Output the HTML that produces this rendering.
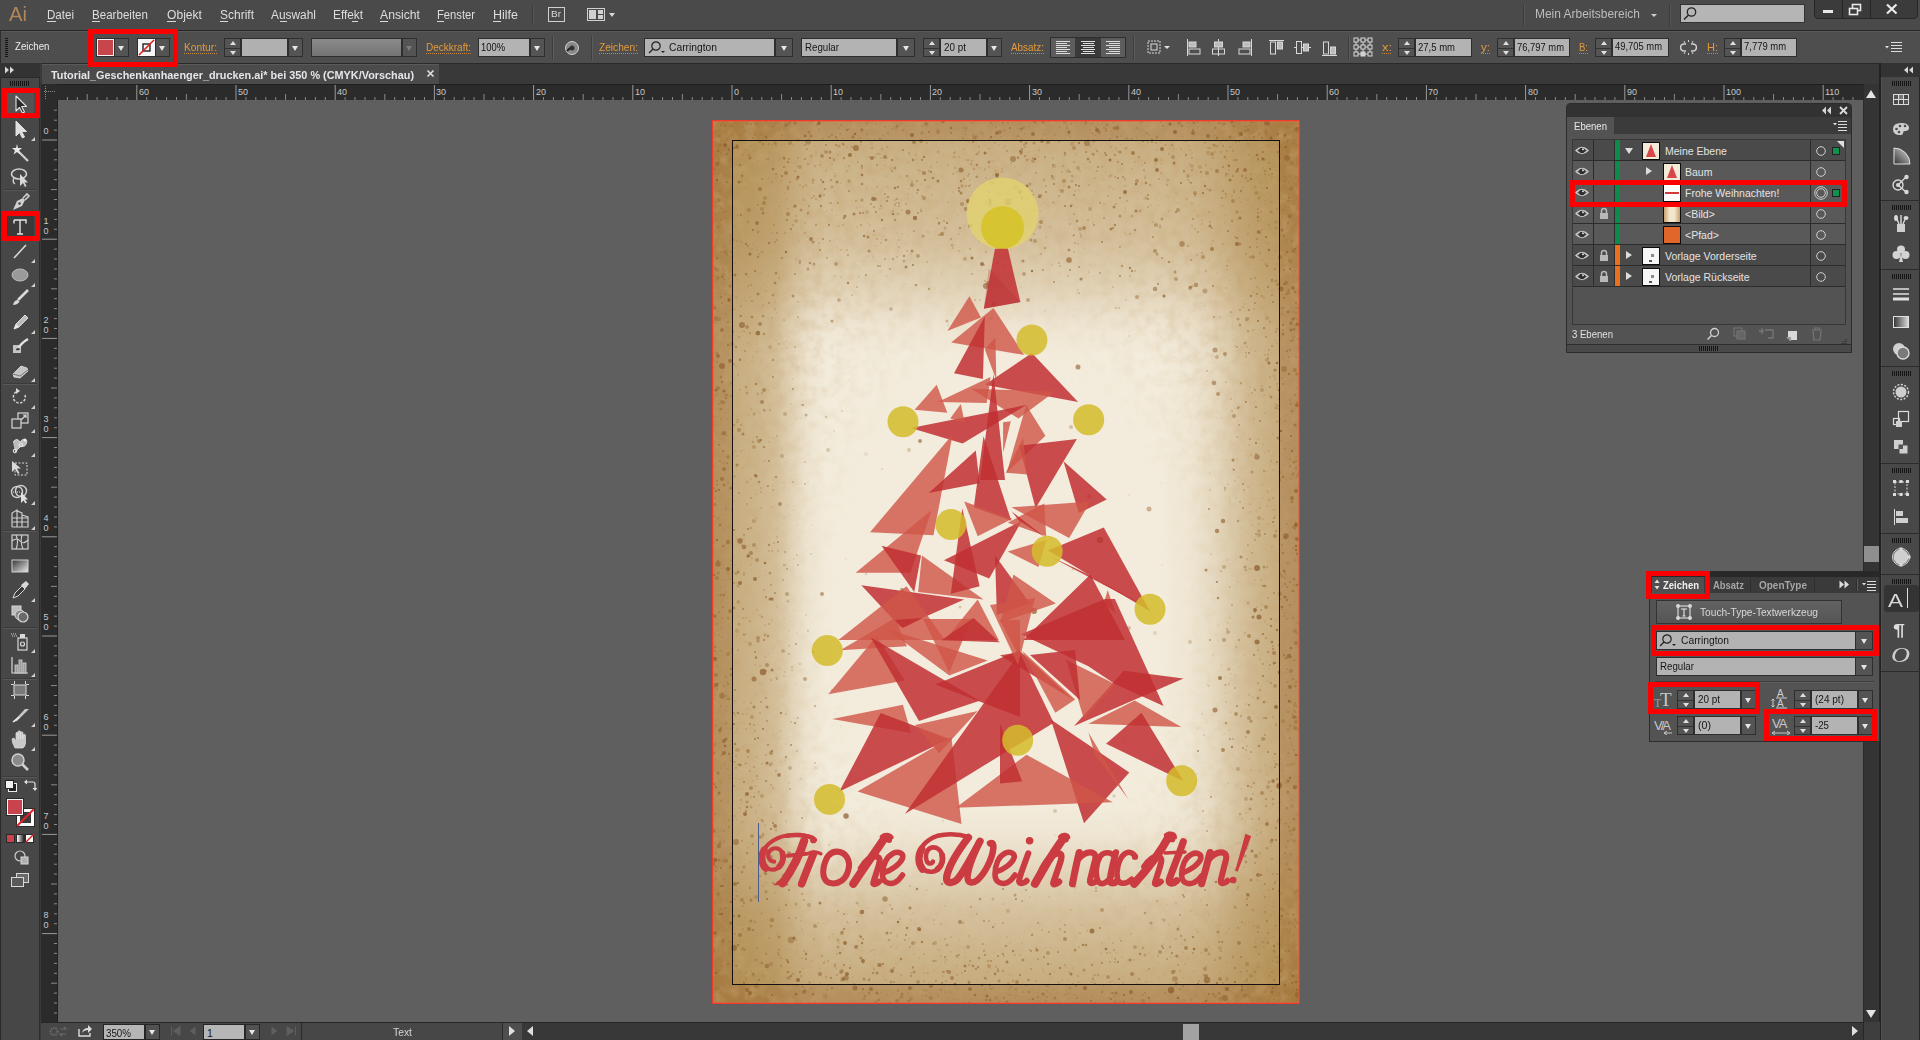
<!DOCTYPE html><html><head><meta charset="utf-8"><style>
*{margin:0;padding:0;box-sizing:border-box}
html,body{width:1920px;height:1040px;overflow:hidden;background:#5f5f5f;font-family:"Liberation Sans",sans-serif;position:relative}
.a{position:absolute}
.t{position:absolute;white-space:nowrap;line-height:1}
</style></head><body>
<div class="a" style="left:0px;top:0px;width:1920px;height:1040px;background:#5f5f5f;"></div>
<div class="a" style="left:0px;top:0px;width:1920px;height:30px;background:#4a4a4a;"></div>
<div class="a" style="left:0px;top:30px;width:1920px;height:1px;background:#262626;"></div>
<div class="t" style="left:9px;top:4.07px;font-size:20px;color:#b3865c;font-weight:normal;font-style:normal;font-family:&quot;Liberation Sans&quot;, sans-serif;transform:scaleX(1.0114);transform-origin:0 0;">Ai</div>
<div class="t" style="left:47px;top:8.92px;font-size:12.5px;color:#dedede;font-weight:normal;font-style:normal;font-family:&quot;Liberation Sans&quot;, sans-serif;transform:scaleX(0.9251);transform-origin:0 0;">Datei</div>
<div class="a" style="left:47px;top:21px;width:9px;height:1px;background:#d8d8d8;"></div>
<div class="t" style="left:92px;top:8.92px;font-size:12.5px;color:#dedede;font-weight:normal;font-style:normal;font-family:&quot;Liberation Sans&quot;, sans-serif;transform:scaleX(0.9261);transform-origin:0 0;">Bearbeiten</div>
<div class="a" style="left:92px;top:21px;width:8px;height:1px;background:#d8d8d8;"></div>
<div class="t" style="left:167px;top:8.92px;font-size:12.5px;color:#dedede;font-weight:normal;font-style:normal;font-family:&quot;Liberation Sans&quot;, sans-serif;transform:scaleX(0.9684);transform-origin:0 0;">Objekt</div>
<div class="a" style="left:167px;top:21px;width:9px;height:1px;background:#d8d8d8;"></div>
<div class="t" style="left:220px;top:8.92px;font-size:12.5px;color:#dedede;font-weight:normal;font-style:normal;font-family:&quot;Liberation Sans&quot;, sans-serif;transform:scaleX(0.9594);transform-origin:0 0;">Schrift</div>
<div class="a" style="left:220px;top:21px;width:8px;height:1px;background:#d8d8d8;"></div>
<div class="t" style="left:271px;top:8.92px;font-size:12.5px;color:#dedede;font-weight:normal;font-style:normal;font-family:&quot;Liberation Sans&quot;, sans-serif;transform:scaleX(0.9524);transform-origin:0 0;">Auswahl</div>
<div class="a" style="left:280px;top:21px;width:7px;height:1px;background:#d8d8d8;"></div>
<div class="t" style="left:333px;top:8.92px;font-size:12.5px;color:#dedede;font-weight:normal;font-style:normal;font-family:&quot;Liberation Sans&quot;, sans-serif;transform:scaleX(0.9453);transform-origin:0 0;">Effekt</div>
<div class="a" style="left:352px;top:21px;width:6px;height:1px;background:#d8d8d8;"></div>
<div class="t" style="left:380px;top:8.92px;font-size:12.5px;color:#dedede;font-weight:normal;font-style:normal;font-family:&quot;Liberation Sans&quot;, sans-serif;transform:scaleX(0.9756);transform-origin:0 0;">Ansicht</div>
<div class="a" style="left:380px;top:21px;width:8px;height:1px;background:#d8d8d8;"></div>
<div class="t" style="left:437px;top:8.92px;font-size:12.5px;color:#dedede;font-weight:normal;font-style:normal;font-family:&quot;Liberation Sans&quot;, sans-serif;transform:scaleX(0.8964);transform-origin:0 0;">Fenster</div>
<div class="a" style="left:437px;top:21px;width:7px;height:1px;background:#d8d8d8;"></div>
<div class="t" style="left:493px;top:8.92px;font-size:12.5px;color:#dedede;font-weight:normal;font-style:normal;font-family:&quot;Liberation Sans&quot;, sans-serif;transform:scaleX(0.9994);transform-origin:0 0;">Hilfe</div>
<div class="a" style="left:493px;top:21px;width:8px;height:1px;background:#d8d8d8;"></div>
<div class="a" style="left:532px;top:6px;width:1px;height:19px;background:#3a3a3a;"></div>
<div class="a" style="left:533px;top:6px;width:1px;height:19px;background:#575757;"></div>
<div class="a" style="left:548px;top:7px;width:17px;height:15px;border:1px solid #d0d0d0"></div>
<div class="t" style="left:551px;top:10.38px;font-size:9px;color:#d8d8d8;font-weight:normal;font-style:normal;font-family:&quot;Liberation Sans&quot;, sans-serif;transform:scaleX(1.1111);transform-origin:0 0;">Br</div>
<div class="a" style="left:587px;top:8px;width:18px;height:13px;border:1px solid #d0d0d0"></div>
<div class="a" style="left:589px;top:10px;width:7px;height:9px;background:#d0d0d0;"></div>
<div class="a" style="left:598px;top:10px;width:5px;height:4px;background:#d0d0d0;"></div>
<div class="a" style="left:598px;top:15px;width:5px;height:4px;background:#d0d0d0;"></div>
<div class="a" style="left:609px;top:13px;width:0;height:0;border-left:3.5px solid transparent;border-right:3.5px solid transparent;border-top:4px solid #d8d8d8"></div>
<div class="a" style="left:1523px;top:5px;width:1px;height:21px;background:#3a3a3a;"></div>
<div class="a" style="left:1524px;top:5px;width:1px;height:21px;background:#575757;"></div>
<div class="t" style="left:1535px;top:7.92px;font-size:12.5px;color:#bdbdbd;font-weight:normal;font-style:normal;font-family:&quot;Liberation Sans&quot;, sans-serif;transform:scaleX(0.9564);transform-origin:0 0;">Mein Arbeitsbereich</div>
<div class="a" style="left:1651px;top:14px;width:0;height:0;border-left:3.0px solid transparent;border-right:3.0px solid transparent;border-top:3px solid #cfcfcf"></div>
<div class="a" style="left:1669px;top:5px;width:1px;height:21px;background:#3a3a3a;"></div>
<div class="a" style="left:1670px;top:5px;width:1px;height:21px;background:#575757;"></div>
<div class="a" style="left:1680px;top:4px;width:125px;height:19px;background:#b5b5b5;border:1px solid #333;"></div>
<svg class="a" style="left:1682px;top:6px;" width="16" height="15" viewBox="0 0 16 15"><circle cx="9.5" cy="6" r="4.2" fill="none" stroke="#222" stroke-width="1.3"/><line x1="6.5" y1="9" x2="2" y2="13.5" stroke="#222" stroke-width="1.5"/></svg>
<div class="a" style="left:1814px;top:-3px;width:104px;height:22px;background:#3b3b3b;border:1px solid #262626;border-radius:0 0 4px 4px;"></div>
<div class="a" style="left:1842px;top:0px;width:1px;height:18px;background:#262626;"></div>
<div class="a" style="left:1870px;top:0px;width:1px;height:18px;background:#262626;"></div>
<div class="a" style="left:1823px;top:10px;width:10px;height:3px;background:#e8e8e8;"></div>
<svg class="a" style="left:1848px;top:3px;" width="16" height="14" viewBox="0 0 16 14"><rect x="4.5" y="1.5" width="8" height="6" fill="none" stroke="#e8e8e8" stroke-width="1.6"/><rect x="1.5" y="5.5" width="8" height="6" fill="#3b3b3b" stroke="#e8e8e8" stroke-width="1.6"/></svg>
<svg class="a" style="left:1885px;top:3px;" width="14" height="12" viewBox="0 0 14 12"><path d="M2 1.5 L11.5 10.5 M11.5 1.5 L2 10.5" stroke="#ececec" stroke-width="2.2"/></svg>
<div class="a" style="left:0px;top:31px;width:1920px;height:32px;background:#4e4e4e;"></div>
<div class="a" style="left:0px;top:31px;width:1920px;height:1px;background:#5a5a5a;"></div>
<div class="a" style="left:0px;top:63px;width:1920px;height:1px;background:#2a2a2a;"></div>
<div class="a" style="left:0px;top:31px;width:1px;height:32px;background:#2e2e2e;"></div>
<div class="a" style="left:5px;top:38px;width:3px;height:1px;background:#151515;"></div>
<div class="a" style="left:5px;top:40px;width:3px;height:1px;background:#151515;"></div>
<div class="a" style="left:5px;top:42px;width:3px;height:1px;background:#151515;"></div>
<div class="a" style="left:5px;top:44px;width:3px;height:1px;background:#151515;"></div>
<div class="a" style="left:5px;top:46px;width:3px;height:1px;background:#151515;"></div>
<div class="a" style="left:5px;top:48px;width:3px;height:1px;background:#151515;"></div>
<div class="a" style="left:5px;top:50px;width:3px;height:1px;background:#151515;"></div>
<div class="a" style="left:5px;top:52px;width:3px;height:1px;background:#151515;"></div>
<div class="a" style="left:5px;top:54px;width:3px;height:1px;background:#151515;"></div>
<div class="a" style="left:5px;top:56px;width:3px;height:1px;background:#151515;"></div>
<div class="t" style="left:15px;top:41.53px;font-size:10px;color:#ececec;font-weight:normal;font-style:normal;font-family:&quot;Liberation Sans&quot;, sans-serif;transform:scaleX(0.9669);transform-origin:0 0;">Zeichen</div>
<div class="a" style="left:96px;top:38px;width:19px;height:19px;background:#5a5a5a;border:1px solid #2e2e2e;"></div>
<div class="a" style="left:97px;top:39px;width:17px;height:17px;background:#f4f4f4;"></div>
<div class="a" style="left:98px;top:40px;width:15px;height:15px;background:#c6464c;"></div>
<div class="a" style="left:114px;top:38px;width:15px;height:19px;background:#545454;border:1px solid #2e2e2e;"></div>
<div class="a" style="left:118.0px;top:45.5px;width:0;height:0;border-left:3.5px solid transparent;border-right:3.5px solid transparent;border-top:5px solid #e6e6e6"></div>
<div class="a" style="left:137px;top:38px;width:19px;height:19px;background:#f6f6f6;border:1px solid #2e2e2e;"></div>
<svg class="a" style="left:137px;top:38px;" width="19" height="19" viewBox="0 0 19 19"><rect x="6" y="6" width="7" height="7" fill="none" stroke="#111" stroke-width="1.3"/><line x1="2" y1="17" x2="17" y2="2" stroke="#e02020" stroke-width="1.6"/></svg>
<div class="a" style="left:155px;top:38px;width:15px;height:19px;background:#545454;border:1px solid #2e2e2e;"></div>
<div class="a" style="left:159.0px;top:45.5px;width:0;height:0;border-left:3.5px solid transparent;border-right:3.5px solid transparent;border-top:5px solid #e6e6e6"></div>
<div class="t" style="left:184px;top:41.61px;font-size:10.5px;color:#e49a3c;font-weight:normal;font-style:normal;font-family:&quot;Liberation Sans&quot;, sans-serif;transform:scaleX(0.9746);transform-origin:0 0;">Kontur:</div>
<div class="a" style="left:184px;top:52.5px;width:33px;height:1px;background-image:linear-gradient(90deg,#c88838 50%,transparent 50%);background-size:2px 1px"></div>
<div class="a" style="left:224px;top:38px;width:17px;height:19px;background:#545454;border:1px solid #2e2e2e;"></div>
<div class="a" style="left:225px;top:47.5px;width:15px;height:1px;background:#333;"></div>
<div class="a" style="left:229.5px;top:41px;width:0;height:0;border-left:3.0px solid transparent;border-right:3.0px solid transparent;border-bottom:4px solid #e0e0e0"></div>
<div class="a" style="left:229.5px;top:50.5px;width:0;height:0;border-left:3.0px solid transparent;border-right:3.0px solid transparent;border-top:4px solid #e0e0e0"></div>
<div class="a" style="left:241px;top:38px;width:47px;height:19px;background:#b0b0b0;border:1px solid #2e2e2e;"></div>
<div class="a" style="left:288px;top:38px;width:15px;height:19px;background:#545454;border:1px solid #2e2e2e;"></div>
<div class="a" style="left:292.0px;top:45.5px;width:0;height:0;border-left:3.5px solid transparent;border-right:3.5px solid transparent;border-top:5px solid #e6e6e6"></div>
<div class="a" style="left:311px;top:38px;width:91px;height:19px;border:1px solid #2e2e2e;background:linear-gradient(180deg,#8a8a8a,#747474)"></div>
<div class="a" style="left:402px;top:38px;width:15px;height:19px;background:#545454;border:1px solid #2e2e2e;"></div>
<div class="a" style="left:406.0px;top:45.5px;width:0;height:0;border-left:3.5px solid transparent;border-right:3.5px solid transparent;border-top:5px solid #7c7c7c"></div>
<div class="t" style="left:426px;top:41.61px;font-size:10.5px;color:#e49a3c;font-weight:normal;font-style:normal;font-family:&quot;Liberation Sans&quot;, sans-serif;transform:scaleX(0.9521);transform-origin:0 0;">Deckkraft:</div>
<div class="a" style="left:426px;top:52.5px;width:45px;height:1px;background-image:linear-gradient(90deg,#c88838 50%,transparent 50%);background-size:2px 1px"></div>
<div class="a" style="left:478px;top:38px;width:52px;height:19px;background:#b3b3b3;border:1px solid #2e2e2e;"></div>
<div class="t" style="left:481px;top:41.61px;font-size:10.5px;color:#111;font-weight:normal;font-style:normal;font-family:&quot;Liberation Sans&quot;, sans-serif;transform:scaleX(0.8935);transform-origin:0 0;">100%</div>
<div class="a" style="left:530px;top:38px;width:15px;height:19px;background:#545454;border:1px solid #2e2e2e;"></div>
<div class="a" style="left:534.0px;top:45.5px;width:0;height:0;border-left:3.5px solid transparent;border-right:3.5px solid transparent;border-top:5px solid #e6e6e6"></div>
<div class="a" style="left:552px;top:36px;width:1px;height:24px;background:#3e3e3e;"></div>
<div class="a" style="left:553px;top:36px;width:1px;height:24px;background:#5c5c5c;"></div>
<svg class="a" style="left:564px;top:40px;" width="16" height="16" viewBox="0 0 16 16"><circle cx="8" cy="8" r="6.5" fill="#8a8a8a" stroke="#cfcfcf" stroke-width="1"/><circle cx="8" cy="8" r="2.5" fill="#333"/><path d="M3 11 L6 8" stroke="#222" stroke-width="2"/></svg>
<div class="a" style="left:591px;top:36px;width:1px;height:24px;background:#3e3e3e;"></div>
<div class="a" style="left:592px;top:36px;width:1px;height:24px;background:#5c5c5c;"></div>
<div class="t" style="left:599px;top:41.61px;font-size:10.5px;color:#e49a3c;font-weight:normal;font-style:normal;font-family:&quot;Liberation Sans&quot;, sans-serif;transform:scaleX(0.9682);transform-origin:0 0;">Zeichen:</div>
<div class="a" style="left:599px;top:52.5px;width:39px;height:1px;background-image:linear-gradient(90deg,#c88838 50%,transparent 50%);background-size:2px 1px"></div>
<div class="a" style="left:644px;top:38px;width:131px;height:19px;background:#b3b3b3;border:1px solid #2e2e2e;"></div>
<svg class="a" style="left:647px;top:40px;" width="22" height="15" viewBox="0 0 22 15"><circle cx="9" cy="6" r="4.2" fill="none" stroke="#222" stroke-width="1.2"/><line x1="6" y1="9" x2="2" y2="13" stroke="#222" stroke-width="1.3"/><path d="M14 11 L18 11 L16 13 Z" fill="#222"/></svg>
<div class="t" style="left:669px;top:42.11px;font-size:10.5px;color:#161616;font-weight:normal;font-style:normal;font-family:&quot;Liberation Sans&quot;, sans-serif;transform:scaleX(0.9790);transform-origin:0 0;">Carrington</div>
<div class="a" style="left:775px;top:38px;width:18px;height:19px;background:#545454;border:1px solid #2e2e2e;"></div>
<div class="a" style="left:780.5px;top:45.5px;width:0;height:0;border-left:3.5px solid transparent;border-right:3.5px solid transparent;border-top:5px solid #e6e6e6"></div>
<div class="a" style="left:801px;top:38px;width:96px;height:19px;background:#b3b3b3;border:1px solid #2e2e2e;"></div>
<div class="t" style="left:805px;top:42.11px;font-size:10.5px;color:#161616;font-weight:normal;font-style:normal;font-family:&quot;Liberation Sans&quot;, sans-serif;transform:scaleX(0.9244);transform-origin:0 0;">Regular</div>
<div class="a" style="left:897px;top:38px;width:18px;height:19px;background:#545454;border:1px solid #2e2e2e;"></div>
<div class="a" style="left:902.5px;top:45.5px;width:0;height:0;border-left:3.5px solid transparent;border-right:3.5px solid transparent;border-top:5px solid #e6e6e6"></div>
<div class="a" style="left:923px;top:38px;width:17px;height:19px;background:#545454;border:1px solid #2e2e2e;"></div>
<div class="a" style="left:924px;top:47.5px;width:15px;height:1px;background:#333;"></div>
<div class="a" style="left:928.5px;top:41px;width:0;height:0;border-left:3.0px solid transparent;border-right:3.0px solid transparent;border-bottom:4px solid #e0e0e0"></div>
<div class="a" style="left:928.5px;top:50.5px;width:0;height:0;border-left:3.0px solid transparent;border-right:3.0px solid transparent;border-top:4px solid #e0e0e0"></div>
<div class="a" style="left:940px;top:38px;width:47px;height:19px;background:#b3b3b3;border:1px solid #2e2e2e;"></div>
<div class="t" style="left:944px;top:42.11px;font-size:10.5px;color:#161616;font-weight:normal;font-style:normal;font-family:&quot;Liberation Sans&quot;, sans-serif;transform:scaleX(0.9418);transform-origin:0 0;">20 pt</div>
<div class="a" style="left:987px;top:38px;width:15px;height:19px;background:#545454;border:1px solid #2e2e2e;"></div>
<div class="a" style="left:991.0px;top:45.5px;width:0;height:0;border-left:3.5px solid transparent;border-right:3.5px solid transparent;border-top:5px solid #e6e6e6"></div>
<div class="t" style="left:1011px;top:41.61px;font-size:10.5px;color:#e49a3c;font-weight:normal;font-style:normal;font-family:&quot;Liberation Sans&quot;, sans-serif;transform:scaleX(0.9420);transform-origin:0 0;">Absatz:</div>
<div class="a" style="left:1011px;top:52.5px;width:33px;height:1px;background-image:linear-gradient(90deg,#c88838 50%,transparent 50%);background-size:2px 1px"></div>
<div class="a" style="left:1050px;top:37px;width:76px;height:21px;background:#3a3a3a;border:1px solid #2e2e2e;"></div>
<div class="a" style="left:1051px;top:38px;width:24px;height:19px;background:#5d5d5d;"></div>
<div class="a" style="left:1076px;top:38px;width:24px;height:19px;background:#393939;"></div>
<div class="a" style="left:1101px;top:38px;width:24px;height:19px;background:#5d5d5d;"></div>
<div class="a" style="left:1056px;top:41px;width:14px;height:1px;background:#dcdcdc;"></div>
<div class="a" style="left:1056px;top:43px;width:11px;height:1px;background:#dcdcdc;"></div>
<div class="a" style="left:1056px;top:45px;width:14px;height:1px;background:#dcdcdc;"></div>
<div class="a" style="left:1056px;top:47px;width:11px;height:1px;background:#dcdcdc;"></div>
<div class="a" style="left:1056px;top:49px;width:14px;height:1px;background:#dcdcdc;"></div>
<div class="a" style="left:1056px;top:51px;width:11px;height:1px;background:#dcdcdc;"></div>
<div class="a" style="left:1056px;top:53px;width:14px;height:1px;background:#dcdcdc;"></div>
<div class="a" style="left:1081.0px;top:41px;width:14px;height:1px;background:#dcdcdc;"></div>
<div class="a" style="left:1082.5px;top:43px;width:11px;height:1px;background:#dcdcdc;"></div>
<div class="a" style="left:1081.0px;top:45px;width:14px;height:1px;background:#dcdcdc;"></div>
<div class="a" style="left:1082.5px;top:47px;width:11px;height:1px;background:#dcdcdc;"></div>
<div class="a" style="left:1081.0px;top:49px;width:14px;height:1px;background:#dcdcdc;"></div>
<div class="a" style="left:1082.5px;top:51px;width:11px;height:1px;background:#dcdcdc;"></div>
<div class="a" style="left:1081.0px;top:53px;width:14px;height:1px;background:#dcdcdc;"></div>
<div class="a" style="left:1106px;top:41px;width:14px;height:1px;background:#dcdcdc;"></div>
<div class="a" style="left:1109px;top:43px;width:11px;height:1px;background:#dcdcdc;"></div>
<div class="a" style="left:1106px;top:45px;width:14px;height:1px;background:#dcdcdc;"></div>
<div class="a" style="left:1109px;top:47px;width:11px;height:1px;background:#dcdcdc;"></div>
<div class="a" style="left:1106px;top:49px;width:14px;height:1px;background:#dcdcdc;"></div>
<div class="a" style="left:1109px;top:51px;width:11px;height:1px;background:#dcdcdc;"></div>
<div class="a" style="left:1106px;top:53px;width:14px;height:1px;background:#dcdcdc;"></div>
<div class="a" style="left:1133px;top:36px;width:1px;height:24px;background:#3e3e3e;"></div>
<div class="a" style="left:1134px;top:36px;width:1px;height:24px;background:#5c5c5c;"></div>
<svg class="a" style="left:1145px;top:38px;" width="28" height="20" viewBox="0 0 28 20"><rect x="3" y="3" width="12" height="12" fill="none" stroke="#d8d8d8" stroke-width="1" stroke-dasharray="2 1"/><rect x="6" y="6" width="6" height="6" fill="none" stroke="#d8d8d8"/><path d="M19 8 L25 8 L22 11 Z" fill="#e0e0e0"/></svg>
<svg class="a" style="left:1185px;top:38px;" width="16" height="20" viewBox="0 0 16 20"><line x1="2.5" y1="1" x2="2.5" y2="18" stroke="#d8d8d8" stroke-width="1"/><rect x="4" y="4" width="7" height="5" fill="#bcbcbc" stroke="#d8d8d8"/><rect x="4" y="11" width="11" height="5" fill="none" stroke="#d8d8d8"/></svg>
<svg class="a" style="left:1211px;top:38px;" width="16" height="20" viewBox="0 0 16 20"><line x1="7.5" y1="1" x2="7.5" y2="18" stroke="#d8d8d8"/><rect x="3.5" y="4" width="8" height="5" fill="#bcbcbc" stroke="#d8d8d8"/><rect x="1.5" y="11" width="12" height="5" fill="none" stroke="#d8d8d8"/></svg>
<svg class="a" style="left:1238px;top:38px;" width="16" height="20" viewBox="0 0 16 20"><line x1="13.5" y1="1" x2="13.5" y2="18" stroke="#d8d8d8"/><rect x="5" y="4" width="7" height="5" fill="#bcbcbc" stroke="#d8d8d8"/><rect x="1" y="11" width="11" height="5" fill="none" stroke="#d8d8d8"/></svg>
<svg class="a" style="left:1268px;top:38px;" width="18" height="20" viewBox="0 0 18 20"><line x1="1" y1="2.5" x2="16" y2="2.5" stroke="#d8d8d8"/><rect x="2.5" y="4" width="5" height="12" fill="none" stroke="#d8d8d8"/><rect x="9.5" y="4" width="5" height="7" fill="#bcbcbc" stroke="#d8d8d8"/></svg>
<svg class="a" style="left:1294px;top:38px;" width="18" height="20" viewBox="0 0 18 20"><line x1="0" y1="9.5" x2="17" y2="9.5" stroke="#d8d8d8"/><rect x="2.5" y="3.5" width="5" height="12" fill="#4e4e4e" stroke="#d8d8d8"/><rect x="9.5" y="6" width="5" height="7" fill="#bcbcbc" stroke="#d8d8d8"/></svg>
<svg class="a" style="left:1321px;top:38px;" width="18" height="20" viewBox="0 0 18 20"><line x1="1" y1="17.5" x2="16" y2="17.5" stroke="#d8d8d8"/><rect x="2.5" y="4" width="5" height="12" fill="none" stroke="#d8d8d8"/><rect x="9.5" y="9" width="5" height="7" fill="#bcbcbc" stroke="#d8d8d8"/></svg>
<div class="a" style="left:1348px;top:36px;width:1px;height:24px;background:#3e3e3e;"></div>
<div class="a" style="left:1349px;top:36px;width:1px;height:24px;background:#5c5c5c;"></div>
<svg class="a" style="left:1353px;top:37px;" width="21" height="21" viewBox="0 0 21 21"><rect x="1" y="1" width="4" height="4" fill="none" stroke="#d8d8d8" stroke-width="1"/><rect x="8" y="1" width="4" height="4" fill="none" stroke="#d8d8d8" stroke-width="1"/><rect x="15" y="1" width="4" height="4" fill="none" stroke="#d8d8d8" stroke-width="1"/><rect x="1" y="8" width="4" height="4" fill="none" stroke="#d8d8d8" stroke-width="1"/><rect x="8" y="8" width="4" height="4" fill="none" stroke="#d8d8d8" stroke-width="1"/><rect x="15" y="8" width="4" height="4" fill="none" stroke="#d8d8d8" stroke-width="1"/><rect x="1" y="15" width="4" height="4" fill="none" stroke="#d8d8d8" stroke-width="1"/><rect x="8" y="15" width="4" height="4" fill="#cfcfcf" stroke="#d8d8d8" stroke-width="1"/><rect x="15" y="15" width="4" height="4" fill="none" stroke="#d8d8d8" stroke-width="1"/><path d="M5 3h3M12 3h3M5 10h3M12 10h3M5 17h3M12 17h3M3 5v3M3 12v3M10 5v3M10 12v3M17 5v3M17 12v3" stroke="#d8d8d8"/></svg>
<div class="t" style="left:1382px;top:41.61px;font-size:10.5px;color:#e49a3c;font-weight:normal;font-style:normal;font-family:&quot;Liberation Sans&quot;, sans-serif;transform:scaleX(1.2237);transform-origin:0 0;">x:</div>
<div class="a" style="left:1382px;top:52.5px;width:10px;height:1px;background-image:linear-gradient(90deg,#c88838 50%,transparent 50%);background-size:2px 1px"></div>
<div class="a" style="left:1398px;top:38px;width:17px;height:19px;background:#545454;border:1px solid #2e2e2e;"></div>
<div class="a" style="left:1399px;top:47.5px;width:15px;height:1px;background:#333;"></div>
<div class="a" style="left:1403.5px;top:41px;width:0;height:0;border-left:3.0px solid transparent;border-right:3.0px solid transparent;border-bottom:4px solid #e0e0e0"></div>
<div class="a" style="left:1403.5px;top:50.5px;width:0;height:0;border-left:3.0px solid transparent;border-right:3.0px solid transparent;border-top:4px solid #e0e0e0"></div>
<div class="a" style="left:1415px;top:38px;width:57px;height:19px;background:#b3b3b3;border:1px solid #2e2e2e;"></div>
<div class="t" style="left:1418px;top:42.11px;font-size:10.5px;color:#161616;font-weight:normal;font-style:normal;font-family:&quot;Liberation Sans&quot;, sans-serif;transform:scaleX(0.9055);transform-origin:0 0;">27,5 mm</div>
<div class="t" style="left:1481px;top:41.61px;font-size:10.5px;color:#e49a3c;font-weight:normal;font-style:normal;font-family:&quot;Liberation Sans&quot;, sans-serif;transform:scaleX(1.1013);transform-origin:0 0;">y:</div>
<div class="a" style="left:1481px;top:52.5px;width:9px;height:1px;background-image:linear-gradient(90deg,#c88838 50%,transparent 50%);background-size:2px 1px"></div>
<div class="a" style="left:1497px;top:38px;width:17px;height:19px;background:#545454;border:1px solid #2e2e2e;"></div>
<div class="a" style="left:1498px;top:47.5px;width:15px;height:1px;background:#333;"></div>
<div class="a" style="left:1502.5px;top:41px;width:0;height:0;border-left:3.0px solid transparent;border-right:3.0px solid transparent;border-bottom:4px solid #e0e0e0"></div>
<div class="a" style="left:1502.5px;top:50.5px;width:0;height:0;border-left:3.0px solid transparent;border-right:3.0px solid transparent;border-top:4px solid #e0e0e0"></div>
<div class="a" style="left:1514px;top:38px;width:56px;height:19px;background:#b3b3b3;border:1px solid #2e2e2e;"></div>
<div class="t" style="left:1517px;top:42.11px;font-size:10.5px;color:#161616;font-weight:normal;font-style:normal;font-family:&quot;Liberation Sans&quot;, sans-serif;transform:scaleX(0.8947);transform-origin:0 0;">76,797 mm</div>
<div class="t" style="left:1579px;top:41.61px;font-size:10.5px;color:#e49a3c;font-weight:normal;font-style:normal;font-family:&quot;Liberation Sans&quot;, sans-serif;transform:scaleX(0.9071);transform-origin:0 0;">B:</div>
<div class="a" style="left:1579px;top:52.5px;width:9px;height:1px;background-image:linear-gradient(90deg,#c88838 50%,transparent 50%);background-size:2px 1px"></div>
<div class="a" style="left:1595px;top:38px;width:17px;height:19px;background:#545454;border:1px solid #2e2e2e;"></div>
<div class="a" style="left:1596px;top:47.5px;width:15px;height:1px;background:#333;"></div>
<div class="a" style="left:1600.5px;top:41px;width:0;height:0;border-left:3.0px solid transparent;border-right:3.0px solid transparent;border-bottom:4px solid #e0e0e0"></div>
<div class="a" style="left:1600.5px;top:50.5px;width:0;height:0;border-left:3.0px solid transparent;border-right:3.0px solid transparent;border-top:4px solid #e0e0e0"></div>
<div class="a" style="left:1612px;top:38px;width:57px;height:19px;background:#b3b3b3;border:1px solid #2e2e2e;"></div>
<div class="t" style="left:1615px;top:41.11px;font-size:10.5px;color:#161616;font-weight:normal;font-style:normal;font-family:&quot;Liberation Sans&quot;, sans-serif;transform:scaleX(0.8947);transform-origin:0 0;">49,705 mm</div>
<svg class="a" style="left:1680px;top:39px;" width="17" height="17" viewBox="0 0 17 17"><path d="M6 5 H4 a3.5 3.5 0 0 0 0 7 H6 M11 5 H13 a3.5 3.5 0 0 1 0 7 H11" fill="none" stroke="#d0d0d0" stroke-width="1.6"/><path d="M8.5 1v2M8.5 14v2M4 2l1 2M13 2l-1 2M4 15l1-2M13 15l-1-2" stroke="#d0d0d0"/></svg>
<div class="t" style="left:1707px;top:41.61px;font-size:10.5px;color:#e49a3c;font-weight:normal;font-style:normal;font-family:&quot;Liberation Sans&quot;, sans-serif;transform:scaleX(1.0476);transform-origin:0 0;">H:</div>
<div class="a" style="left:1707px;top:52.5px;width:11px;height:1px;background-image:linear-gradient(90deg,#c88838 50%,transparent 50%);background-size:2px 1px"></div>
<div class="a" style="left:1724px;top:38px;width:17px;height:19px;background:#545454;border:1px solid #2e2e2e;"></div>
<div class="a" style="left:1725px;top:47.5px;width:15px;height:1px;background:#333;"></div>
<div class="a" style="left:1729.5px;top:41px;width:0;height:0;border-left:3.0px solid transparent;border-right:3.0px solid transparent;border-bottom:4px solid #e0e0e0"></div>
<div class="a" style="left:1729.5px;top:50.5px;width:0;height:0;border-left:3.0px solid transparent;border-right:3.0px solid transparent;border-top:4px solid #e0e0e0"></div>
<div class="a" style="left:1741px;top:38px;width:56px;height:19px;background:#b3b3b3;border:1px solid #2e2e2e;"></div>
<div class="t" style="left:1744px;top:41.11px;font-size:10.5px;color:#161616;font-weight:normal;font-style:normal;font-family:&quot;Liberation Sans&quot;, sans-serif;transform:scaleX(0.8996);transform-origin:0 0;">7,779 mm</div>
<svg class="a" style="left:1884px;top:40px;" width="20" height="14" viewBox="0 0 20 14"><path d="M1 6 L5 6 L3 8.5 Z" fill="#dcdcdc"/><path d="M7 2.5h11M7 5.5h11M7 8.5h11M7 11.5h11" stroke="#dcdcdc" stroke-width="1.2"/></svg>
<div class="a" style="left:41px;top:64px;width:1840px;height:20px;background:#393939;"></div>
<div class="a" style="left:42px;top:64px;width:397px;height:20px;background:#4b4b4b;"></div>
<div class="a" style="left:42px;top:64px;width:397px;height:1px;background:#5a5a5a;"></div>
<div class="t" style="left:51px;top:69.69px;font-size:11px;color:#e6e6ea;font-weight:bold;font-style:normal;font-family:&quot;Liberation Sans&quot;, sans-serif;transform:scaleX(0.9875);transform-origin:0 0;">Tutorial_Geschenkanhaenger_drucken.ai* bei 350 % (CMYK/Vorschau)</div>
<svg class="a" style="left:426px;top:69px;" width="9" height="9" viewBox="0 0 9 9"><path d="M1.5 1.5 L7.5 7.5 M7.5 1.5 L1.5 7.5" stroke="#e0e0e0" stroke-width="1.6"/></svg>
<div class="a" style="left:41px;top:84px;width:1822px;height:16px;background:#2b2b2b;"></div>
<div class="a" style="left:41px;top:84px;width:1822px;height:1px;background:#1e1e1e;"></div>
<div class="a" style="left:41px;top:84px;width:16px;height:938px;background:#2b2b2b;"></div>
<svg class="a" style="left:41px;top:84px;" width="1822" height="16" viewBox="0 0 1822 16"><line x1="26.4" y1="13" x2="26.4" y2="16" stroke="#8a8a8a" stroke-width="1"/><line x1="36.3" y1="13" x2="36.3" y2="16" stroke="#8a8a8a" stroke-width="1"/><line x1="46.2" y1="10" x2="46.2" y2="16" stroke="#8a8a8a" stroke-width="1"/><line x1="56.1" y1="13" x2="56.1" y2="16" stroke="#8a8a8a" stroke-width="1"/><line x1="66.0" y1="13" x2="66.0" y2="16" stroke="#8a8a8a" stroke-width="1"/><line x1="76.0" y1="13" x2="76.0" y2="16" stroke="#8a8a8a" stroke-width="1"/><line x1="85.9" y1="13" x2="85.9" y2="16" stroke="#8a8a8a" stroke-width="1"/><line x1="95.8" y1="1" x2="95.8" y2="16" stroke="#9a9a9a" stroke-width="1"/><line x1="105.7" y1="13" x2="105.7" y2="16" stroke="#8a8a8a" stroke-width="1"/><line x1="115.6" y1="13" x2="115.6" y2="16" stroke="#8a8a8a" stroke-width="1"/><line x1="125.6" y1="13" x2="125.6" y2="16" stroke="#8a8a8a" stroke-width="1"/><line x1="135.5" y1="13" x2="135.5" y2="16" stroke="#8a8a8a" stroke-width="1"/><line x1="145.4" y1="10" x2="145.4" y2="16" stroke="#8a8a8a" stroke-width="1"/><line x1="155.3" y1="13" x2="155.3" y2="16" stroke="#8a8a8a" stroke-width="1"/><line x1="165.2" y1="13" x2="165.2" y2="16" stroke="#8a8a8a" stroke-width="1"/><line x1="175.2" y1="13" x2="175.2" y2="16" stroke="#8a8a8a" stroke-width="1"/><line x1="185.1" y1="13" x2="185.1" y2="16" stroke="#8a8a8a" stroke-width="1"/><line x1="195.0" y1="1" x2="195.0" y2="16" stroke="#9a9a9a" stroke-width="1"/><line x1="204.9" y1="13" x2="204.9" y2="16" stroke="#8a8a8a" stroke-width="1"/><line x1="214.8" y1="13" x2="214.8" y2="16" stroke="#8a8a8a" stroke-width="1"/><line x1="224.8" y1="13" x2="224.8" y2="16" stroke="#8a8a8a" stroke-width="1"/><line x1="234.7" y1="13" x2="234.7" y2="16" stroke="#8a8a8a" stroke-width="1"/><line x1="244.6" y1="10" x2="244.6" y2="16" stroke="#8a8a8a" stroke-width="1"/><line x1="254.5" y1="13" x2="254.5" y2="16" stroke="#8a8a8a" stroke-width="1"/><line x1="264.4" y1="13" x2="264.4" y2="16" stroke="#8a8a8a" stroke-width="1"/><line x1="274.4" y1="13" x2="274.4" y2="16" stroke="#8a8a8a" stroke-width="1"/><line x1="284.3" y1="13" x2="284.3" y2="16" stroke="#8a8a8a" stroke-width="1"/><line x1="294.2" y1="1" x2="294.2" y2="16" stroke="#9a9a9a" stroke-width="1"/><line x1="304.1" y1="13" x2="304.1" y2="16" stroke="#8a8a8a" stroke-width="1"/><line x1="314.0" y1="13" x2="314.0" y2="16" stroke="#8a8a8a" stroke-width="1"/><line x1="324.0" y1="13" x2="324.0" y2="16" stroke="#8a8a8a" stroke-width="1"/><line x1="333.9" y1="13" x2="333.9" y2="16" stroke="#8a8a8a" stroke-width="1"/><line x1="343.8" y1="10" x2="343.8" y2="16" stroke="#8a8a8a" stroke-width="1"/><line x1="353.7" y1="13" x2="353.7" y2="16" stroke="#8a8a8a" stroke-width="1"/><line x1="363.6" y1="13" x2="363.6" y2="16" stroke="#8a8a8a" stroke-width="1"/><line x1="373.6" y1="13" x2="373.6" y2="16" stroke="#8a8a8a" stroke-width="1"/><line x1="383.5" y1="13" x2="383.5" y2="16" stroke="#8a8a8a" stroke-width="1"/><line x1="393.4" y1="1" x2="393.4" y2="16" stroke="#9a9a9a" stroke-width="1"/><line x1="403.3" y1="13" x2="403.3" y2="16" stroke="#8a8a8a" stroke-width="1"/><line x1="413.2" y1="13" x2="413.2" y2="16" stroke="#8a8a8a" stroke-width="1"/><line x1="423.2" y1="13" x2="423.2" y2="16" stroke="#8a8a8a" stroke-width="1"/><line x1="433.1" y1="13" x2="433.1" y2="16" stroke="#8a8a8a" stroke-width="1"/><line x1="443.0" y1="10" x2="443.0" y2="16" stroke="#8a8a8a" stroke-width="1"/><line x1="452.9" y1="13" x2="452.9" y2="16" stroke="#8a8a8a" stroke-width="1"/><line x1="462.8" y1="13" x2="462.8" y2="16" stroke="#8a8a8a" stroke-width="1"/><line x1="472.8" y1="13" x2="472.8" y2="16" stroke="#8a8a8a" stroke-width="1"/><line x1="482.7" y1="13" x2="482.7" y2="16" stroke="#8a8a8a" stroke-width="1"/><line x1="492.6" y1="1" x2="492.6" y2="16" stroke="#9a9a9a" stroke-width="1"/><line x1="502.5" y1="13" x2="502.5" y2="16" stroke="#8a8a8a" stroke-width="1"/><line x1="512.4" y1="13" x2="512.4" y2="16" stroke="#8a8a8a" stroke-width="1"/><line x1="522.4" y1="13" x2="522.4" y2="16" stroke="#8a8a8a" stroke-width="1"/><line x1="532.3" y1="13" x2="532.3" y2="16" stroke="#8a8a8a" stroke-width="1"/><line x1="542.2" y1="10" x2="542.2" y2="16" stroke="#8a8a8a" stroke-width="1"/><line x1="552.1" y1="13" x2="552.1" y2="16" stroke="#8a8a8a" stroke-width="1"/><line x1="562.0" y1="13" x2="562.0" y2="16" stroke="#8a8a8a" stroke-width="1"/><line x1="572.0" y1="13" x2="572.0" y2="16" stroke="#8a8a8a" stroke-width="1"/><line x1="581.9" y1="13" x2="581.9" y2="16" stroke="#8a8a8a" stroke-width="1"/><line x1="591.8" y1="1" x2="591.8" y2="16" stroke="#9a9a9a" stroke-width="1"/><line x1="601.7" y1="13" x2="601.7" y2="16" stroke="#8a8a8a" stroke-width="1"/><line x1="611.6" y1="13" x2="611.6" y2="16" stroke="#8a8a8a" stroke-width="1"/><line x1="621.6" y1="13" x2="621.6" y2="16" stroke="#8a8a8a" stroke-width="1"/><line x1="631.5" y1="13" x2="631.5" y2="16" stroke="#8a8a8a" stroke-width="1"/><line x1="641.4" y1="10" x2="641.4" y2="16" stroke="#8a8a8a" stroke-width="1"/><line x1="651.3" y1="13" x2="651.3" y2="16" stroke="#8a8a8a" stroke-width="1"/><line x1="661.2" y1="13" x2="661.2" y2="16" stroke="#8a8a8a" stroke-width="1"/><line x1="671.2" y1="13" x2="671.2" y2="16" stroke="#8a8a8a" stroke-width="1"/><line x1="681.1" y1="13" x2="681.1" y2="16" stroke="#8a8a8a" stroke-width="1"/><line x1="691.0" y1="1" x2="691.0" y2="16" stroke="#9a9a9a" stroke-width="1"/><line x1="700.9" y1="13" x2="700.9" y2="16" stroke="#8a8a8a" stroke-width="1"/><line x1="710.8" y1="13" x2="710.8" y2="16" stroke="#8a8a8a" stroke-width="1"/><line x1="720.8" y1="13" x2="720.8" y2="16" stroke="#8a8a8a" stroke-width="1"/><line x1="730.7" y1="13" x2="730.7" y2="16" stroke="#8a8a8a" stroke-width="1"/><line x1="740.6" y1="10" x2="740.6" y2="16" stroke="#8a8a8a" stroke-width="1"/><line x1="750.5" y1="13" x2="750.5" y2="16" stroke="#8a8a8a" stroke-width="1"/><line x1="760.4" y1="13" x2="760.4" y2="16" stroke="#8a8a8a" stroke-width="1"/><line x1="770.4" y1="13" x2="770.4" y2="16" stroke="#8a8a8a" stroke-width="1"/><line x1="780.3" y1="13" x2="780.3" y2="16" stroke="#8a8a8a" stroke-width="1"/><line x1="790.2" y1="1" x2="790.2" y2="16" stroke="#9a9a9a" stroke-width="1"/><line x1="800.1" y1="13" x2="800.1" y2="16" stroke="#8a8a8a" stroke-width="1"/><line x1="810.0" y1="13" x2="810.0" y2="16" stroke="#8a8a8a" stroke-width="1"/><line x1="820.0" y1="13" x2="820.0" y2="16" stroke="#8a8a8a" stroke-width="1"/><line x1="829.9" y1="13" x2="829.9" y2="16" stroke="#8a8a8a" stroke-width="1"/><line x1="839.8" y1="10" x2="839.8" y2="16" stroke="#8a8a8a" stroke-width="1"/><line x1="849.7" y1="13" x2="849.7" y2="16" stroke="#8a8a8a" stroke-width="1"/><line x1="859.6" y1="13" x2="859.6" y2="16" stroke="#8a8a8a" stroke-width="1"/><line x1="869.6" y1="13" x2="869.6" y2="16" stroke="#8a8a8a" stroke-width="1"/><line x1="879.5" y1="13" x2="879.5" y2="16" stroke="#8a8a8a" stroke-width="1"/><line x1="889.4" y1="1" x2="889.4" y2="16" stroke="#9a9a9a" stroke-width="1"/><line x1="899.3" y1="13" x2="899.3" y2="16" stroke="#8a8a8a" stroke-width="1"/><line x1="909.2" y1="13" x2="909.2" y2="16" stroke="#8a8a8a" stroke-width="1"/><line x1="919.2" y1="13" x2="919.2" y2="16" stroke="#8a8a8a" stroke-width="1"/><line x1="929.1" y1="13" x2="929.1" y2="16" stroke="#8a8a8a" stroke-width="1"/><line x1="939.0" y1="10" x2="939.0" y2="16" stroke="#8a8a8a" stroke-width="1"/><line x1="948.9" y1="13" x2="948.9" y2="16" stroke="#8a8a8a" stroke-width="1"/><line x1="958.8" y1="13" x2="958.8" y2="16" stroke="#8a8a8a" stroke-width="1"/><line x1="968.8" y1="13" x2="968.8" y2="16" stroke="#8a8a8a" stroke-width="1"/><line x1="978.7" y1="13" x2="978.7" y2="16" stroke="#8a8a8a" stroke-width="1"/><line x1="988.6" y1="1" x2="988.6" y2="16" stroke="#9a9a9a" stroke-width="1"/><line x1="998.5" y1="13" x2="998.5" y2="16" stroke="#8a8a8a" stroke-width="1"/><line x1="1008.4" y1="13" x2="1008.4" y2="16" stroke="#8a8a8a" stroke-width="1"/><line x1="1018.4" y1="13" x2="1018.4" y2="16" stroke="#8a8a8a" stroke-width="1"/><line x1="1028.3" y1="13" x2="1028.3" y2="16" stroke="#8a8a8a" stroke-width="1"/><line x1="1038.2" y1="10" x2="1038.2" y2="16" stroke="#8a8a8a" stroke-width="1"/><line x1="1048.1" y1="13" x2="1048.1" y2="16" stroke="#8a8a8a" stroke-width="1"/><line x1="1058.0" y1="13" x2="1058.0" y2="16" stroke="#8a8a8a" stroke-width="1"/><line x1="1068.0" y1="13" x2="1068.0" y2="16" stroke="#8a8a8a" stroke-width="1"/><line x1="1077.9" y1="13" x2="1077.9" y2="16" stroke="#8a8a8a" stroke-width="1"/><line x1="1087.8" y1="1" x2="1087.8" y2="16" stroke="#9a9a9a" stroke-width="1"/><line x1="1097.7" y1="13" x2="1097.7" y2="16" stroke="#8a8a8a" stroke-width="1"/><line x1="1107.6" y1="13" x2="1107.6" y2="16" stroke="#8a8a8a" stroke-width="1"/><line x1="1117.6" y1="13" x2="1117.6" y2="16" stroke="#8a8a8a" stroke-width="1"/><line x1="1127.5" y1="13" x2="1127.5" y2="16" stroke="#8a8a8a" stroke-width="1"/><line x1="1137.4" y1="10" x2="1137.4" y2="16" stroke="#8a8a8a" stroke-width="1"/><line x1="1147.3" y1="13" x2="1147.3" y2="16" stroke="#8a8a8a" stroke-width="1"/><line x1="1157.2" y1="13" x2="1157.2" y2="16" stroke="#8a8a8a" stroke-width="1"/><line x1="1167.2" y1="13" x2="1167.2" y2="16" stroke="#8a8a8a" stroke-width="1"/><line x1="1177.1" y1="13" x2="1177.1" y2="16" stroke="#8a8a8a" stroke-width="1"/><line x1="1187.0" y1="1" x2="1187.0" y2="16" stroke="#9a9a9a" stroke-width="1"/><line x1="1196.9" y1="13" x2="1196.9" y2="16" stroke="#8a8a8a" stroke-width="1"/><line x1="1206.8" y1="13" x2="1206.8" y2="16" stroke="#8a8a8a" stroke-width="1"/><line x1="1216.8" y1="13" x2="1216.8" y2="16" stroke="#8a8a8a" stroke-width="1"/><line x1="1226.7" y1="13" x2="1226.7" y2="16" stroke="#8a8a8a" stroke-width="1"/><line x1="1236.6" y1="10" x2="1236.6" y2="16" stroke="#8a8a8a" stroke-width="1"/><line x1="1246.5" y1="13" x2="1246.5" y2="16" stroke="#8a8a8a" stroke-width="1"/><line x1="1256.4" y1="13" x2="1256.4" y2="16" stroke="#8a8a8a" stroke-width="1"/><line x1="1266.4" y1="13" x2="1266.4" y2="16" stroke="#8a8a8a" stroke-width="1"/><line x1="1276.3" y1="13" x2="1276.3" y2="16" stroke="#8a8a8a" stroke-width="1"/><line x1="1286.2" y1="1" x2="1286.2" y2="16" stroke="#9a9a9a" stroke-width="1"/><line x1="1296.1" y1="13" x2="1296.1" y2="16" stroke="#8a8a8a" stroke-width="1"/><line x1="1306.0" y1="13" x2="1306.0" y2="16" stroke="#8a8a8a" stroke-width="1"/><line x1="1316.0" y1="13" x2="1316.0" y2="16" stroke="#8a8a8a" stroke-width="1"/><line x1="1325.9" y1="13" x2="1325.9" y2="16" stroke="#8a8a8a" stroke-width="1"/><line x1="1335.8" y1="10" x2="1335.8" y2="16" stroke="#8a8a8a" stroke-width="1"/><line x1="1345.7" y1="13" x2="1345.7" y2="16" stroke="#8a8a8a" stroke-width="1"/><line x1="1355.6" y1="13" x2="1355.6" y2="16" stroke="#8a8a8a" stroke-width="1"/><line x1="1365.6" y1="13" x2="1365.6" y2="16" stroke="#8a8a8a" stroke-width="1"/><line x1="1375.5" y1="13" x2="1375.5" y2="16" stroke="#8a8a8a" stroke-width="1"/><line x1="1385.4" y1="1" x2="1385.4" y2="16" stroke="#9a9a9a" stroke-width="1"/><line x1="1395.3" y1="13" x2="1395.3" y2="16" stroke="#8a8a8a" stroke-width="1"/><line x1="1405.2" y1="13" x2="1405.2" y2="16" stroke="#8a8a8a" stroke-width="1"/><line x1="1415.2" y1="13" x2="1415.2" y2="16" stroke="#8a8a8a" stroke-width="1"/><line x1="1425.1" y1="13" x2="1425.1" y2="16" stroke="#8a8a8a" stroke-width="1"/><line x1="1435.0" y1="10" x2="1435.0" y2="16" stroke="#8a8a8a" stroke-width="1"/><line x1="1444.9" y1="13" x2="1444.9" y2="16" stroke="#8a8a8a" stroke-width="1"/><line x1="1454.8" y1="13" x2="1454.8" y2="16" stroke="#8a8a8a" stroke-width="1"/><line x1="1464.8" y1="13" x2="1464.8" y2="16" stroke="#8a8a8a" stroke-width="1"/><line x1="1474.7" y1="13" x2="1474.7" y2="16" stroke="#8a8a8a" stroke-width="1"/><line x1="1484.6" y1="1" x2="1484.6" y2="16" stroke="#9a9a9a" stroke-width="1"/><line x1="1494.5" y1="13" x2="1494.5" y2="16" stroke="#8a8a8a" stroke-width="1"/><line x1="1504.4" y1="13" x2="1504.4" y2="16" stroke="#8a8a8a" stroke-width="1"/><line x1="1514.4" y1="13" x2="1514.4" y2="16" stroke="#8a8a8a" stroke-width="1"/><line x1="1524.3" y1="13" x2="1524.3" y2="16" stroke="#8a8a8a" stroke-width="1"/><line x1="1534.2" y1="10" x2="1534.2" y2="16" stroke="#8a8a8a" stroke-width="1"/><line x1="1544.1" y1="13" x2="1544.1" y2="16" stroke="#8a8a8a" stroke-width="1"/><line x1="1554.0" y1="13" x2="1554.0" y2="16" stroke="#8a8a8a" stroke-width="1"/><line x1="1564.0" y1="13" x2="1564.0" y2="16" stroke="#8a8a8a" stroke-width="1"/><line x1="1573.9" y1="13" x2="1573.9" y2="16" stroke="#8a8a8a" stroke-width="1"/><line x1="1583.8" y1="1" x2="1583.8" y2="16" stroke="#9a9a9a" stroke-width="1"/><line x1="1593.7" y1="13" x2="1593.7" y2="16" stroke="#8a8a8a" stroke-width="1"/><line x1="1603.6" y1="13" x2="1603.6" y2="16" stroke="#8a8a8a" stroke-width="1"/><line x1="1613.6" y1="13" x2="1613.6" y2="16" stroke="#8a8a8a" stroke-width="1"/><line x1="1623.5" y1="13" x2="1623.5" y2="16" stroke="#8a8a8a" stroke-width="1"/><line x1="1633.4" y1="10" x2="1633.4" y2="16" stroke="#8a8a8a" stroke-width="1"/><line x1="1643.3" y1="13" x2="1643.3" y2="16" stroke="#8a8a8a" stroke-width="1"/><line x1="1653.2" y1="13" x2="1653.2" y2="16" stroke="#8a8a8a" stroke-width="1"/><line x1="1663.2" y1="13" x2="1663.2" y2="16" stroke="#8a8a8a" stroke-width="1"/><line x1="1673.1" y1="13" x2="1673.1" y2="16" stroke="#8a8a8a" stroke-width="1"/><line x1="1683.0" y1="1" x2="1683.0" y2="16" stroke="#9a9a9a" stroke-width="1"/><line x1="1692.9" y1="13" x2="1692.9" y2="16" stroke="#8a8a8a" stroke-width="1"/><line x1="1702.8" y1="13" x2="1702.8" y2="16" stroke="#8a8a8a" stroke-width="1"/><line x1="1712.8" y1="13" x2="1712.8" y2="16" stroke="#8a8a8a" stroke-width="1"/><line x1="1722.7" y1="13" x2="1722.7" y2="16" stroke="#8a8a8a" stroke-width="1"/><line x1="1732.6" y1="10" x2="1732.6" y2="16" stroke="#8a8a8a" stroke-width="1"/><line x1="1742.5" y1="13" x2="1742.5" y2="16" stroke="#8a8a8a" stroke-width="1"/><line x1="1752.4" y1="13" x2="1752.4" y2="16" stroke="#8a8a8a" stroke-width="1"/><line x1="1762.4" y1="13" x2="1762.4" y2="16" stroke="#8a8a8a" stroke-width="1"/><line x1="1772.3" y1="13" x2="1772.3" y2="16" stroke="#8a8a8a" stroke-width="1"/><line x1="1782.2" y1="1" x2="1782.2" y2="16" stroke="#9a9a9a" stroke-width="1"/><line x1="1792.1" y1="13" x2="1792.1" y2="16" stroke="#8a8a8a" stroke-width="1"/><line x1="1802.0" y1="13" x2="1802.0" y2="16" stroke="#8a8a8a" stroke-width="1"/><line x1="1812.0" y1="13" x2="1812.0" y2="16" stroke="#8a8a8a" stroke-width="1"/></svg>
<div class="t" style="left:139px;top:87.88px;font-size:9px;color:#c8c8c8;font-weight:normal;font-style:normal;font-family:&quot;Liberation Sans&quot;, sans-serif;">60</div>
<div class="t" style="left:238px;top:87.88px;font-size:9px;color:#c8c8c8;font-weight:normal;font-style:normal;font-family:&quot;Liberation Sans&quot;, sans-serif;">50</div>
<div class="t" style="left:337px;top:87.88px;font-size:9px;color:#c8c8c8;font-weight:normal;font-style:normal;font-family:&quot;Liberation Sans&quot;, sans-serif;">40</div>
<div class="t" style="left:436px;top:87.88px;font-size:9px;color:#c8c8c8;font-weight:normal;font-style:normal;font-family:&quot;Liberation Sans&quot;, sans-serif;">30</div>
<div class="t" style="left:536px;top:87.88px;font-size:9px;color:#c8c8c8;font-weight:normal;font-style:normal;font-family:&quot;Liberation Sans&quot;, sans-serif;">20</div>
<div class="t" style="left:635px;top:87.88px;font-size:9px;color:#c8c8c8;font-weight:normal;font-style:normal;font-family:&quot;Liberation Sans&quot;, sans-serif;">10</div>
<div class="t" style="left:734px;top:87.88px;font-size:9px;color:#c8c8c8;font-weight:normal;font-style:normal;font-family:&quot;Liberation Sans&quot;, sans-serif;">0</div>
<div class="t" style="left:833px;top:87.88px;font-size:9px;color:#c8c8c8;font-weight:normal;font-style:normal;font-family:&quot;Liberation Sans&quot;, sans-serif;">10</div>
<div class="t" style="left:932px;top:87.88px;font-size:9px;color:#c8c8c8;font-weight:normal;font-style:normal;font-family:&quot;Liberation Sans&quot;, sans-serif;">20</div>
<div class="t" style="left:1032px;top:87.88px;font-size:9px;color:#c8c8c8;font-weight:normal;font-style:normal;font-family:&quot;Liberation Sans&quot;, sans-serif;">30</div>
<div class="t" style="left:1131px;top:87.88px;font-size:9px;color:#c8c8c8;font-weight:normal;font-style:normal;font-family:&quot;Liberation Sans&quot;, sans-serif;">40</div>
<div class="t" style="left:1230px;top:87.88px;font-size:9px;color:#c8c8c8;font-weight:normal;font-style:normal;font-family:&quot;Liberation Sans&quot;, sans-serif;">50</div>
<div class="t" style="left:1329px;top:87.88px;font-size:9px;color:#c8c8c8;font-weight:normal;font-style:normal;font-family:&quot;Liberation Sans&quot;, sans-serif;">60</div>
<div class="t" style="left:1428px;top:87.88px;font-size:9px;color:#c8c8c8;font-weight:normal;font-style:normal;font-family:&quot;Liberation Sans&quot;, sans-serif;">70</div>
<div class="t" style="left:1528px;top:87.88px;font-size:9px;color:#c8c8c8;font-weight:normal;font-style:normal;font-family:&quot;Liberation Sans&quot;, sans-serif;">80</div>
<div class="t" style="left:1627px;top:87.88px;font-size:9px;color:#c8c8c8;font-weight:normal;font-style:normal;font-family:&quot;Liberation Sans&quot;, sans-serif;">90</div>
<div class="t" style="left:1726px;top:87.88px;font-size:9px;color:#c8c8c8;font-weight:normal;font-style:normal;font-family:&quot;Liberation Sans&quot;, sans-serif;">100</div>
<div class="t" style="left:1825px;top:87.88px;font-size:9px;color:#c8c8c8;font-weight:normal;font-style:normal;font-family:&quot;Liberation Sans&quot;, sans-serif;">110</div>
<svg class="a" style="left:41px;top:85px;" width="16" height="15" viewBox="0 0 16 15"><path d="M3 6.5 H15 M4.5 1 V15" stroke="#8a8a8a" stroke-dasharray="1 1"/></svg>
<svg class="a" style="left:41px;top:100px;" width="16" height="922" viewBox="0 0 16 922"><line x1="13" y1="10.2" x2="16" y2="10.2" stroke="#8a8a8a"/><line x1="13" y1="20.2" x2="16" y2="20.2" stroke="#8a8a8a"/><line x1="13" y1="30.1" x2="16" y2="30.1" stroke="#8a8a8a"/><line x1="1" y1="40.0" x2="16" y2="40.0" stroke="#9a9a9a"/><line x1="13" y1="49.9" x2="16" y2="49.9" stroke="#8a8a8a"/><line x1="13" y1="59.8" x2="16" y2="59.8" stroke="#8a8a8a"/><line x1="13" y1="69.8" x2="16" y2="69.8" stroke="#8a8a8a"/><line x1="13" y1="79.7" x2="16" y2="79.7" stroke="#8a8a8a"/><line x1="10" y1="89.6" x2="16" y2="89.6" stroke="#8a8a8a"/><line x1="13" y1="99.5" x2="16" y2="99.5" stroke="#8a8a8a"/><line x1="13" y1="109.4" x2="16" y2="109.4" stroke="#8a8a8a"/><line x1="13" y1="119.4" x2="16" y2="119.4" stroke="#8a8a8a"/><line x1="13" y1="129.3" x2="16" y2="129.3" stroke="#8a8a8a"/><line x1="1" y1="139.2" x2="16" y2="139.2" stroke="#9a9a9a"/><line x1="13" y1="149.1" x2="16" y2="149.1" stroke="#8a8a8a"/><line x1="13" y1="159.0" x2="16" y2="159.0" stroke="#8a8a8a"/><line x1="13" y1="169.0" x2="16" y2="169.0" stroke="#8a8a8a"/><line x1="13" y1="178.9" x2="16" y2="178.9" stroke="#8a8a8a"/><line x1="10" y1="188.8" x2="16" y2="188.8" stroke="#8a8a8a"/><line x1="13" y1="198.7" x2="16" y2="198.7" stroke="#8a8a8a"/><line x1="13" y1="208.6" x2="16" y2="208.6" stroke="#8a8a8a"/><line x1="13" y1="218.6" x2="16" y2="218.6" stroke="#8a8a8a"/><line x1="13" y1="228.5" x2="16" y2="228.5" stroke="#8a8a8a"/><line x1="1" y1="238.4" x2="16" y2="238.4" stroke="#9a9a9a"/><line x1="13" y1="248.3" x2="16" y2="248.3" stroke="#8a8a8a"/><line x1="13" y1="258.2" x2="16" y2="258.2" stroke="#8a8a8a"/><line x1="13" y1="268.2" x2="16" y2="268.2" stroke="#8a8a8a"/><line x1="13" y1="278.1" x2="16" y2="278.1" stroke="#8a8a8a"/><line x1="10" y1="288.0" x2="16" y2="288.0" stroke="#8a8a8a"/><line x1="13" y1="297.9" x2="16" y2="297.9" stroke="#8a8a8a"/><line x1="13" y1="307.8" x2="16" y2="307.8" stroke="#8a8a8a"/><line x1="13" y1="317.8" x2="16" y2="317.8" stroke="#8a8a8a"/><line x1="13" y1="327.7" x2="16" y2="327.7" stroke="#8a8a8a"/><line x1="1" y1="337.6" x2="16" y2="337.6" stroke="#9a9a9a"/><line x1="13" y1="347.5" x2="16" y2="347.5" stroke="#8a8a8a"/><line x1="13" y1="357.4" x2="16" y2="357.4" stroke="#8a8a8a"/><line x1="13" y1="367.4" x2="16" y2="367.4" stroke="#8a8a8a"/><line x1="13" y1="377.3" x2="16" y2="377.3" stroke="#8a8a8a"/><line x1="10" y1="387.2" x2="16" y2="387.2" stroke="#8a8a8a"/><line x1="13" y1="397.1" x2="16" y2="397.1" stroke="#8a8a8a"/><line x1="13" y1="407.0" x2="16" y2="407.0" stroke="#8a8a8a"/><line x1="13" y1="417.0" x2="16" y2="417.0" stroke="#8a8a8a"/><line x1="13" y1="426.9" x2="16" y2="426.9" stroke="#8a8a8a"/><line x1="1" y1="436.8" x2="16" y2="436.8" stroke="#9a9a9a"/><line x1="13" y1="446.7" x2="16" y2="446.7" stroke="#8a8a8a"/><line x1="13" y1="456.6" x2="16" y2="456.6" stroke="#8a8a8a"/><line x1="13" y1="466.6" x2="16" y2="466.6" stroke="#8a8a8a"/><line x1="13" y1="476.5" x2="16" y2="476.5" stroke="#8a8a8a"/><line x1="10" y1="486.4" x2="16" y2="486.4" stroke="#8a8a8a"/><line x1="13" y1="496.3" x2="16" y2="496.3" stroke="#8a8a8a"/><line x1="13" y1="506.2" x2="16" y2="506.2" stroke="#8a8a8a"/><line x1="13" y1="516.2" x2="16" y2="516.2" stroke="#8a8a8a"/><line x1="13" y1="526.1" x2="16" y2="526.1" stroke="#8a8a8a"/><line x1="1" y1="536.0" x2="16" y2="536.0" stroke="#9a9a9a"/><line x1="13" y1="545.9" x2="16" y2="545.9" stroke="#8a8a8a"/><line x1="13" y1="555.8" x2="16" y2="555.8" stroke="#8a8a8a"/><line x1="13" y1="565.8" x2="16" y2="565.8" stroke="#8a8a8a"/><line x1="13" y1="575.7" x2="16" y2="575.7" stroke="#8a8a8a"/><line x1="10" y1="585.6" x2="16" y2="585.6" stroke="#8a8a8a"/><line x1="13" y1="595.5" x2="16" y2="595.5" stroke="#8a8a8a"/><line x1="13" y1="605.4" x2="16" y2="605.4" stroke="#8a8a8a"/><line x1="13" y1="615.4" x2="16" y2="615.4" stroke="#8a8a8a"/><line x1="13" y1="625.3" x2="16" y2="625.3" stroke="#8a8a8a"/><line x1="1" y1="635.2" x2="16" y2="635.2" stroke="#9a9a9a"/><line x1="13" y1="645.1" x2="16" y2="645.1" stroke="#8a8a8a"/><line x1="13" y1="655.0" x2="16" y2="655.0" stroke="#8a8a8a"/><line x1="13" y1="665.0" x2="16" y2="665.0" stroke="#8a8a8a"/><line x1="13" y1="674.9" x2="16" y2="674.9" stroke="#8a8a8a"/><line x1="10" y1="684.8" x2="16" y2="684.8" stroke="#8a8a8a"/><line x1="13" y1="694.7" x2="16" y2="694.7" stroke="#8a8a8a"/><line x1="13" y1="704.6" x2="16" y2="704.6" stroke="#8a8a8a"/><line x1="13" y1="714.6" x2="16" y2="714.6" stroke="#8a8a8a"/><line x1="13" y1="724.5" x2="16" y2="724.5" stroke="#8a8a8a"/><line x1="1" y1="734.4" x2="16" y2="734.4" stroke="#9a9a9a"/><line x1="13" y1="744.3" x2="16" y2="744.3" stroke="#8a8a8a"/><line x1="13" y1="754.2" x2="16" y2="754.2" stroke="#8a8a8a"/><line x1="13" y1="764.2" x2="16" y2="764.2" stroke="#8a8a8a"/><line x1="13" y1="774.1" x2="16" y2="774.1" stroke="#8a8a8a"/><line x1="10" y1="784.0" x2="16" y2="784.0" stroke="#8a8a8a"/><line x1="13" y1="793.9" x2="16" y2="793.9" stroke="#8a8a8a"/><line x1="13" y1="803.8" x2="16" y2="803.8" stroke="#8a8a8a"/><line x1="13" y1="813.8" x2="16" y2="813.8" stroke="#8a8a8a"/><line x1="13" y1="823.7" x2="16" y2="823.7" stroke="#8a8a8a"/><line x1="1" y1="833.6" x2="16" y2="833.6" stroke="#9a9a9a"/><line x1="13" y1="843.5" x2="16" y2="843.5" stroke="#8a8a8a"/><line x1="13" y1="853.4" x2="16" y2="853.4" stroke="#8a8a8a"/><line x1="13" y1="863.4" x2="16" y2="863.4" stroke="#8a8a8a"/><line x1="13" y1="873.3" x2="16" y2="873.3" stroke="#8a8a8a"/><line x1="10" y1="883.2" x2="16" y2="883.2" stroke="#8a8a8a"/><line x1="13" y1="893.1" x2="16" y2="893.1" stroke="#8a8a8a"/><line x1="13" y1="903.0" x2="16" y2="903.0" stroke="#8a8a8a"/><line x1="13" y1="913.0" x2="16" y2="913.0" stroke="#8a8a8a"/></svg>
<div class="t" style="left:43.5px;top:127.38px;font-size:9px;color:#c8c8c8;font-weight:normal;font-style:normal;font-family:&quot;Liberation Sans&quot;, sans-serif;">0</div>
<div class="t" style="left:43.5px;top:216.58px;font-size:9px;color:#c8c8c8;font-weight:normal;font-style:normal;font-family:&quot;Liberation Sans&quot;, sans-serif;">1</div>
<div class="t" style="left:43.5px;top:226.58px;font-size:9px;color:#c8c8c8;font-weight:normal;font-style:normal;font-family:&quot;Liberation Sans&quot;, sans-serif;">0</div>
<div class="t" style="left:43.5px;top:315.78px;font-size:9px;color:#c8c8c8;font-weight:normal;font-style:normal;font-family:&quot;Liberation Sans&quot;, sans-serif;">2</div>
<div class="t" style="left:43.5px;top:325.78px;font-size:9px;color:#c8c8c8;font-weight:normal;font-style:normal;font-family:&quot;Liberation Sans&quot;, sans-serif;">0</div>
<div class="t" style="left:43.5px;top:414.98px;font-size:9px;color:#c8c8c8;font-weight:normal;font-style:normal;font-family:&quot;Liberation Sans&quot;, sans-serif;">3</div>
<div class="t" style="left:43.5px;top:424.98px;font-size:9px;color:#c8c8c8;font-weight:normal;font-style:normal;font-family:&quot;Liberation Sans&quot;, sans-serif;">0</div>
<div class="t" style="left:43.5px;top:514.18px;font-size:9px;color:#c8c8c8;font-weight:normal;font-style:normal;font-family:&quot;Liberation Sans&quot;, sans-serif;">4</div>
<div class="t" style="left:43.5px;top:524.18px;font-size:9px;color:#c8c8c8;font-weight:normal;font-style:normal;font-family:&quot;Liberation Sans&quot;, sans-serif;">0</div>
<div class="t" style="left:43.5px;top:613.38px;font-size:9px;color:#c8c8c8;font-weight:normal;font-style:normal;font-family:&quot;Liberation Sans&quot;, sans-serif;">5</div>
<div class="t" style="left:43.5px;top:623.38px;font-size:9px;color:#c8c8c8;font-weight:normal;font-style:normal;font-family:&quot;Liberation Sans&quot;, sans-serif;">0</div>
<div class="t" style="left:43.5px;top:712.58px;font-size:9px;color:#c8c8c8;font-weight:normal;font-style:normal;font-family:&quot;Liberation Sans&quot;, sans-serif;">6</div>
<div class="t" style="left:43.5px;top:722.58px;font-size:9px;color:#c8c8c8;font-weight:normal;font-style:normal;font-family:&quot;Liberation Sans&quot;, sans-serif;">0</div>
<div class="t" style="left:43.5px;top:811.78px;font-size:9px;color:#c8c8c8;font-weight:normal;font-style:normal;font-family:&quot;Liberation Sans&quot;, sans-serif;">7</div>
<div class="t" style="left:43.5px;top:821.78px;font-size:9px;color:#c8c8c8;font-weight:normal;font-style:normal;font-family:&quot;Liberation Sans&quot;, sans-serif;">0</div>
<div class="t" style="left:43.5px;top:910.98px;font-size:9px;color:#c8c8c8;font-weight:normal;font-style:normal;font-family:&quot;Liberation Sans&quot;, sans-serif;">8</div>
<div class="t" style="left:43.5px;top:920.98px;font-size:9px;color:#c8c8c8;font-weight:normal;font-style:normal;font-family:&quot;Liberation Sans&quot;, sans-serif;">0</div>
<div class="a" style="left:57px;top:100px;width:1px;height:922px;background:#1f1f1f;"></div>
<div class="a" style="left:712px;top:120px;width:588px;height:884px;background:#f3ecdc;overflow:hidden"><div class="a" style="left:0;top:0;width:100%;height:100%;background:linear-gradient(90deg,rgba(158,114,42,0.6) 0px,rgba(158,114,42,0.52) 20px,rgba(158,114,42,0.45) 45px,rgba(158,114,42,0.36) 65px,rgba(158,114,42,0.2) 80px,rgba(158,114,42,0.07) 95px,rgba(158,114,42,0) 115px),linear-gradient(270deg,rgba(158,114,42,0.6) 0px,rgba(158,114,42,0.52) 21px,rgba(158,114,42,0.45) 40px,rgba(158,114,42,0.33) 62px,rgba(158,114,42,0.16) 85px,rgba(158,114,42,0.05) 110px,rgba(158,114,42,0) 140px),linear-gradient(180deg,rgba(158,114,42,0.58) 0px,rgba(158,114,42,0.5) 20px,rgba(158,114,42,0.44) 60px,rgba(158,114,42,0.36) 120px,rgba(158,114,42,0.2) 170px,rgba(158,114,42,0.06) 205px,rgba(158,114,42,0) 235px),linear-gradient(0deg,rgba(158,114,42,0.6) 0px,rgba(158,114,42,0.52) 19px,rgba(158,114,42,0.45) 50px,rgba(158,114,42,0.34) 95px,rgba(158,114,42,0.15) 140px,rgba(158,114,42,0.04) 175px,rgba(158,114,42,0) 200px)"></div><div class="a" style="left:0;top:0;width:100%;height:100%;border:20px solid rgba(150,92,40,0.30)"></div></div>
<svg class="a" style="left:712px;top:120px;" width="588" height="884" viewBox="0 0 588 884"><defs><filter id="nz" x="0" y="0" width="100%" height="100%"><feTurbulence type="fractalNoise" baseFrequency="0.09" numOctaves="3" seed="4" result="t"/><feColorMatrix type="matrix" values="0 0 0 0 0.55  0 0 0 0 0.36  0 0 0 0 0.16  1.6 0 0 0 -0.62"/></filter><radialGradient id="rg" cx="0.5" cy="0.55" r="0.62"><stop offset="0.45" stop-color="#000"/><stop offset="1" stop-color="#fff"/></radialGradient><mask id="mk"><rect x="0" y="0" width="588" height="884" fill="url(#rg)"/></mask></defs><rect x="0" y="0" width="588" height="884" filter="url(#nz)" mask="url(#mk)" opacity="0.7"/></svg>
<svg class="a" style="left:712px;top:120px;" width="588" height="884" viewBox="0 0 588 884"><path d="M466 83h0M129 814h0M202 883h0M299 855h0M574 703h0M546 319h0M527 160h0M504 27h0M159 21h0M560 171h0M584 174h0M147 157h0M565 362h0M53 514h0M486 7h0M586 78h0M265 17h0M44 374h0M405 31h0M172 108h0M587 722h0M370 805h0M10 460h0M129 63h0M38 38h0M548 651h0M561 93h0M536 144h0M568 299h0M310 823h0M186 39h0M51 766h0M317 32h0M519 554h0M555 371h0M35 594h0M12 272h0M514 565h0M537 106h0M519 592h0M12 738h0M515 856h0M549 712h0M22 106h0M160 2h0M10 443h0M515 149h0M71 761h0M348 801h0M216 5h0M241 72h0M529 669h0M312 883h0M533 804h0M567 469h0M564 565h0M229 836h0M571 490h0M22 750h0M69 61h0M484 876h0M524 877h0M456 77h0M507 816h0M457 91h0M100 841h0M335 871h0M358 17h0M10 480h0M9 30h0M583 583h0M212 37h0M298 881h0M543 460h0M16 363h0M1 720h0M508 23h0M129 14h0M569 188h0M40 129h0M64 26h0M65 814h0M553 818h0M88 787h0M4 733h0M380 876h0M149 25h0M199 134h0M57 322h0M12 723h0M82 439h0M583 821h0M414 180h0M464 73h0M580 168h0M104 35h0M189 865h0M526 13h0M129 157h0M580 50h0M401 69h0M29 852h0M261 15h0M576 634h0M391 866h0M19 190h0M19 71h0M564 344h0M413 92h0M60 25h0M555 542h0M291 28h0M568 162h0M553 619h0M175 156h0M48 564h0M367 70h0M515 440h0M561 390h0M446 85h0M283 60h0M67 787h0M32 33h0M471 17h0M9 508h0M586 757h0M411 880h0M49 794h0M260 41h0M518 160h0M361 848h0M13 642h0M276 852h0M444 23h0M499 49h0M5 740h0M548 132h0M547 169h0M251 8h0M161 77h0M532 747h0M11 434h0M37 875h0M308 70h0M196 74h0M577 803h0M79 284h0M12 216h0M281 140h0M565 223h0M573 493h0M556 372h0M565 285h0M537 325h0M19 440h0M583 582h0M363 109h0M21 334h0M574 105h0M254 11h0M491 704h0M20 580h0M22 452h0M17 499h0M569 774h0M56 59h0M15 649h0M442 848h0M23 331h0M29 884h0M499 124h0M200 868h0M73 445h0" stroke="#8a5a26" stroke-width="1.0" stroke-opacity="0.5" stroke-linecap="round" fill="none"/><path d="M489 56h0M469 870h0M560 649h0M2 788h0M584 600h0M18 625h0M512 680h0M588 433h0M373 3h0M578 770h0M273 50h0M14 771h0M358 873h0M26 135h0M566 688h0M20 424h0M85 405h0M571 803h0M563 21h0M39 851h0M38 17h0M375 867h0M246 95h0M0 313h0M555 80h0M134 47h0M229 879h0M553 674h0M33 798h0M34 181h0M66 768h0M172 116h0M87 122h0M7 808h0M548 761h0M4 624h0M139 845h0M9 404h0M551 324h0M172 859h0M496 141h0M174 56h0M513 130h0M532 373h0M553 645h0M62 357h0M543 231h0M58 878h0M282 41h0M331 98h0M115 91h0M252 828h0M28 29h0M17 73h0M389 841h0M501 535h0M515 771h0M500 11h0M14 591h0M41 661h0M339 828h0M514 843h0M75 221h0M573 135h0M4 782h0M260 41h0M423 10h0M70 576h0M56 270h0M518 498h0M571 531h0M9 33h0M541 577h0M169 152h0M208 87h0M544 390h0M572 496h0M46 733h0M2 202h0M549 100h0M60 387h0M514 573h0M562 47h0M164 34h0M34 23h0M154 10h0M31 805h0M91 78h0M45 839h0M555 351h0M5 534h0M567 25h0M197 69h0M74 700h0M25 336h0M305 872h0M120 49h0M122 38h0M58 132h0M63 4h0M66 521h0M237 878h0M240 23h0M583 171h0M524 70h0M506 505h0M62 268h0M22 190h0M476 838h0M551 775h0M282 833h0M333 191h0M25 720h0M557 549h0M156 788h0M400 13h0M513 95h0M532 535h0M65 487h0M567 36h0M563 707h0M9 721h0M81 259h0M67 618h0M561 638h0M210 92h0M577 78h0M9 376h0M579 716h0M226 82h0M536 35h0M366 862h0M15 478h0M498 353h0M301 102h0M328 804h0M46 390h0M556 26h0M379 4h0M583 481h0M533 280h0M462 883h0M161 137h0M399 11h0M110 757h0M44 693h0M551 378h0M86 712h0M272 16h0M581 136h0M14 882h0M526 462h0M45 92h0M72 368h0M303 878h0M22 381h0M416 840h0M432 79h0M520 456h0M529 92h0M6 369h0M397 818h0" stroke="#9a7038" stroke-width="1.0" stroke-opacity="0.5" stroke-linecap="round" fill="none"/><path d="M137 260h0M296 222h0M181 427h0M357 236h0M205 433h0M385 499h0M408 534h0M208 236h0M269 502h0" stroke="#9a7038" stroke-width="1.0" stroke-opacity="0.2" stroke-linecap="round" fill="none"/><path d="M302 26h0M436 876h0M19 873h0M535 21h0M44 691h0M547 366h0M20 82h0M547 783h0M130 18h0M87 143h0M123 4h0M33 676h0M67 549h0M27 323h0M34 853h0M549 734h0M575 609h0M11 170h0M298 68h0M86 813h0M549 566h0M434 850h0M86 831h0M416 65h0M484 875h0M443 47h0M22 225h0M269 871h0M5 265h0M18 47h0M100 405h0M575 99h0M118 62h0M33 67h0M480 156h0M72 398h0M10 445h0M39 766h0M523 289h0M141 882h0M538 282h0M412 12h0M17 678h0M504 61h0M39 884h0M205 39h0M50 240h0M122 71h0M54 646h0M586 45h0M129 853h0M475 7h0M29 22h0M1 556h0M298 58h0M309 17h0M554 692h0M184 879h0M272 776h0M48 297h0M515 880h0M311 863h0M1 599h0M23 736h0M44 575h0M78 43h0M135 26h0M587 846h0M434 832h0M443 78h0M549 590h0M15 207h0M573 625h0M517 138h0M564 285h0M558 82h0M316 70h0M196 115h0M16 349h0M37 670h0M504 515h0M331 850h0M222 804h0M33 108h0M240 874h0M159 43h0M25 299h0M64 220h0M260 45h0M484 837h0M496 496h0M81 878h0M348 810h0M423 827h0M226 878h0M25 609h0M88 130h0M586 646h0M32 627h0M501 802h0M570 311h0M578 174h0M438 43h0M575 809h0M37 157h0M156 103h0M372 880h0M73 640h0M362 57h0M115 838h0M484 794h0M534 6h0M174 78h0M238 866h0M194 164h0M125 127h0M33 744h0M49 153h0M388 14h0M7 440h0M251 800h0M65 193h0M8 195h0M25 515h0M513 557h0M4 778h0M378 145h0M48 293h0M312 37h0M81 390h0M6 855h0M51 342h0M11 754h0M487 86h0M437 28h0M90 873h0M124 95h0M45 680h0M475 882h0M576 184h0M13 27h0M415 115h0M7 44h0M480 56h0M428 11h0M11 503h0M30 230h0M245 9h0M32 581h0M588 367h0M519 842h0M45 130h0M46 604h0M61 528h0M398 51h0M150 13h0" stroke="#9a7038" stroke-width="1.0" stroke-opacity="0.4" stroke-linecap="round" fill="none"/><path d="M0 185h0M205 73h0M567 279h0M93 364h0M418 114h0M59 687h0M298 875h0M21 797h0M513 868h0M561 684h0M575 882h0M579 645h0M516 45h0M165 119h0M11 343h0M9 299h0M118 121h0M200 62h0M357 14h0M398 842h0M181 91h0M34 859h0M362 42h0M31 786h0M100 78h0M361 864h0M180 9h0M226 876h0M99 868h0M114 857h0M12 759h0M102 819h0M115 138h0M101 63h0M51 6h0M487 861h0M567 683h0M391 1h0M553 54h0M22 666h0M67 224h0M413 66h0M447 59h0M184 83h0M42 647h0M24 648h0M189 4h0M54 635h0M16 131h0M577 62h0M258 129h0M324 53h0M553 40h0M476 60h0M511 863h0M20 15h0M9 586h0M565 302h0M42 856h0M198 827h0M495 880h0M561 378h0M558 202h0M536 425h0M566 824h0M67 158h0M436 87h0M260 154h0M148 18h0M59 560h0M533 729h0M197 33h0M135 130h0M355 5h0M570 258h0M536 114h0M72 200h0M74 756h0M14 557h0M146 42h0M57 504h0M29 645h0M568 472h0M565 264h0M32 662h0M291 803h0M540 433h0M561 526h0M282 152h0M549 92h0M61 668h0M61 370h0M396 76h0M71 460h0M522 40h0M520 291h0M521 619h0M385 51h0M564 806h0M355 865h0M497 92h0M567 873h0M29 186h0M265 794h0M80 547h0M234 861h0M314 90h0M348 146h0M534 134h0M49 15h0M573 452h0M18 658h0M83 227h0M334 66h0M403 842h0M1 429h0M39 583h0M14 174h0M568 639h0M14 25h0M279 869h0M173 7h0M503 32h0M14 194h0" stroke="#9a7038" stroke-width="2.0" stroke-opacity="0.4" stroke-linecap="round" fill="none"/><path d="M79 625h0M41 110h0M248 108h0M119 858h0M253 851h0M79 109h0M43 151h0M525 586h0M88 852h0M57 341h0M399 879h0M9 748h0M247 68h0M291 769h0M573 464h0M564 720h0M552 208h0M5 138h0M36 409h0M568 360h0M497 874h0M149 22h0M470 6h0M561 402h0M175 81h0M278 865h0M534 282h0M367 66h0M516 111h0M76 42h0M583 172h0M308 31h0M66 422h0M535 785h0M22 604h0M578 149h0M544 287h0M446 164h0M162 111h0M74 785h0M582 699h0M551 466h0M75 840h0M486 631h0M451 828h0M24 227h0M26 825h0M554 598h0M61 703h0M266 847h0M117 105h0M43 355h0M28 240h0M460 833h0M567 771h0M572 178h0M584 403h0M291 834h0M551 32h0M47 860h0M46 618h0M575 132h0M308 855h0M219 52h0M352 1h0M29 95h0M431 21h0M537 190h0M161 853h0M17 634h0M281 807h0M10 157h0M501 166h0M304 779h0M342 64h0M410 44h0M394 35h0M131 24h0M77 770h0M390 122h0M481 10h0M374 2h0M566 14h0M52 520h0M364 65h0M70 56h0M132 38h0M135 10h0M588 221h0M583 129h0M83 603h0M340 56h0M54 477h0M558 49h0M21 120h0M321 879h0M22 410h0M353 33h0M406 842h0M319 884h0M353 86h0M320 815h0M561 868h0M588 215h0M587 159h0M529 71h0M298 8h0M120 868h0M585 434h0M277 72h0M210 40h0M379 881h0M563 543h0M494 881h0M43 619h0M145 802h0M567 553h0M264 849h0M571 433h0M408 156h0M555 146h0" stroke="#8a5a26" stroke-width="2.0" stroke-opacity="0.6" stroke-linecap="round" fill="none"/><path d="M579 680h0M523 117h0M236 45h0M268 180h0M580 3h0M70 882h0M138 1h0M490 104h0M208 51h0M290 52h0M486 96h0M292 94h0M132 25h0M296 863h0M368 51h0M565 32h0M585 357h0M26 255h0M19 696h0M5 546h0M62 423h0M540 699h0M327 30h0M4 759h0M116 865h0M401 823h0M114 51h0M514 77h0M126 35h0M3 606h0M214 871h0M206 50h0M26 530h0M186 67h0M476 3h0M4 386h0M224 841h0M241 128h0M463 836h0M183 80h0M5 385h0M6 475h0M584 337h0M483 109h0M490 100h0M97 862h0M94 65h0M584 832h0M79 602h0M29 122h0M26 300h0M475 79h0M546 530h0M65 417h0M310 20h0M31 498h0M585 199h0M168 34h0M216 112h0M401 167h0M525 769h0M534 236h0M188 799h0M569 799h0M3 94h0M47 134h0M546 40h0M245 855h0M360 85h0M40 438h0M522 70h0M88 544h0M409 16h0M517 564h0M1 411h0M63 189h0M346 872h0M577 582h0M437 15h0M215 142h0M268 48h0M258 65h0M356 156h0M107 10h0M542 806h0M353 875h0M277 29h0M399 27h0M114 32h0M60 198h0M495 69h0M535 626h0M293 10h0M534 237h0M12 92h0M535 439h0M468 851h0M567 837h0M284 847h0M5 36h0M149 865h0M533 184h0M368 813h0M90 285h0M537 575h0M168 89h0M534 617h0M241 54h0M88 65h0M539 449h0M22 189h0" stroke="#9a7038" stroke-width="2.0" stroke-opacity="0.3" stroke-linecap="round" fill="none"/><path d="M582 0h0M513 37h0M170 793h0M183 100h0M433 793h0M76 67h0M46 137h0M6 158h0M74 637h0M510 822h0M568 454h0M208 810h0M17 30h0M267 838h0M534 742h0M564 288h0M501 874h0M52 214h0M37 436h0M61 175h0M75 100h0M482 3h0M526 288h0M13 132h0M54 17h0M575 480h0M44 538h0M283 127h0M306 38h0M2 664h0M4 667h0" stroke="#8a5a26" stroke-width="2.5" stroke-opacity="0.4" stroke-linecap="round" fill="none"/><path d="M53 515h0M43 802h0M9 681h0M96 44h0M521 837h0M292 878h0M41 322h0M276 841h0M586 803h0M553 792h0M17 707h0M518 619h0M61 6h0M110 836h0M181 139h0M502 197h0M479 140h0M272 831h0M386 855h0M538 137h0M103 586h0M561 679h0M34 267h0M177 820h0M483 74h0M543 827h0M528 694h0M104 105h0M582 23h0M22 463h0M547 14h0M514 74h0M538 319h0M5 365h0M48 756h0M90 774h0M19 263h0M536 211h0M381 859h0M278 883h0" stroke="#9a7038" stroke-width="2.5" stroke-opacity="0.4" stroke-linecap="round" fill="none"/><path d="M284 69h0M418 840h0M582 819h0M576 722h0M538 777h0M392 59h0M334 24h0M549 76h0M327 300h0M101 876h0M160 75h0M555 505h0M137 51h0M473 882h0M576 319h0M581 121h0M260 75h0M572 60h0M138 29h0M525 389h0M545 73h0M487 20h0M523 64h0M480 107h0M565 779h0M582 289h0M550 328h0M571 815h0M100 834h0M550 755h0M7 149h0M537 802h0M413 821h0M48 706h0M296 866h0M478 864h0M573 801h0M91 84h0M289 63h0M9 461h0M130 788h0M258 134h0M580 651h0M577 322h0M106 777h0M84 832h0M544 417h0M74 723h0M73 39h0M561 782h0M511 856h0M2 689h0M414 62h0M109 47h0M570 615h0M364 78h0M560 364h0M359 4h0M555 848h0M469 66h0M518 305h0M332 83h0M577 139h0M486 788h0M582 419h0M73 24h0M580 753h0M69 628h0M562 582h0M505 298h0M4 757h0M43 172h0M551 246h0M29 683h0M109 91h0M347 153h0M579 579h0M332 876h0M170 847h0M246 838h0M310 877h0M78 440h0M31 55h0M291 831h0M544 414h0M584 77h0M19 532h0M230 57h0M501 10h0M490 77h0M404 60h0M24 328h0M10 670h0M193 842h0M349 821h0M324 830h0M146 821h0M413 18h0M72 363h0M38 569h0M525 665h0M57 534h0M49 243h0M414 144h0M531 812h0M433 764h0M201 77h0M84 564h0M560 787h0M88 838h0M36 426h0M74 482h0M285 518h0M558 274h0M337 863h0M66 408h0M494 846h0M8 502h0M54 821h0M576 352h0M484 866h0M282 865h0M316 821h0M277 59h0M200 868h0M530 454h0M116 847h0M587 225h0M460 92h0M19 28h0M459 612h0M26 309h0M47 697h0M38 227h0M579 192h0M5 398h0M27 860h0M32 369h0M95 94h0M24 418h0M138 873h0M365 174h0M577 98h0M318 4h0M262 795h0M221 25h0M570 397h0M16 248h0M429 73h0M140 119h0M30 627h0M566 498h0M542 493h0M25 613h0M530 73h0M541 703h0M265 860h0M543 149h0" stroke="#9a7038" stroke-width="1.0" stroke-opacity="0.3" stroke-linecap="round" fill="none"/><path d="M120 15h0M564 605h0M67 830h0M521 56h0M13 275h0M36 126h0M553 51h0M481 833h0M575 467h0M75 449h0M576 794h0M54 834h0M15 343h0M316 860h0M112 843h0M291 3h0M65 113h0M321 38h0M258 841h0M392 8h0M173 139h0M179 813h0M515 146h0M560 175h0M500 108h0M554 518h0M554 679h0M576 443h0M44 537h0M573 733h0M546 39h0M49 582h0M571 264h0M153 876h0M568 857h0M309 34h0M22 796h0M159 84h0M554 217h0M584 348h0M4 751h0M2 188h0M182 862h0M539 632h0M583 592h0M16 564h0M262 49h0M9 5h0M239 119h0M528 190h0M229 870h0M301 861h0M575 688h0M584 562h0M232 101h0M185 79h0M546 93h0M295 31h0M538 884h0M491 691h0M558 267h0M520 485h0M274 82h0M222 841h0M5 361h0M224 861h0M362 115h0M202 111h0M150 48h0M427 37h0M459 872h0M353 35h0M326 803h0M162 87h0M10 183h0M536 725h0M201 847h0M544 414h0M398 19h0M310 781h0M543 743h0M544 334h0M408 127h0M102 76h0M178 149h0M57 183h0M65 559h0M180 51h0M27 373h0M32 515h0M286 143h0M287 156h0M562 473h0M535 779h0M547 834h0M358 52h0M453 873h0M515 509h0M19 822h0M5 242h0M471 866h0M58 645h0M321 75h0M247 835h0M19 6h0M388 83h0M578 618h0M565 754h0M455 839h0M91 867h0M326 877h0" stroke="#8a5a26" stroke-width="2.0" stroke-opacity="0.4" stroke-linecap="round" fill="none"/><path d="M577 581h0M53 443h0M5 60h0M13 626h0M320 151h0M394 829h0M288 98h0M569 311h0M565 243h0M584 426h0M424 64h0M567 552h0M584 635h0M143 14h0M150 55h0M323 39h0M74 132h0M482 829h0M93 16h0M186 802h0" stroke="#8a5a26" stroke-width="2.5" stroke-opacity="0.7" stroke-linecap="round" fill="none"/><path d="M543 420h0M271 824h0M290 104h0M312 25h0M54 578h0M385 31h0M39 165h0M57 24h0M7 492h0M530 867h0M573 417h0M93 25h0M1 347h0M568 479h0M30 721h0M588 733h0M140 27h0M197 881h0M254 66h0M569 851h0M556 813h0M486 112h0M95 29h0M257 66h0M97 86h0M514 54h0M403 839h0M3 197h0M29 680h0M194 84h0M587 551h0M402 830h0M144 81h0M432 50h0M168 146h0" stroke="#8a5a26" stroke-width="1.5" stroke-opacity="0.7" stroke-linecap="round" fill="none"/><path d="M352 66h0M577 864h0M297 869h0M278 19h0M60 500h0M572 496h0M222 800h0M539 54h0M392 84h0M23 696h0M12 721h0M54 17h0M115 870h0M247 131h0M575 404h0M469 29h0M563 832h0M583 198h0M120 90h0M577 633h0M11 148h0M278 868h0M578 7h0M53 291h0M24 44h0M30 425h0M209 89h0M550 38h0M542 189h0M485 135h0M4 82h0M529 837h0M51 856h0M588 163h0M43 666h0M562 817h0M24 771h0M350 52h0M204 884h0M574 552h0M550 266h0M57 818h0M584 800h0M3 276h0M39 289h0M517 50h0M363 71h0M547 404h0M496 28h0M69 838h0M260 3h0M21 852h0M137 9h0M531 187h0M273 49h0M77 526h0M529 852h0M492 615h0M72 556h0M179 827h0M27 644h0M557 105h0M204 35h0M562 879h0M548 388h0M517 50h0M472 52h0M514 168h0M31 594h0M257 816h0M135 802h0M281 868h0M0 842h0M25 121h0M52 470h0M369 117h0M13 282h0M165 67h0M169 123h0M92 831h0" stroke="#8a5a26" stroke-width="1.5" stroke-opacity="0.4" stroke-linecap="round" fill="none"/><path d="M466 809h0M150 10h0M311 141h0M31 314h0M42 587h0M157 131h0M563 250h0M165 853h0M357 130h0M566 318h0M404 873h0M1 743h0M118 32h0M529 437h0M19 368h0M295 882h0M278 880h0M23 155h0M149 838h0M51 93h0M141 17h0M26 452h0M72 38h0M465 836h0M81 176h0M570 110h0M331 874h0M120 201h0M376 39h0M41 854h0M583 305h0M309 21h0M539 679h0M584 862h0M165 873h0M3 496h0M408 32h0M55 587h0M125 62h0M418 840h0" stroke="#8a5a26" stroke-width="3.0" stroke-opacity="0.5" stroke-linecap="round" fill="none"/><path d="M18 532h0M588 41h0M530 699h0M536 80h0M309 118h0M34 514h0M491 760h0M48 495h0M538 392h0M588 583h0M577 97h0M547 522h0M338 107h0M50 793h0M557 770h0M562 792h0M1 103h0M169 872h0M323 39h0M14 388h0M413 88h0M585 268h0M56 850h0M5 191h0M361 116h0M576 241h0M96 116h0M560 162h0M236 82h0M422 840h0M6 444h0M84 139h0M158 884h0M560 57h0M30 702h0M180 849h0M53 537h0M117 83h0M586 352h0M330 810h0M28 270h0M238 872h0M124 849h0M17 700h0M190 90h0M82 87h0M444 44h0M158 105h0M6 810h0M555 386h0M157 19h0M39 359h0M49 388h0M8 661h0M511 124h0M570 466h0M536 367h0M242 879h0M75 94h0M549 113h0M587 218h0M3 575h0M560 427h0M314 77h0M90 838h0M386 4h0M31 7h0M498 370h0M3 497h0M521 349h0" stroke="#8a5a26" stroke-width="1.0" stroke-opacity="0.7" stroke-linecap="round" fill="none"/><path d="M493 868h0M545 123h0M302 111h0M181 7h0M336 86h0M542 710h0M467 36h0M555 582h0M452 854h0M584 668h0M368 113h0M155 68h0M566 843h0M528 82h0M50 733h0M537 585h0M469 816h0M331 849h0M430 63h0M564 501h0M580 769h0M35 61h0M447 858h0M13 556h0M394 52h0M28 822h0M199 800h0M514 55h0M400 837h0M253 837h0M122 53h0M142 28h0M452 824h0M108 849h0M30 103h0M400 861h0M217 863h0M346 862h0M72 499h0M450 799h0M584 192h0M11 65h0M44 224h0M53 706h0M550 188h0M135 862h0M62 318h0M575 295h0M505 153h0M453 25h0M32 330h0M543 77h0M42 754h0M123 156h0M555 655h0M520 5h0M6 352h0M514 39h0M563 586h0M69 611h0M17 159h0M220 841h0M22 319h0M579 332h0M560 647h0M372 3h0M389 833h0M580 234h0M32 603h0M171 856h0M544 231h0M189 80h0M410 837h0M463 45h0M41 124h0M258 60h0M340 145h0M21 791h0M82 78h0M58 878h0M347 864h0M74 624h0M61 42h0M550 813h0M408 818h0M538 267h0M297 854h0M141 16h0M548 15h0M163 834h0M321 814h0M88 871h0M563 114h0M575 120h0M109 74h0M333 828h0M513 103h0M577 180h0M232 112h0M381 856h0M28 834h0M108 783h0M18 407h0M6 364h0M339 844h0M30 141h0M381 103h0M95 66h0M497 795h0M36 877h0M464 783h0M540 708h0M53 705h0M582 205h0M188 57h0M537 639h0M580 68h0M294 866h0M154 38h0M9 314h0M514 861h0M12 445h0M516 141h0M496 31h0M543 822h0M74 342h0M558 201h0M219 8h0M318 92h0M30 35h0M215 770h0M55 611h0M280 41h0M549 624h0M425 18h0M318 777h0M164 830h0M264 21h0M186 853h0M224 9h0M73 73h0M467 806h0M584 831h0M413 113h0M516 503h0M513 237h0M117 817h0M164 74h0M28 483h0" stroke="#9a7038" stroke-width="1.0" stroke-opacity="0.6" stroke-linecap="round" fill="none"/><path d="M522 6h0M552 582h0M582 342h0M506 812h0M178 883h0M15 34h0M574 538h0M539 601h0M67 817h0M7 740h0M579 69h0M463 152h0M546 578h0M101 122h0M2 49h0M152 859h0M53 753h0M502 25h0M310 78h0M277 42h0M9 289h0M559 277h0M507 873h0M539 760h0M64 153h0M1 495h0M319 120h0M363 830h0M576 672h0M46 521h0M97 12h0M580 291h0M39 801h0M464 864h0M582 459h0M314 23h0M3 148h0M311 840h0M512 4h0M408 96h0" stroke="#9a7038" stroke-width="3.0" stroke-opacity="0.6" stroke-linecap="round" fill="none"/><path d="M287 25h0M569 463h0M542 535h0M518 382h0M13 353h0M390 857h0M508 852h0M36 589h0M208 20h0M108 867h0M54 451h0M382 4h0M56 662h0M571 809h0M139 872h0M298 823h0M580 625h0M77 511h0M203 884h0M584 724h0M138 48h0M374 48h0M82 43h0M584 710h0M571 514h0M507 521h0M25 419h0M351 812h0M568 825h0M157 880h0M568 390h0M186 775h0M86 247h0M13 466h0M147 786h0M61 366h0M347 70h0M150 831h0M103 26h0M375 811h0M245 860h0M13 460h0M518 747h0M575 840h0M26 160h0M27 736h0M546 527h0M559 795h0M383 71h0M555 504h0M493 186h0M570 394h0M96 362h0M582 815h0M372 129h0M18 655h0M147 873h0M45 868h0M558 109h0M480 33h0M288 137h0M16 817h0M489 781h0M267 840h0M215 853h0M554 195h0M43 673h0M326 37h0M587 216h0M61 615h0M588 54h0M530 68h0M329 91h0M24 844h0M27 481h0M222 840h0M413 787h0M8 296h0M24 332h0M47 457h0M563 220h0M34 852h0M115 868h0M162 115h0M202 834h0M88 1h0M247 820h0M26 496h0M562 578h0M185 113h0M179 48h0M184 828h0M67 40h0M584 602h0M558 818h0M321 98h0M64 435h0M113 841h0M18 9h0M178 28h0M132 98h0M2 523h0M526 357h0M545 72h0M482 851h0M111 19h0M61 360h0M40 241h0M36 223h0M171 88h0M50 815h0M530 408h0M347 122h0M106 173h0M100 36h0M32 702h0M517 610h0M1 501h0M566 441h0M392 855h0M571 596h0M461 142h0M579 204h0M564 131h0M588 78h0M254 40h0M540 405h0M346 81h0M575 107h0M523 555h0M47 685h0M49 178h0M265 55h0M109 65h0M218 167h0M318 75h0M22 841h0M9 788h0M196 42h0M9 483h0M179 92h0M18 871h0M96 130h0M5 196h0M114 879h0M555 15h0M568 682h0M567 875h0M131 830h0M568 515h0M580 294h0M135 28h0M356 860h0M321 1h0M428 864h0M383 861h0M455 785h0" stroke="#8a5a26" stroke-width="1.0" stroke-opacity="0.4" stroke-linecap="round" fill="none"/><path d="M570 456h0M209 91h0M19 555h0M559 563h0M337 1h0M587 228h0M559 92h0M554 686h0M431 828h0M563 763h0M19 554h0M32 415h0M458 827h0M46 112h0M513 368h0M571 188h0M448 107h0M545 119h0M511 71h0M14 576h0M536 483h0M581 795h0M285 58h0M420 96h0M306 16h0M360 61h0M552 351h0M542 663h0M582 668h0M564 708h0M117 17h0M534 450h0M50 497h0M579 221h0M581 559h0M438 65h0M564 411h0M428 91h0M556 823h0M445 50h0M503 8h0M562 831h0M81 854h0M473 820h0" stroke="#8a5a26" stroke-width="2.5" stroke-opacity="0.3" stroke-linecap="round" fill="none"/><path d="M406 58h0M534 58h0M538 127h0M576 592h0M472 51h0M560 54h0M556 632h0M235 851h0M489 52h0M72 47h0M195 56h0M164 92h0M388 808h0M497 389h0M286 836h0M384 7h0M48 22h0M561 182h0M11 487h0M63 473h0M403 35h0M572 150h0M56 366h0M42 677h0M563 647h0M386 47h0M10 635h0M273 835h0M132 845h0M507 822h0M390 843h0M113 69h0M108 130h0M2 831h0M474 35h0M314 865h0M563 149h0M217 169h0M44 840h0M56 625h0M191 30h0M122 40h0M293 112h0M70 138h0M563 634h0M543 852h0M576 661h0M471 775h0M194 815h0M383 864h0M586 188h0M394 11h0M578 346h0M111 119h0M436 79h0M545 174h0M332 837h0M522 72h0" stroke="#9a7038" stroke-width="2.0" stroke-opacity="0.7" stroke-linecap="round" fill="none"/><path d="M363 818h0M303 47h0M32 348h0M28 116h0M511 846h0M445 714h0M46 675h0M43 346h0M582 815h0M428 3h0M366 7h0M17 7h0M50 571h0M6 246h0M252 6h0M530 330h0M579 808h0M188 805h0M13 717h0M61 861h0M111 873h0M392 31h0M257 22h0M580 108h0M570 571h0M414 76h0M579 324h0M557 777h0M574 322h0M309 167h0M492 62h0M582 505h0M482 191h0M567 703h0M261 15h0M201 793h0M47 153h0M57 552h0M9 798h0M495 602h0M2 587h0M9 649h0M115 145h0M366 12h0M28 14h0M580 260h0M289 388h0M317 39h0M248 827h0M15 299h0M555 820h0M583 773h0M547 74h0M555 417h0M517 879h0M530 82h0M509 545h0M21 761h0M97 19h0M449 23h0M360 834h0M94 15h0M542 464h0M148 148h0M449 44h0M9 259h0M26 365h0M395 884h0M569 839h0M40 555h0M7 184h0M562 70h0M46 54h0M5 164h0M78 395h0M555 653h0M3 722h0M461 863h0M4 724h0M575 338h0M560 336h0M76 385h0M260 88h0M428 2h0M377 49h0M102 148h0M78 16h0M184 844h0M229 153h0M566 866h0M22 52h0M52 164h0M13 590h0M44 739h0M184 37h0M360 261h0M553 81h0M31 659h0M59 206h0M165 99h0M105 807h0M557 134h0M482 19h0M136 838h0M563 782h0M382 156h0M40 366h0M323 35h0M414 876h0M318 879h0M196 871h0M557 74h0M161 528h0M375 810h0M281 55h0M150 872h0M74 829h0M11 277h0M507 135h0M0 697h0M484 809h0M92 94h0M274 150h0M14 452h0M23 613h0M200 75h0M305 68h0M526 301h0M468 862h0M44 349h0M224 22h0M56 198h0M554 281h0M21 154h0M444 51h0M406 875h0M85 513h0M513 857h0M423 66h0M31 45h0M18 878h0M18 37h0M399 82h0M218 873h0M469 13h0M509 298h0M11 711h0M161 60h0M497 139h0M185 827h0M542 680h0M29 445h0M502 163h0M201 291h0M39 851h0M9 710h0M88 806h0M518 105h0" stroke="#8a5a26" stroke-width="1.0" stroke-opacity="0.3" stroke-linecap="round" fill="none"/><path d="M185 816h0M227 830h0M23 356h0M510 86h0M161 830h0M423 42h0M44 878h0M34 30h0M542 268h0M292 11h0M64 3h0M401 2h0M64 93h0M538 384h0M216 67h0M253 882h0M417 216h0M160 24h0M67 86h0M190 114h0M99 2h0M10 663h0M93 103h0M536 868h0M34 522h0M295 817h0M551 48h0M15 562h0M197 819h0M120 44h0M563 543h0M555 750h0M306 8h0M21 746h0M278 848h0M383 15h0M45 637h0M29 212h0M31 35h0M459 874h0M586 185h0M156 136h0M430 875h0M283 853h0M75 228h0M546 847h0M334 117h0M7 54h0M46 215h0M207 838h0M514 582h0M46 659h0M240 883h0M553 502h0M53 505h0M565 603h0M26 748h0M533 17h0M175 38h0M74 702h0M566 301h0M233 843h0M562 406h0M1 159h0M503 15h0M496 565h0M51 185h0M13 321h0M550 140h0M7 50h0M582 328h0M64 558h0M514 56h0M496 792h0M545 487h0M537 449h0M60 113h0M281 5h0M115 877h0M377 152h0M542 12h0M198 35h0M89 659h0M516 364h0M219 47h0M434 862h0M32 419h0M145 88h0M195 14h0M359 790h0M23 642h0M525 724h0M383 58h0M448 105h0M523 361h0M363 875h0M571 651h0M247 37h0M367 862h0M39 677h0M583 151h0M44 398h0M537 35h0M311 107h0M444 23h0M561 314h0M277 47h0M196 873h0M207 1h0M162 19h0M420 49h0M127 106h0M171 15h0M384 29h0M582 418h0M275 108h0M477 26h0M12 448h0M70 876h0M90 809h0M174 860h0M13 293h0M573 831h0M533 6h0M63 773h0M526 99h0M67 869h0M68 38h0M520 76h0M454 25h0M564 761h0M25 463h0M545 760h0M574 663h0M583 806h0M136 803h0M552 275h0M54 39h0M76 89h0M470 122h0M577 803h0M212 853h0M64 58h0M26 95h0M32 514h0M486 812h0M350 860h0M364 34h0M490 594h0M20 621h0M341 82h0M326 872h0M24 542h0M252 29h0" stroke="#8a5a26" stroke-width="1.0" stroke-opacity="0.6" stroke-linecap="round" fill="none"/><path d="M22 488h0M265 45h0M6 31h0M150 64h0M180 40h0M12 475h0M547 626h0M22 28h0M101 874h0M26 763h0M367 23h0M287 89h0M98 143h0M2 538h0M201 40h0M49 320h0M428 834h0M580 382h0M323 2h0M257 883h0M585 465h0M261 846h0M365 101h0M440 20h0M57 123h0M12 365h0M577 254h0M505 18h0M26 593h0M562 826h0M457 142h0M301 831h0M581 471h0M539 176h0M9 766h0M227 103h0M584 430h0M336 844h0" stroke="#8a5a26" stroke-width="2.5" stroke-opacity="0.5" stroke-linecap="round" fill="none"/><path d="M46 85h0M22 593h0M578 606h0M575 22h0M56 39h0M176 13h0M529 596h0M319 849h0M63 122h0M2 873h0M570 425h0M196 881h0M427 859h0M149 105h0M5 504h0M545 127h0M1 185h0M527 305h0M474 21h0M581 498h0M119 83h0M530 802h0M584 341h0M451 6h0M231 852h0M384 771h0M553 615h0M92 780h0M2 871h0M73 432h0M88 143h0M1 524h0M41 18h0M85 866h0M59 465h0M388 153h0M55 601h0M437 849h0M33 231h0M463 851h0M578 81h0M565 842h0M536 24h0M586 420h0M476 126h0M543 158h0M2 817h0M560 852h0M529 263h0M337 812h0M40 181h0M256 40h0M582 540h0M26 825h0M480 50h0M573 57h0M90 698h0M468 795h0M584 237h0M314 770h0M525 227h0M322 2h0M112 75h0M584 597h0M469 816h0M25 776h0M495 711h0M33 830h0M353 805h0M384 768h0M551 544h0M521 31h0M509 831h0M39 378h0M67 655h0M62 105h0M173 74h0M363 883h0M586 770h0M433 43h0M549 490h0M466 845h0M326 839h0M582 630h0M579 734h0M38 213h0M587 685h0M425 8h0M2 128h0M54 551h0M200 0h0M580 714h0M66 833h0M317 860h0M22 244h0M544 827h0M193 820h0M259 44h0M136 135h0M205 61h0M560 739h0M567 289h0M257 54h0M556 238h0M585 282h0M252 59h0M6 16h0M5 120h0M169 86h0M544 2h0M67 835h0M399 873h0M77 798h0M572 17h0M573 871h0M129 5h0M355 874h0M78 62h0M43 15h0M27 217h0M259 787h0M41 724h0M21 212h0M562 398h0M282 63h0M392 98h0M535 774h0M558 545h0M378 42h0M126 83h0" stroke="#9a7038" stroke-width="2.0" stroke-opacity="0.5" stroke-linecap="round" fill="none"/><path d="M24 177h0M478 62h0M548 134h0M253 14h0M65 316h0M543 492h0M533 513h0M125 834h0M497 2h0M31 809h0M358 104h0M28 688h0M569 321h0M513 370h0M199 853h0M103 643h0M128 13h0M2 297h0M514 262h0M431 875h0M571 238h0M35 155h0M534 200h0M212 834h0M501 121h0M225 42h0M195 131h0M303 835h0M519 279h0M404 28h0M57 431h0M2 247h0M30 56h0M565 144h0M187 127h0M1 495h0M8 71h0M104 32h0M292 836h0M103 0h0M16 870h0M377 65h0M548 733h0M45 490h0M367 827h0M60 431h0M48 593h0M8 86h0M49 372h0M135 51h0M24 636h0M411 863h0M127 8h0M548 539h0M140 175h0M308 4h0M42 872h0M125 19h0M585 771h0M187 120h0M229 804h0M9 63h0M189 855h0M430 2h0M576 871h0M131 105h0M559 671h0M524 527h0M573 454h0M332 14h0M518 467h0M557 55h0M541 674h0M390 47h0M449 53h0M407 188h0M29 331h0M49 368h0M216 853h0M14 91h0M571 28h0M478 44h0M2 38h0M580 594h0" stroke="#9a7038" stroke-width="1.5" stroke-opacity="0.6" stroke-linecap="round" fill="none"/><path d="M576 20h0M366 48h0M584 57h0M532 876h0M277 846h0M253 139h0M395 5h0M547 415h0M583 585h0M304 67h0M35 3h0M505 237h0M50 676h0M223 823h0M44 777h0M113 876h0M516 512h0M556 667h0M550 270h0M264 17h0M368 109h0M512 447h0M353 2h0M31 829h0M503 876h0M78 648h0M423 827h0M570 789h0M588 562h0M539 856h0M130 813h0M6 851h0M88 47h0M6 453h0M555 240h0M567 700h0M544 73h0" stroke="#9a7038" stroke-width="4.0" stroke-opacity="0.4" stroke-linecap="round" fill="none"/><path d="M444 40h0M584 405h0M529 14h0M151 841h0M520 1h0M3 539h0M200 15h0M16 449h0M564 587h0M385 10h0M373 868h0M133 823h0M525 124h0M38 873h0M1 711h0M43 459h0M508 558h0M413 72h0M270 144h0M138 35h0M86 860h0M515 869h0M33 694h0M256 81h0M28 463h0M463 12h0M543 490h0M135 854h0M450 29h0M107 3h0" stroke="#8a5a26" stroke-width="4.0" stroke-opacity="0.7" stroke-linecap="round" fill="none"/><path d="M318 64h0M35 273h0M1 829h0M583 566h0M1 568h0M50 843h0M8 25h0M507 3h0M54 772h0M148 816h0M235 825h0M42 294h0M126 820h0M480 46h0M27 504h0M127 26h0M517 549h0M233 108h0M240 125h0M164 882h0M192 141h0M495 862h0M152 879h0M581 710h0M179 862h0M145 783h0M86 20h0M433 835h0M26 466h0M210 13h0M26 482h0M557 662h0M93 870h0M533 11h0M77 4h0" stroke="#8a5a26" stroke-width="3.0" stroke-opacity="0.3" stroke-linecap="round" fill="none"/><path d="M493 66h0M578 658h0M136 163h0M195 808h0M263 875h0M560 872h0M570 487h0M576 192h0M557 130h0M19 782h0M181 94h0M418 148h0M545 35h0M580 331h0M111 62h0M517 46h0M579 528h0M270 865h0M504 762h0M564 865h0M2 455h0M239 8h0M5 420h0M17 180h0M94 834h0M170 100h0M152 116h0M572 451h0M76 842h0M243 864h0M128 833h0M574 27h0M539 59h0M210 822h0M283 854h0M560 522h0M565 510h0M505 863h0M150 823h0M466 878h0M359 86h0M35 687h0M183 68h0M567 270h0M520 627h0M10 794h0M371 825h0M205 769h0M581 856h0M61 49h0" stroke="#8a5a26" stroke-width="2.5" stroke-opacity="0.6" stroke-linecap="round" fill="none"/><path d="M5 274h0M12 154h0M227 104h0M114 297h0M587 742h0M29 420h0M494 45h0M50 273h0M38 651h0M73 113h0M345 756h0M583 799h0M103 46h0M82 878h0M186 94h0M586 738h0M14 315h0M347 22h0M436 22h0M27 630h0M6 398h0M251 803h0M188 878h0M215 23h0M257 845h0M463 884h0M479 880h0M46 274h0M4 160h0M551 822h0M81 105h0M310 97h0M380 13h0M12 566h0M578 810h0M44 214h0M164 4h0" stroke="#9a7038" stroke-width="2.5" stroke-opacity="0.3" stroke-linecap="round" fill="none"/><path d="M50 732h0M517 883h0M101 60h0M50 700h0M564 108h0M328 107h0M250 66h0M465 863h0M564 102h0M304 869h0M452 800h0M497 834h0M358 868h0M524 749h0M37 35h0M523 787h0M579 582h0M85 59h0M582 217h0M155 3h0M120 67h0M22 305h0M254 8h0M537 876h0M583 772h0M286 851h0M123 846h0M434 78h0M84 784h0M243 865h0M39 687h0M460 25h0M265 34h0M14 603h0M16 337h0M555 728h0M538 689h0M235 201h0" stroke="#9a7038" stroke-width="3.0" stroke-opacity="0.4" stroke-linecap="round" fill="none"/><path d="M104 79h0M329 134h0M555 447h0M580 121h0M267 32h0M472 880h0M577 170h0M1 542h0M554 13h0M564 212h0M413 59h0M546 563h0M125 855h0M210 76h0M579 284h0M579 720h0M28 239h0M576 645h0M186 871h0M35 384h0M562 860h0M145 167h0M36 102h0M523 568h0M2 368h0M455 65h0M116 841h0M409 821h0M64 651h0M515 31h0M286 849h0M351 46h0M495 251h0M362 94h0M367 173h0M62 862h0M552 598h0M92 80h0M3 531h0M336 866h0M587 583h0M573 704h0M578 462h0M65 120h0M217 51h0M155 14h0M571 210h0M369 115h0M36 637h0M72 445h0M562 256h0M547 699h0M182 848h0M498 28h0M532 370h0M183 85h0M38 501h0M577 237h0M105 5h0M10 573h0M86 38h0M274 859h0M91 67h0M492 855h0M83 51h0M53 2h0M63 163h0M138 1h0M363 123h0M553 777h0M86 598h0M108 45h0M395 833h0M58 290h0M576 171h0M272 145h0M299 867h0M23 814h0M1 792h0M503 840h0M279 3h0M221 824h0M347 76h0M587 51h0M417 1h0" stroke="#8a5a26" stroke-width="1.5" stroke-opacity="0.6" stroke-linecap="round" fill="none"/><path d="M199 856h0M412 882h0M527 21h0M584 183h0M124 17h0M450 826h0M333 128h0M81 269h0M561 529h0M408 78h0M390 872h0M367 147h0M21 604h0M572 116h0M556 167h0M154 155h0M13 6h0M571 205h0M539 2h0M7 325h0M407 859h0M239 13h0M32 783h0M542 17h0M586 219h0M531 364h0M61 763h0M566 164h0M353 812h0M572 164h0M9 608h0M537 233h0M38 604h0M31 489h0M233 837h0M29 196h0M546 201h0M584 205h0M522 350h0M279 841h0M51 24h0M531 388h0M52 290h0M401 873h0M150 46h0M495 785h0M565 659h0M531 628h0M576 81h0M114 25h0M61 257h0M16 844h0M524 40h0M401 108h0M217 12h0M575 231h0M176 77h0M436 75h0M69 692h0M43 532h0M577 831h0M510 78h0M167 880h0M310 29h0M206 93h0M124 25h0M317 872h0M441 117h0M93 39h0M334 72h0M341 45h0M393 33h0M561 769h0M261 22h0M565 342h0M157 873h0M15 62h0M480 1h0M374 32h0M579 750h0M548 301h0M11 331h0M555 801h0M472 777h0M358 150h0M45 317h0M34 691h0M587 788h0" stroke="#8a5a26" stroke-width="2.0" stroke-opacity="0.5" stroke-linecap="round" fill="none"/><path d="M563 566h0M114 32h0M508 879h0M97 785h0M5 150h0M70 336h0M262 18h0M226 12h0M359 307h0M6 774h0M387 12h0M547 398h0M71 531h0M77 858h0M73 294h0M3 188h0M179 189h0M383 884h0M526 649h0M417 508h0M38 524h0M321 41h0M582 407h0M534 728h0M476 56h0M53 78h0M40 597h0M59 844h0M378 89h0M256 827h0M534 679h0M42 327h0M20 224h0M50 89h0M42 401h0M130 851h0M278 84h0" stroke="#8a5a26" stroke-width="4.0" stroke-opacity="0.3" stroke-linecap="round" fill="none"/><path d="M536 666h0M60 631h0M486 864h0M235 103h0M481 817h0M3 0h0M138 848h0M79 856h0M526 49h0M530 870h0M570 796h0M580 863h0M338 854h0M579 316h0M11 766h0M34 124h0M55 779h0M19 549h0M554 117h0M10 262h0M437 878h0M32 863h0M8 794h0M279 17h0M201 145h0M523 862h0M212 37h0M149 817h0M587 661h0M8 405h0M420 151h0M412 875h0M560 160h0M76 852h0M491 73h0M34 154h0M192 136h0M109 86h0M403 105h0M505 462h0M549 755h0M118 38h0M171 844h0M59 709h0M551 514h0M585 870h0M551 556h0M60 875h0M4 371h0M555 68h0M7 370h0M151 869h0M51 609h0M544 323h0M559 499h0M469 63h0M348 848h0M470 0h0" stroke="#8a5a26" stroke-width="2.0" stroke-opacity="0.7" stroke-linecap="round" fill="none"/><path d="M54 763h0M586 326h0M404 833h0M390 823h0M562 641h0M215 870h0M180 872h0M570 98h0M203 21h0M366 170h0M533 701h0M58 684h0M12 331h0M109 42h0M33 644h0M8 783h0M497 827h0M217 878h0M303 875h0M239 832h0M73 552h0M25 700h0M362 22h0M253 106h0M80 112h0M480 83h0M143 30h0M549 63h0M572 52h0M121 814h0M45 428h0M527 110h0M173 45h0M268 20h0M89 801h0M539 650h0M432 15h0M17 42h0M32 583h0M422 854h0M580 726h0M12 411h0M485 654h0M141 857h0M561 350h0M304 18h0M473 844h0M437 833h0M569 862h0M441 102h0M567 138h0M430 45h0M53 4h0M19 395h0M547 698h0M45 273h0M486 608h0M577 637h0M140 866h0M158 858h0M209 64h0M277 164h0M286 851h0M459 837h0M386 32h0M560 370h0M587 603h0M575 122h0M16 234h0M449 40h0M438 880h0M328 867h0M159 831h0M550 365h0" stroke="#9a7038" stroke-width="1.0" stroke-opacity="0.7" stroke-linecap="round" fill="none"/><path d="M483 73h0M571 601h0M467 3h0M37 90h0M537 598h0M336 833h0M584 602h0M587 59h0M350 71h0M464 159h0M425 61h0M214 4h0M522 296h0M16 534h0M40 716h0M103 806h0M495 53h0M7 199h0M461 37h0M541 137h0M78 23h0M578 141h0M569 840h0M535 844h0M493 849h0M27 310h0M500 34h0M168 845h0M199 879h0M352 61h0M396 857h0M466 90h0M582 709h0M129 852h0M285 55h0M45 440h0M93 559h0M425 177h0M250 84h0M431 881h0M551 619h0M583 511h0M206 862h0M362 28h0M444 105h0M219 878h0M59 737h0M535 199h0M11 821h0" stroke="#9a7038" stroke-width="4.0" stroke-opacity="0.5" stroke-linecap="round" fill="none"/><path d="M327 77h0M19 276h0M360 56h0M499 677h0M511 47h0M165 45h0M319 831h0M583 409h0M109 60h0M543 183h0M575 744h0M346 832h0M25 25h0M9 132h0M382 105h0M376 20h0M77 39h0M293 145h0M479 63h0M333 37h0M536 720h0M6 564h0M83 154h0M587 857h0M11 156h0M12 820h0M265 57h0M119 60h0M481 99h0M579 537h0M23 570h0M331 150h0M1 305h0M556 532h0M571 882h0M411 57h0M8 341h0M69 846h0M84 524h0M394 9h0M166 146h0M39 408h0M24 1h0M494 1h0M578 485h0M227 115h0M180 789h0M435 13h0M553 414h0M433 873h0M187 83h0M440 22h0M493 770h0M511 26h0M88 141h0M45 656h0M365 878h0M70 15h0M291 851h0M565 165h0M257 863h0M272 801h0M527 520h0M151 819h0M2 396h0M536 61h0M342 162h0M24 454h0M91 285h0M553 764h0M543 270h0M51 714h0M540 13h0M546 201h0M50 59h0M537 585h0M583 275h0M403 882h0M44 4h0M151 93h0M20 390h0M94 839h0M232 852h0M586 503h0M13 788h0M498 520h0M251 18h0M588 546h0M550 176h0M191 10h0M219 867h0M90 766h0M560 226h0M571 90h0M2 812h0M572 418h0M39 4h0M15 579h0M420 19h0M468 869h0M64 54h0M16 498h0M573 458h0M15 134h0M450 138h0M313 36h0M578 339h0M587 635h0M406 42h0M132 794h0M546 812h0M226 10h0M535 851h0M296 3h0" stroke="#9a7038" stroke-width="2.0" stroke-opacity="0.6" stroke-linecap="round" fill="none"/><path d="M60 550h0M7 673h0M528 98h0M518 60h0M295 842h0M198 788h0M573 477h0M581 199h0M194 147h0M462 43h0M4 270h0M14 619h0M357 67h0M579 210h0M498 106h0M12 271h0M369 159h0M253 846h0M540 731h0M560 720h0M84 874h0M8 610h0M142 94h0M133 96h0M399 109h0M27 62h0M541 497h0M573 15h0M424 91h0M325 830h0M4 853h0M226 61h0M494 450h0M359 854h0M278 80h0M58 479h0M525 51h0M83 86h0M108 783h0" stroke="#8a5a26" stroke-width="3.0" stroke-opacity="0.6" stroke-linecap="round" fill="none"/><path d="M419 872h0M578 567h0M258 106h0M496 16h0M445 50h0M35 870h0M321 14h0M282 101h0M161 79h0M12 621h0M308 72h0M63 706h0M131 859h0M18 241h0M198 868h0M555 704h0M585 9h0M585 285h0M285 55h0M285 13h0M160 38h0M23 764h0M180 851h0M536 612h0M25 27h0M45 103h0M533 50h0M585 419h0M546 755h0M500 129h0M12 633h0M6 236h0M1 744h0M421 33h0M481 13h0M231 1h0M258 869h0M584 371h0" stroke="#8a5a26" stroke-width="4.0" stroke-opacity="0.6" stroke-linecap="round" fill="none"/><path d="M37 809h0M511 630h0M527 823h0M74 53h0M461 852h0M309 32h0M230 114h0M7 80h0M18 491h0M583 250h0M202 22h0M581 131h0M474 828h0" stroke="#9a7038" stroke-width="4.0" stroke-opacity="0.7" stroke-linecap="round" fill="none"/><path d="M574 575h0M273 161h0M509 451h0M457 34h0M478 167h0M571 205h0M581 428h0M81 362h0M220 865h0M579 359h0M564 837h0M397 878h0M560 82h0M59 665h0M498 102h0M347 143h0M299 79h0M583 132h0M480 38h0M137 46h0M334 866h0M84 96h0M433 58h0M36 166h0M51 702h0M315 78h0M545 167h0M18 459h0M256 56h0M404 84h0M233 872h0M5 806h0M142 864h0M534 233h0M10 498h0M7 284h0M570 168h0M86 445h0M582 590h0M415 81h0M54 771h0" stroke="#9a7038" stroke-width="1.5" stroke-opacity="0.7" stroke-linecap="round" fill="none"/><path d="M581 168h0M92 872h0M562 533h0M144 827h0M173 37h0M240 858h0M505 51h0M237 852h0M12 313h0M212 53h0M3 813h0M582 597h0M254 89h0M513 234h0M580 378h0M10 210h0M353 819h0M28 815h0M50 282h0M5 44h0M48 204h0M248 802h0M67 655h0M330 21h0M328 76h0M10 359h0M163 79h0M110 474h0M16 422h0M12 349h0M39 433h0M494 856h0M108 854h0M372 108h0M48 69h0" stroke="#8a5a26" stroke-width="4.0" stroke-opacity="0.5" stroke-linecap="round" fill="none"/><path d="M43 611h0M19 132h0M85 631h0M123 844h0M550 110h0M20 529h0M516 54h0M64 24h0M212 870h0M16 682h0M2 385h0M588 325h0M559 341h0M10 517h0M324 828h0M107 123h0M12 644h0M561 597h0M25 846h0M21 700h0M178 785h0M535 859h0M324 861h0M529 837h0M1 385h0M574 7h0M556 478h0M481 166h0M423 151h0M518 27h0M418 156h0M501 38h0M313 27h0M552 178h0M256 83h0M48 546h0M557 43h0M513 565h0M527 16h0M185 137h0M12 711h0M576 721h0M527 287h0M322 114h0M582 465h0M556 235h0M582 84h0M540 273h0M578 280h0M575 562h0M378 26h0M22 357h0M1 371h0M198 766h0M3 156h0M243 32h0M10 790h0M366 856h0M353 845h0M96 511h0M234 840h0M574 727h0M528 382h0M162 849h0M210 6h0M274 132h0M84 820h0M126 791h0M163 37h0M98 863h0M359 4h0M250 853h0M492 882h0M14 472h0M306 37h0M525 317h0M7 515h0M5 676h0" stroke="#8a5a26" stroke-width="1.5" stroke-opacity="0.5" stroke-linecap="round" fill="none"/><path d="M42 31h0M24 246h0M264 57h0M541 20h0M398 862h0M56 800h0M8 763h0M313 7h0M129 130h0M293 26h0M290 49h0M579 203h0M284 51h0M66 431h0M23 779h0M239 817h0M93 342h0M106 803h0M16 453h0M553 235h0M409 882h0M545 715h0M85 46h0M342 83h0M36 728h0M577 56h0M318 830h0M398 833h0M80 550h0M14 54h0M22 642h0M551 399h0M549 460h0M382 35h0M343 15h0M378 10h0M557 331h0M317 7h0M273 870h0M85 435h0M403 882h0M283 23h0M1 63h0M23 453h0M8 795h0M585 587h0M563 396h0M508 197h0M341 38h0M9 531h0M494 847h0M104 648h0M362 132h0M36 632h0M579 123h0M524 788h0M380 862h0M20 786h0M30 62h0M225 98h0M577 69h0M289 17h0M569 116h0M37 876h0M3 378h0M322 91h0M534 584h0M1 544h0M86 182h0M584 874h0M274 58h0M308 835h0M34 609h0M559 726h0M99 434h0M573 79h0M299 43h0M19 609h0M14 98h0M50 644h0M3 514h0M565 89h0M212 861h0M18 265h0M572 618h0M313 14h0M516 744h0" stroke="#9a7038" stroke-width="1.5" stroke-opacity="0.5" stroke-linecap="round" fill="none"/><path d="M155 92h0M554 11h0M74 760h0M356 51h0M84 101h0M184 8h0M360 24h0M496 33h0M279 198h0M55 880h0M116 330h0M546 807h0M478 522h0M534 861h0M586 609h0M12 283h0M279 63h0M508 828h0M576 31h0M559 722h0M11 741h0M16 337h0M130 860h0M334 882h0M284 878h0M9 873h0M583 10h0M580 68h0M25 511h0M197 330h0M342 46h0M103 883h0M580 686h0M341 58h0M415 19h0M296 791h0M546 112h0M25 630h0M59 644h0M555 198h0M58 227h0M488 47h0M343 691h0M98 0h0" stroke="#9a7038" stroke-width="4.0" stroke-opacity="0.3" stroke-linecap="round" fill="none"/><path d="M309 9h0M382 21h0M18 166h0M183 48h0M528 205h0M28 45h0M94 295h0M526 199h0M8 723h0M63 163h0M540 352h0M479 167h0M190 874h0M202 852h0M96 149h0M525 92h0M573 865h0M518 17h0M211 116h0M2 633h0M287 861h0M257 862h0M576 661h0M372 850h0M35 682h0M19 734h0M528 124h0M585 254h0M450 99h0M536 10h0M89 90h0M245 836h0" stroke="#8a5a26" stroke-width="3.0" stroke-opacity="0.4" stroke-linecap="round" fill="none"/><path d="M533 704h0M527 78h0M574 737h0M30 669h0M186 870h0M409 25h0M587 710h0M531 67h0M245 846h0M530 264h0M204 823h0M242 53h0M39 26h0M461 858h0M548 713h0M122 311h0M338 873h0M553 333h0M580 787h0M308 55h0M517 809h0M332 852h0M185 79h0M478 30h0M516 663h0M267 121h0M10 285h0M1 674h0M413 73h0M69 642h0M506 805h0M569 409h0M537 198h0M55 93h0M77 663h0M587 314h0M550 485h0M245 868h0M212 882h0M164 126h0M403 876h0M135 794h0M347 7h0M512 614h0M36 295h0M23 445h0M541 172h0M251 11h0M398 67h0M528 547h0M97 883h0M342 852h0M2 626h0M90 866h0M354 847h0M148 87h0M586 872h0M10 840h0M203 804h0M584 346h0M185 123h0M223 841h0M565 267h0M457 805h0M554 787h0M470 824h0M525 339h0M222 54h0M91 849h0M23 143h0M233 786h0M13 572h0M538 602h0M190 875h0M585 341h0M471 858h0M175 874h0M5 100h0M515 550h0M81 25h0M524 378h0M267 848h0M147 820h0M61 862h0M5 5h0M579 623h0M19 380h0" stroke="#9a7038" stroke-width="1.5" stroke-opacity="0.3" stroke-linecap="round" fill="none"/><path d="M582 721h0M130 812h0M102 144h0M552 447h0M445 17h0M533 736h0M581 354h0M9 475h0M564 161h0M126 827h0M445 134h0M311 8h0M59 806h0M381 34h0M578 711h0M5 233h0M58 453h0M439 803h0M32 747h0M533 447h0M533 223h0M0 30h0M498 70h0M137 61h0M63 23h0M35 882h0M547 411h0M15 275h0M150 80h0M586 355h0M508 838h0M303 775h0M51 196h0M322 23h0" stroke="#9a7038" stroke-width="3.0" stroke-opacity="0.5" stroke-linecap="round" fill="none"/><path d="M332 60h0M548 570h0M586 88h0M270 13h0M99 36h0M581 644h0M565 209h0M2 53h0M576 610h0M568 352h0M505 26h0M47 672h0M541 790h0M584 193h0M160 28h0M50 132h0M398 56h0M76 481h0M18 39h0M363 767h0M543 67h0M574 831h0M242 37h0M456 60h0M140 764h0M12 159h0M425 864h0M281 779h0M1 101h0M402 676h0M554 144h0M414 28h0M355 8h0M226 32h0M64 710h0M51 716h0M12 150h0M248 487h0M583 440h0" stroke="#9a7038" stroke-width="3.0" stroke-opacity="0.3" stroke-linecap="round" fill="none"/><path d="M243 48h0M348 809h0M541 210h0M464 819h0M21 211h0M574 419h0M376 100h0M170 29h0M575 549h0M32 455h0M9 100h0M493 23h0M84 798h0M3 694h0M214 876h0M4 868h0M494 151h0M483 76h0M403 57h0M34 643h0M298 884h0M4 747h0M24 846h0M565 702h0M93 113h0M566 286h0M557 380h0M573 301h0M89 856h0M7 16h0M26 645h0M509 32h0M25 302h0M201 848h0M175 27h0M449 2h0M557 856h0M233 819h0M404 188h0M60 62h0M157 37h0M3 813h0M486 2h0M573 61h0M320 71h0M585 513h0M445 781h0M577 78h0M42 605h0M267 621h0M284 7h0M277 801h0M120 570h0M8 612h0M526 808h0M20 132h0M154 454h0M166 34h0M45 864h0M534 630h0M335 877h0M311 872h0M490 133h0M573 329h0M32 453h0M575 499h0M287 882h0M145 826h0M263 180h0M67 790h0M9 88h0M267 27h0M232 673h0M420 879h0M5 569h0M557 230h0M524 22h0M526 767h0M86 197h0M546 101h0M78 669h0M242 33h0M32 662h0M519 192h0M7 42h0M3 624h0M123 56h0M566 645h0M383 855h0M561 754h0M374 4h0M28 196h0M586 695h0M29 305h0M286 74h0M77 534h0M558 257h0M446 836h0M539 159h0M570 194h0M32 211h0M35 362h0M583 807h0M187 86h0M546 89h0M45 828h0M539 667h0" stroke="#8a5a26" stroke-width="2.0" stroke-opacity="0.3" stroke-linecap="round" fill="none"/><path d="M443 513h0" stroke="#9a7038" stroke-width="4.0" stroke-opacity="0.2" stroke-linecap="round" fill="none"/><path d="M550 18h0M374 825h0M69 593h0M506 478h0M189 839h0M559 506h0M16 225h0M249 61h0M44 264h0M3 527h0M221 58h0M274 880h0M434 63h0M571 357h0M14 278h0M213 60h0M11 426h0M23 624h0M553 466h0M97 884h0M40 197h0M343 878h0" stroke="#9a7038" stroke-width="2.5" stroke-opacity="0.7" stroke-linecap="round" fill="none"/><path d="M201 823h0M574 163h0M48 717h0M124 144h0M74 5h0M4 555h0M491 137h0M42 425h0M212 78h0M206 136h0M35 207h0M167 845h0M323 121h0M478 168h0M17 180h0M521 81h0M568 137h0M568 474h0M219 866h0M584 523h0M563 416h0M75 474h0M578 96h0M512 520h0M312 154h0M448 832h0M282 184h0M288 12h0M316 180h0M14 741h0M390 790h0M46 518h0M200 65h0M579 203h0" stroke="#8a5a26" stroke-width="4.0" stroke-opacity="0.4" stroke-linecap="round" fill="none"/><path d="M579 551h0M4 199h0M10 282h0M336 22h0M329 102h0M6 268h0M76 94h0M494 830h0M110 36h0M52 83h0M554 487h0M544 736h0M39 668h0M209 21h0M44 866h0M568 664h0M443 131h0M47 321h0M428 0h0M550 673h0M33 884h0M83 3h0M55 545h0M583 608h0M506 274h0M30 780h0M537 516h0M276 163h0M580 43h0M59 633h0M305 862h0M524 594h0M52 270h0M185 881h0M5 458h0M19 747h0M36 631h0M78 1h0M508 859h0" stroke="#9a7038" stroke-width="4.0" stroke-opacity="0.6" stroke-linecap="round" fill="none"/><path d="M4 605h0M489 833h0M579 872h0M581 192h0M588 710h0M542 299h0M63 182h0M402 877h0M514 813h0M220 75h0M526 876h0M324 96h0M94 495h0M297 863h0M400 55h0M555 123h0M482 872h0M381 24h0M499 434h0M366 124h0M581 794h0M512 876h0M23 581h0M380 4h0M357 852h0M74 594h0M127 823h0M72 8h0M247 114h0M145 107h0M370 2h0M53 341h0M448 21h0M2 336h0M535 227h0M585 433h0M480 105h0M169 38h0M39 445h0M419 814h0M45 232h0M337 777h0M523 226h0M14 424h0M63 751h0M482 829h0M586 598h0M471 832h0M75 79h0M359 142h0M34 498h0M16 821h0M586 88h0M3 184h0M527 123h0M335 19h0M23 595h0M75 858h0M54 171h0M552 827h0M5 213h0M497 566h0M151 843h0M588 647h0M85 101h0M539 335h0M211 875h0M556 404h0M576 79h0M326 881h0M36 875h0M108 863h0M587 430h0M587 674h0" stroke="#9a7038" stroke-width="1.5" stroke-opacity="0.4" stroke-linecap="round" fill="none"/><path d="M439 85h0M283 804h0M38 742h0M36 434h0M534 693h0M1 514h0M231 856h0M2 423h0M291 784h0M462 29h0M561 841h0M294 305h0M567 543h0M545 710h0M38 177h0M544 819h0M347 863h0M13 787h0M96 872h0M556 561h0M348 7h0M46 41h0M236 205h0M48 738h0M530 740h0M33 10h0M563 284h0M537 864h0M19 641h0M7 39h0M538 689h0M176 67h0M324 391h0M122 864h0M149 9h0M553 293h0M136 36h0M528 723h0M245 52h0M347 0h0M43 545h0M15 586h0M578 463h0M41 237h0M445 30h0M479 791h0M563 259h0M563 390h0M586 884h0M546 338h0M17 170h0M65 557h0M464 884h0M578 605h0M555 700h0M433 56h0M7 696h0M14 390h0" stroke="#8a5a26" stroke-width="1.5" stroke-opacity="0.3" stroke-linecap="round" fill="none"/><path d="M564 644h0M214 4h0M112 1h0M362 75h0M523 848h0M577 707h0M567 525h0M380 845h0M16 202h0M96 93h0M587 527h0M137 71h0M294 826h0M542 535h0M547 78h0M64 357h0M566 32h0M520 101h0M410 146h0M541 2h0M76 69h0M577 173h0M11 314h0M168 19h0M71 755h0M526 401h0M581 220h0M347 883h0M38 768h0M186 67h0M230 863h0M61 240h0M464 762h0M278 82h0M578 230h0M315 40h0M54 661h0M132 98h0M530 56h0M515 859h0M580 379h0" stroke="#9a7038" stroke-width="2.5" stroke-opacity="0.5" stroke-linecap="round" fill="none"/><path d="M231 701h0M230 683h0M130 291h0M170 349h0M380 422h0" stroke="#8a5a26" stroke-width="2.0" stroke-opacity="0.2" stroke-linecap="round" fill="none"/><path d="M268 779h0M9 177h0M575 174h0M190 877h0M577 749h0M572 535h0M30 752h0M35 733h0M587 101h0M576 103h0M273 858h0M52 327h0M28 645h0M3 384h0M101 532h0M57 425h0M514 603h0M47 362h0M56 516h0M525 118h0M41 810h0M405 17h0M230 764h0M148 93h0M54 754h0M30 56h0M423 110h0M17 579h0M530 865h0M364 866h0M406 883h0M174 120h0M206 70h0M204 165h0M9 257h0M157 860h0M247 71h0M584 862h0M132 809h0M464 92h0M6 441h0" stroke="#9a7038" stroke-width="2.5" stroke-opacity="0.6" stroke-linecap="round" fill="none"/><path d="M154 334h0" stroke="#8a5a26" stroke-width="4.0" stroke-opacity="0.1" stroke-linecap="round" fill="none"/><path d="M200 427h0M361 449h0" stroke="#8a5a26" stroke-width="3.0" stroke-opacity="0.2" stroke-linecap="round" fill="none"/><path d="M156 117h0M402 8h0M534 875h0M249 73h0M39 780h0M521 340h0M582 209h0M6 653h0M175 813h0M25 345h0M99 16h0M571 214h0M46 174h0M38 38h0M562 543h0M331 2h0M6 107h0M200 131h0M546 97h0M402 87h0M185 6h0" stroke="#9a7038" stroke-width="3.0" stroke-opacity="0.7" stroke-linecap="round" fill="none"/><path d="M422 529h0M167 743h0M134 439h0" stroke="#9a7038" stroke-width="1.5" stroke-opacity="0.2" stroke-linecap="round" fill="none"/><path d="M19 803h0M452 176h0M315 66h0M38 134h0M55 643h0M551 39h0M108 76h0M458 4h0M357 12h0M36 436h0M398 40h0M547 112h0M275 876h0M260 138h0M27 796h0M86 57h0M557 243h0M44 356h0M559 18h0M273 33h0M82 818h0" stroke="#8a5a26" stroke-width="3.0" stroke-opacity="0.7" stroke-linecap="round" fill="none"/><path d="M343 715h0M450 445h0M291 312h0M129 606h0M245 740h0M417 375h0M389 377h0" stroke="#8a5a26" stroke-width="1.5" stroke-opacity="0.2" stroke-linecap="round" fill="none"/><path d="M412 621h0" stroke="#9a7038" stroke-width="3.0" stroke-opacity="0.2" stroke-linecap="round" fill="none"/><path d="M228 545h0" stroke="#9a7038" stroke-width="2.0" stroke-opacity="0.2" stroke-linecap="round" fill="none"/><path d="M293 327h0M389 374h0" stroke="#8a5a26" stroke-width="1.0" stroke-opacity="0.1" stroke-linecap="round" fill="none"/><path d="M314 348h0" stroke="#9a7038" stroke-width="2.5" stroke-opacity="0.1" stroke-linecap="round" fill="none"/><path d="M136 517h0M140 250h0M403 526h0" stroke="#9a7038" stroke-width="1.0" stroke-opacity="0.1" stroke-linecap="round" fill="none"/><path d="M390 581h0M339 431h0" stroke="#8a5a26" stroke-width="4.0" stroke-opacity="0.2" stroke-linecap="round" fill="none"/><path d="M370 725h0M220 511h0M449 363h0" stroke="#8a5a26" stroke-width="1.0" stroke-opacity="0.2" stroke-linecap="round" fill="none"/><path d="M117 725h0" stroke="#9a7038" stroke-width="2.5" stroke-opacity="0.2" stroke-linecap="round" fill="none"/><path d="M244 660h0" stroke="#8a5a26" stroke-width="1.5" stroke-opacity="0.1" stroke-linecap="round" fill="none"/><path d="M144 28h0M274 166h0M22 828h0M30 205h0M10 246h0" stroke="#8a5a2a" stroke-width="6.0" stroke-opacity="0.6" stroke-linecap="round" fill="none"/><path d="M322 491h0M545 448h0" stroke="#8a5a2a" stroke-width="6.0" stroke-opacity="0.7" stroke-linecap="round" fill="none"/><path d="M503 230h0" stroke="#8a5a2a" stroke-width="5.0" stroke-opacity="0.5" stroke-linecap="round" fill="none"/><path d="M545 337h0M575 38h0M470 124h0M10 576h0M173 779h0M6 444h0M134 858h0" stroke="#8a5a2a" stroke-width="5.5" stroke-opacity="0.5" stroke-linecap="round" fill="none"/><path d="M366 247h0M569 169h0M503 590h0M143 868h0M196 92h0M249 50h0M42 559h0" stroke="#8a5a2a" stroke-width="5.0" stroke-opacity="0.6" stroke-linecap="round" fill="none"/><path d="M502 263h0M484 165h0M443 169h0M405 8h0M583 667h0M55 846h0" stroke="#8a5a2a" stroke-width="4.5" stroke-opacity="0.5" stroke-linecap="round" fill="none"/><path d="M437 389h0M493 171h0" stroke="#8a5a2a" stroke-width="5.0" stroke-opacity="0.4" stroke-linecap="round" fill="none"/><path d="M296 82h0" stroke="#8a5a2a" stroke-width="6.5" stroke-opacity="0.5" stroke-linecap="round" fill="none"/><path d="M495 860h0" stroke="#8a5a2a" stroke-width="6.5" stroke-opacity="0.6" stroke-linecap="round" fill="none"/><path d="M79 820h0" stroke="#8a5a2a" stroke-width="6.5" stroke-opacity="0.4" stroke-linecap="round" fill="none"/><path d="M513 878h0M24 722h0M375 23h0M301 39h0M586 875h0" stroke="#8a5a2a" stroke-width="6.0" stroke-opacity="0.5" stroke-linecap="round" fill="none"/><path d="M28 421h0M555 3h0M574 416h0M357 140h0" stroke="#8a5a2a" stroke-width="5.5" stroke-opacity="0.6" stroke-linecap="round" fill="none"/><path d="M3 740h0M46 213h0M203 98h0M150 792h0" stroke="#8a5a2a" stroke-width="4.5" stroke-opacity="0.7" stroke-linecap="round" fill="none"/><path d="M60 800h0M377 376h0" stroke="#8a5a2a" stroke-width="4.5" stroke-opacity="0.4" stroke-linecap="round" fill="none"/><path d="M561 661h0" stroke="#8a5a2a" stroke-width="3.5" stroke-opacity="0.7" stroke-linecap="round" fill="none"/><path d="M68 384h0M420 854h0M77 733h0M7 726h0" stroke="#8a5a2a" stroke-width="4.0" stroke-opacity="0.5" stroke-linecap="round" fill="none"/><path d="M547 497h0M545 522h0M380 811h0" stroke="#8a5a2a" stroke-width="5.0" stroke-opacity="0.7" stroke-linecap="round" fill="none"/><path d="M13 25h0M207 809h0M35 674h0" stroke="#8a5a2a" stroke-width="4.0" stroke-opacity="0.7" stroke-linecap="round" fill="none"/><path d="M4 565h0M511 401h0M32 427h0M505 411h0M577 536h0" stroke="#8a5a2a" stroke-width="4.5" stroke-opacity="0.6" stroke-linecap="round" fill="none"/><path d="M96 22h0M463 859h0" stroke="#8a5a2a" stroke-width="5.5" stroke-opacity="0.4" stroke-linecap="round" fill="none"/><path d="M459 870h0M51 552h0M388 420h0" stroke="#8a5a2a" stroke-width="6.5" stroke-opacity="0.7" stroke-linecap="round" fill="none"/><path d="M190 470h0M159 869h0M208 321h0M586 204h0M99 119h0" stroke="#8a5a2a" stroke-width="4.0" stroke-opacity="0.6" stroke-linecap="round" fill="none"/><path d="M127 180h0" stroke="#8a5a2a" stroke-width="3.5" stroke-opacity="0.4" stroke-linecap="round" fill="none"/><path d="M536 775h0M60 479h0" stroke="#8a5a2a" stroke-width="3.5" stroke-opacity="0.6" stroke-linecap="round" fill="none"/><path d="M572 249h0" stroke="#8a5a2a" stroke-width="6.0" stroke-opacity="0.4" stroke-linecap="round" fill="none"/><path d="M134 696h0M567 666h0" stroke="#8a5a2a" stroke-width="5.5" stroke-opacity="0.7" stroke-linecap="round" fill="none"/></svg>
<div class="a" style="left:712px;top:120px;width:588px;height:884px;border:1px solid #f03a2a;"></div>
<div class="a" style="left:713px;top:121px;width:586px;height:882px;border:1px solid rgba(255,80,60,0.45);"></div>
<div class="a" style="left:732px;top:140px;width:548px;height:845px;border:1px solid #151010;"></div>
<svg class="a" style="left:712px;top:120px;" width="588" height="884" viewBox="0 0 588 884"><circle cx="290.5" cy="93.5" r="36" fill="rgba(226,212,110,0.78)"/><circle cx="290.5" cy="107.5" r="21.5" fill="rgba(214,194,36,0.85)"/><polygon points="283.0,128.8 295.9,128.8 308.4,182.1 271.8,188.8" fill="rgba(193,47,50,0.85)"/><polygon points="276.7,148.5 308.4,182.1 271.8,188.8" fill="rgba(180,40,45,0.25)"/><polygon points="257.4,176.3 269.0,197.5 235.3,211.0" fill="rgba(208,85,71,0.80)"/><polygon points="281.5,187.9 312.2,235.0 239.2,222.5" fill="rgba(208,85,71,0.80)"/><polygon points="272.8,196.5 242.0,253.3 270.9,259.0" fill="rgba(193,47,50,0.85)"/><polygon points="283.4,217.7 272.8,229.2 284.3,260.0" fill="rgba(208,85,71,0.80)"/><polygon points="319.9,233.1 366.1,282.1 272.8,264.8" fill="rgba(193,47,50,0.85)"/><polygon points="224.7,264.8 235.3,292.7 202.6,289.8" fill="rgba(208,85,71,0.80)"/><polygon points="225.7,282.1 278.6,257.1 274.7,283.1" fill="rgba(208,85,71,0.80)"/><polygon points="259.3,268.7 343.0,271.5 306.5,298.5" fill="rgba(208,85,71,0.80)"/><polygon points="281.5,254.2 293.0,360.0 268.0,360.0" fill="rgba(193,47,50,0.85)"/><polygon points="198.8,308.1 314.2,285.0 250.7,323.5" fill="rgba(193,47,50,0.85)"/><polygon points="248.8,284.0 238.2,298.5 252.6,302.3" fill="rgba(208,85,71,0.80)"/><polygon points="314.2,285.0 333.4,315.8 294.9,352.3" fill="rgba(208,85,71,0.80)"/><polygon points="291.1,302.3 298.8,301.3 291.1,333.1" fill="rgba(208,85,71,0.80)"/><polygon points="240.7,314.2 158.0,412.3 221.5,415.2" fill="rgba(208,85,71,0.80)"/><polygon points="263.8,330.6 216.7,372.9 267.6,363.3" fill="rgba(193,47,50,0.85)"/><polygon points="271.5,316.2 299.3,400.8 261.8,387.3" fill="rgba(193,47,50,0.85)"/><polygon points="219.5,390.2 143.6,452.7 198.4,452.7" fill="rgba(208,85,71,0.80)"/><polygon points="169.5,425.8 209.0,435.4 202.2,471.9" fill="rgba(193,47,50,0.85)"/><polygon points="209.9,435.4 271.5,479.6 206.1,471.9" fill="rgba(208,85,71,0.80)"/><polygon points="149.3,465.2 252.2,479.6 188.8,507.5" fill="rgba(193,47,50,0.85)"/><polygon points="126.3,520.0 194.5,466.2 233.0,520.0" fill="rgba(208,85,71,0.80)"/><polygon points="250.3,388.3 267.6,466.2 238.8,473.8" fill="rgba(193,47,50,0.85)"/><polygon points="232.0,440.2 309.9,400.8 277.2,458.5" fill="rgba(193,47,50,0.85)"/><polygon points="252.2,381.5 300.3,398.8 265.7,416.2" fill="rgba(208,85,71,0.80)"/><polygon points="283.0,435.4 318.0,483.5 284.9,495.0" fill="rgba(193,47,50,0.85)"/><polygon points="265.7,479.6 286.8,520.0 233.0,520.0" fill="rgba(208,85,71,0.80)"/><polygon points="307.2,325.8 364.9,319.0 323.6,388.3" fill="rgba(193,47,50,0.85)"/><polygon points="351.5,341.2 394.7,379.6 366.8,393.1" fill="rgba(193,47,50,0.85)"/><polygon points="293.8,352.7 311.1,318.1 314.9,354.6" fill="rgba(208,85,71,0.80)"/><polygon points="299.5,387.3 378.4,381.5 357.2,418.1" fill="rgba(208,85,71,0.80)"/><polygon points="295.7,402.7 332.2,383.5 334.2,416.2" fill="rgba(208,85,71,0.80)"/><polygon points="299.5,391.2 334.2,418.1 307.2,400.8" fill="rgba(193,47,50,0.85)"/><polygon points="336.1,430.6 391.8,407.5 438.0,491.2" fill="rgba(193,47,50,0.85)"/><polygon points="336.1,435.4 376.5,454.6 438.0,489.2" fill="rgba(193,47,50,0.85)"/><polygon points="295.7,431.5 334.2,420.0 326.5,446.9" fill="rgba(208,85,71,0.80)"/><polygon points="301.5,454.6 343.8,483.5 288.0,502.7" fill="rgba(208,85,71,0.80)"/><polygon points="311.1,520.0 378.4,454.6 413.0,520.0" fill="rgba(193,47,50,0.85)"/><polygon points="395.7,470.0 403.4,493.1 391.8,483.5" fill="rgba(208,85,71,0.80)"/><polygon points="128.3,530.3 182.8,498.0 194.9,526.3" fill="rgba(208,85,71,0.80)"/><polygon points="116.2,574.3 164.6,516.2 192.9,560.6" fill="rgba(208,85,71,0.80)"/><polygon points="158.6,517.2 267.6,580.8 207.0,601.0" fill="rgba(193,47,50,0.85)"/><polygon points="174.7,509.1 275.7,540.4 237.3,555.5" fill="rgba(208,85,71,0.80)"/><polygon points="182.8,500.0 211.1,498.0 190.9,508.1" fill="rgba(193,47,50,0.85)"/><polygon points="211.1,499.0 259.6,499.0 237.3,552.5" fill="rgba(208,85,71,0.80)"/><polygon points="229.3,520.2 261.6,498.0 287.8,522.2" fill="rgba(193,47,50,0.85)"/><polygon points="287.8,500.0 308.0,500.0 308.0,538.4" fill="rgba(208,85,71,0.80)"/><polygon points="223.2,564.6 308.0,530.3 308.0,596.9" fill="rgba(193,47,50,0.85)"/><polygon points="120.2,598.9 190.9,584.8 199.0,613.1" fill="rgba(208,85,71,0.80)"/><polygon points="168.7,592.9 237.3,619.1 127.3,671.6" fill="rgba(193,47,50,0.85)"/><polygon points="203.0,605.0 265.6,590.9 227.2,633.3" fill="rgba(208,85,71,0.80)"/><polygon points="145.5,671.6 239.4,617.1 249.5,704.0" fill="rgba(208,85,71,0.80)"/><polygon points="307.8,532.7 341.7,602.8 192.9,693.9" fill="rgba(193,47,50,0.85)"/><polygon points="309.0,514.3 393.0,478.9 402.9,478.9 451.6,586.1 402.9,564.0 376.4,546.3" fill="rgba(193,47,50,0.85)"/><polygon points="362.0,606.0 411.8,550.7 471.5,558.5" fill="rgba(193,47,50,0.85)"/><polygon points="354.3,539.7 402.9,564.0 372.0,599.4" fill="rgba(208,85,71,0.80)"/><polygon points="376.4,603.8 469.3,607.1 422.8,580.6" fill="rgba(208,85,71,0.80)"/><polygon points="394.1,623.7 429.5,592.7 471.5,661.3" fill="rgba(193,47,50,0.85)"/><polygon points="288.0,535.3 309.0,531.9 360.9,579.5" fill="rgba(193,47,50,0.85)"/><polygon points="310.1,530.8 363.2,579.5 343.3,592.7" fill="rgba(208,85,71,0.80)"/><polygon points="338.8,599.4 417.3,652.4 372.0,703.3" fill="rgba(193,47,50,0.85)"/><polygon points="243.8,687.8 314.5,634.7 400.7,682.3" fill="rgba(208,85,71,0.80)"/><polygon points="288.0,603.8 310.1,661.3 288.0,663.5" fill="rgba(193,47,50,0.85)"/><polygon points="376.4,612.6 416.2,678.9 383.0,634.7" fill="rgba(208,85,71,0.80)"/><polygon points="278.0,485.0 323.0,478.0 306.0,545.0" fill="rgba(208,85,71,0.80)"/><polygon points="318.0,535.0 363.0,530.0 368.0,580.0" fill="rgba(193,47,50,0.85)"/><circle cx="305.7" cy="620.3" r="15.5" fill="rgba(212,188,44,0.86)"/><circle cx="115.3" cy="530.6" r="15.5" fill="rgba(212,188,44,0.86)"/><circle cx="117.5" cy="679.4" r="15.5" fill="rgba(212,188,44,0.86)"/><circle cx="469.7" cy="660.8" r="15.5" fill="rgba(212,188,44,0.86)"/><circle cx="438.0" cy="489.2" r="15.5" fill="rgba(212,188,44,0.86)"/><circle cx="335.2" cy="431.3" r="15.5" fill="rgba(212,188,44,0.86)"/><circle cx="239.0" cy="404.6" r="15.5" fill="rgba(212,188,44,0.86)"/><circle cx="191.0" cy="301.7" r="15.5" fill="rgba(212,188,44,0.86)"/><circle cx="376.7" cy="299.8" r="15.5" fill="rgba(212,188,44,0.86)"/><circle cx="319.9" cy="220.0" r="15.5" fill="rgba(212,188,44,0.86)"/></svg>
<svg class="a" style="left:700px;top:800px;" width="600" height="120" viewBox="0 0 600 120"><g transform="translate(55,25) scale(0.083333)"><path d="M720,180 C640,110 450,100 320,140 C170,190 70,300 75,410 C80,520 190,560 270,520 C340,480 360,390 320,320 C290,270 210,260 170,320 C140,370 170,440 230,440" fill="none" stroke="#cb3c42" stroke-width="49" stroke-linecap="round" stroke-linejoin="round"/><path d="M110,300 C70,360 70,460 130,520" fill="none" stroke="#cb3c42" stroke-width="85" stroke-linecap="round" stroke-linejoin="round"/><path d="M330,340 C345,400 330,460 290,500" fill="none" stroke="#cb3c42" stroke-width="71" stroke-linecap="round" stroke-linejoin="round"/><circle cx="700" cy="180" r="40" fill="#cb3c42"/><path d="M380,130 C480,115 580,115 690,150" fill="none" stroke="#cb3c42" stroke-width="51" stroke-linecap="round" stroke-linejoin="round"/><path d="M590,190 C540,350 430,560 330,700" fill="none" stroke="#cb3c42" stroke-width="100" stroke-linecap="round" stroke-linejoin="round"/><polygon points="215,722 315,640 405,722" fill="#cb3c42"/><path d="M390,370 L615,345" fill="none" stroke="#cb3c42" stroke-width="49" stroke-linecap="round" stroke-linejoin="round"/><path d="M700,350 C660,450 600,600 560,705" fill="none" stroke="#cb3c42" stroke-width="92" stroke-linecap="round" stroke-linejoin="round"/><path d="M630,345 C680,320 740,320 790,345" fill="none" stroke="#cb3c42" stroke-width="43" stroke-linecap="round" stroke-linejoin="round"/><path d="M980,320 C1090,320 1150,420 1120,540 C1090,660 1000,710 920,700 C830,690 800,600 830,480 C860,370 920,320 980,320 Z" fill="none" stroke="#cb3c42" stroke-width="73" stroke-linecap="round" stroke-linejoin="round"/><path d="M1560,150 C1460,300 1300,520 1180,705" fill="none" stroke="#cb3c42" stroke-width="98" stroke-linecap="round" stroke-linejoin="round"/><path d="M1520,140 C1560,105 1620,110 1640,150" fill="none" stroke="#cb3c42" stroke-width="49" stroke-linecap="round" stroke-linejoin="round"/><circle cx="1610" cy="180" r="35" fill="#cb3c42"/><path d="M1270,520 C1330,420 1400,370 1460,380 C1510,390 1500,440 1480,500 L1420,690 C1410,720 1450,720 1490,680" fill="none" stroke="#cb3c42" stroke-width="73" stroke-linecap="round" stroke-linejoin="round"/><path d="M1550,570 C1640,540 1740,470 1770,400 C1790,340 1720,310 1660,340 C1580,380 1530,480 1530,590 C1530,690 1610,720 1680,690 C1720,670 1750,630 1770,600" fill="none" stroke="#cb3c42" stroke-width="67" stroke-linecap="round" stroke-linejoin="round"/></g><g transform="translate(210,25) scale(0.083333)"><path d="M720,150 C600,110 450,100 330,130 C180,180 100,290 100,400 C100,510 180,570 270,560 C360,545 400,460 390,380 C380,300 320,260 260,270 C190,290 180,380 200,430 C215,470 260,470 275,440" fill="none" stroke="#cb3c42" stroke-width="55" stroke-linecap="round" stroke-linejoin="round"/><path d="M140,290 C95,360 95,460 150,530" fill="none" stroke="#cb3c42" stroke-width="88" stroke-linecap="round" stroke-linejoin="round"/><path d="M385,360 C400,420 380,490 330,530" fill="none" stroke="#cb3c42" stroke-width="71" stroke-linecap="round" stroke-linejoin="round"/><path d="M700,150 C600,280 470,480 440,620 C430,700 500,710 560,660 C640,580 760,340 840,195" fill="none" stroke="#cb3c42" stroke-width="88" stroke-linecap="round" stroke-linejoin="round"/><path d="M840,195 C770,340 700,520 690,620 C690,700 750,710 810,660 C900,580 990,400 1000,280 C1005,230 990,210 960,220" fill="none" stroke="#cb3c42" stroke-width="78" stroke-linecap="round" stroke-linejoin="round"/><circle cx="985" cy="225" r="42" fill="#cb3c42"/><path d="M1040,560 C1130,530 1230,460 1250,390 C1260,340 1200,310 1140,340 C1060,380 1020,480 1020,590 C1020,690 1100,720 1170,690 C1210,670 1240,630 1260,600" fill="none" stroke="#cb3c42" stroke-width="67" stroke-linecap="round" stroke-linejoin="round"/><circle cx="1435" cy="190" r="45" fill="#cb3c42"/><path d="M1420,340 C1380,450 1320,600 1310,660 C1300,710 1360,710 1400,670" fill="none" stroke="#cb3c42" stroke-width="73" stroke-linecap="round" stroke-linejoin="round"/><path d="M1840,160 C1740,300 1600,520 1500,705" fill="none" stroke="#cb3c42" stroke-width="98" stroke-linecap="round" stroke-linejoin="round"/><path d="M1800,140 C1840,105 1890,110 1900,150" fill="none" stroke="#cb3c42" stroke-width="49" stroke-linecap="round" stroke-linejoin="round"/><circle cx="1870" cy="175" r="35" fill="#cb3c42"/></g><g transform="translate(350,25) scale(0.083333)"><path d="M-110,560 C-50,420 40,340 110,340 C150,345 140,400 120,460 L40,690 C30,720 70,720 110,680" fill="none" stroke="#cb3c42" stroke-width="76" stroke-linecap="round" stroke-linejoin="round"/><path d="M350,330 C320,450 290,600 270,705" fill="none" stroke="#cb3c42" stroke-width="85" stroke-linecap="round" stroke-linejoin="round"/><path d="M330,420 C380,360 440,320 500,330 C560,345 550,400 530,460 L480,660 C470,710 520,710 560,670" fill="none" stroke="#cb3c42" stroke-width="73" stroke-linecap="round" stroke-linejoin="round"/><path d="M760,360 C720,320 640,320 600,380 C550,460 540,600 580,680 C620,730 700,690 740,600" fill="none" stroke="#cb3c42" stroke-width="67" stroke-linecap="round" stroke-linejoin="round"/><path d="M790,330 C760,450 720,600 720,660 C720,710 770,710 810,670" fill="none" stroke="#cb3c42" stroke-width="79" stroke-linecap="round" stroke-linejoin="round"/><path d="M1020,380 C1000,320 930,310 880,360 C820,420 790,560 810,650 C830,720 920,710 980,650" fill="none" stroke="#cb3c42" stroke-width="67" stroke-linecap="round" stroke-linejoin="round"/><circle cx="1020" cy="380" r="38" fill="#cb3c42"/></g><g transform="translate(430,25) scale(0.083333)"><path d="M470,130 C380,300 220,520 50,705" fill="none" stroke="#cb3c42" stroke-width="98" stroke-linecap="round" stroke-linejoin="round"/><path d="M430,120 C480,90 540,100 540,150" fill="none" stroke="#cb3c42" stroke-width="49" stroke-linecap="round" stroke-linejoin="round"/><circle cx="505" cy="170" r="38" fill="#cb3c42"/><path d="M170,500 C230,410 290,370 340,380 C390,390 380,440 360,500 L300,690 C290,720 330,720 370,680" fill="none" stroke="#cb3c42" stroke-width="73" stroke-linecap="round" stroke-linejoin="round"/><path d="M640,200 C590,350 500,560 470,660 C460,710 520,710 560,670" fill="none" stroke="#cb3c42" stroke-width="85" stroke-linecap="round" stroke-linejoin="round"/><path d="M420,335 L660,325" fill="none" stroke="#cb3c42" stroke-width="43" stroke-linecap="round" stroke-linejoin="round"/><path d="M640,570 C730,540 830,470 850,400 C860,350 800,320 740,350 C660,390 620,490 620,600 C620,700 700,720 770,690 C810,670 840,640 860,610" fill="none" stroke="#cb3c42" stroke-width="67" stroke-linecap="round" stroke-linejoin="round"/><path d="M960,330 C930,450 890,600 860,705" fill="none" stroke="#cb3c42" stroke-width="85" stroke-linecap="round" stroke-linejoin="round"/><path d="M940,420 C990,360 1050,320 1110,330 C1170,345 1160,400 1140,460 L1090,660 C1080,710 1130,710 1170,670" fill="none" stroke="#cb3c42" stroke-width="73" stroke-linecap="round" stroke-linejoin="round"/><polygon points="1385,105 1455,135 1292,560 1262,550" fill="#cb3c42"/><circle cx="1238" cy="660" r="40" fill="#cb3c42"/></g></svg>
<div class="a" style="left:758px;top:823px;width:1px;height:79px;background:#4a5a8c;"></div>
<div class="a" style="left:0px;top:63px;width:41px;height:977px;background:#474747;"></div>
<div class="a" style="left:0px;top:63px;width:1px;height:977px;background:#2a2a2a;"></div>
<div class="a" style="left:39px;top:63px;width:1px;height:977px;background:#2e2e2e;"></div>
<div class="a" style="left:40px;top:63px;width:1px;height:977px;background:#3a3a3a;"></div>
<div class="a" style="left:0px;top:63px;width:40px;height:14px;background:#333333;"></div>
<div class="a" style="left:0px;top:77px;width:40px;height:1px;background:#2a2a2a;"></div>
<svg class="a" style="left:4px;top:66px;" width="12" height="8" viewBox="0 0 12 8"><path d="M1 0.5 L5 4 L1 7.5 Z M6 0.5 L10 4 L6 7.5 Z" fill="#d8d8d8"/></svg>
<div class="a" style="left:10px;top:81px;width:1px;height:5px;background:#151515;"></div>
<div class="a" style="left:12px;top:81px;width:1px;height:5px;background:#151515;"></div>
<div class="a" style="left:14px;top:81px;width:1px;height:5px;background:#151515;"></div>
<div class="a" style="left:16px;top:81px;width:1px;height:5px;background:#151515;"></div>
<div class="a" style="left:18px;top:81px;width:1px;height:5px;background:#151515;"></div>
<div class="a" style="left:20px;top:81px;width:1px;height:5px;background:#151515;"></div>
<div class="a" style="left:22px;top:81px;width:1px;height:5px;background:#151515;"></div>
<div class="a" style="left:24px;top:81px;width:1px;height:5px;background:#151515;"></div>
<div class="a" style="left:26px;top:81px;width:1px;height:5px;background:#151515;"></div>
<div class="a" style="left:28px;top:81px;width:1px;height:5px;background:#151515;"></div>
<div class="a" style="left:3px;top:189px;width:34px;height:1px;background:#3b3b3b;"></div>
<div class="a" style="left:3px;top:190px;width:34px;height:1px;background:#575757;"></div>
<div class="a" style="left:3px;top:383px;width:34px;height:1px;background:#3b3b3b;"></div>
<div class="a" style="left:3px;top:384px;width:34px;height:1px;background:#575757;"></div>
<div class="a" style="left:3px;top:530px;width:34px;height:1px;background:#3b3b3b;"></div>
<div class="a" style="left:3px;top:531px;width:34px;height:1px;background:#575757;"></div>
<div class="a" style="left:3px;top:627px;width:34px;height:1px;background:#3b3b3b;"></div>
<div class="a" style="left:3px;top:628px;width:34px;height:1px;background:#575757;"></div>
<div class="a" style="left:3px;top:678px;width:34px;height:1px;background:#3b3b3b;"></div>
<div class="a" style="left:3px;top:679px;width:34px;height:1px;background:#575757;"></div>
<div class="a" style="left:3px;top:776px;width:34px;height:1px;background:#3b3b3b;"></div>
<div class="a" style="left:3px;top:777px;width:34px;height:1px;background:#575757;"></div>
<div class="a" style="left:7px;top:93px;width:27px;height:21px;background:#545454;"></div>
<svg class="a" style="left:9.0px;top:93.0px;" width="22" height="22" viewBox="0 0 22 22"><path d="M7 3 L7 18 L10.5 14.5 L13.5 20 L15.5 19 L12.7 13.5 L17.5 13.5 Z" fill="#2a2a2a" stroke="#e4e4e4" stroke-width="1.1" stroke-linejoin="round"/></svg>
<div class="a" style="left:2px;top:88px;width:38px;height:30px;border:5px solid #fb0000;"></div>
<svg class="a" style="left:9.0px;top:118.0px;" width="22" height="22" viewBox="0 0 22 22"><path d="M7 3 L7 18 L10.5 14.5 L13.5 20 L15.5 19 L12.7 13.5 L17.5 13.5 Z" fill="#e0e0e0" stroke="#e0e0e0" stroke-width="1" stroke-linejoin="round"/></svg>
<div class="a" style="left:31px;top:137px;width:0;height:0;border-left:4px solid transparent;border-bottom:4px solid #d0d0d0"></div>
<svg class="a" style="left:9.0px;top:142.0px;" width="22" height="22" viewBox="0 0 22 22"><path d="M9 9 L19 19" stroke="#d0d0d0" stroke-width="2.2"/><path d="M8 2 L9 6 L13 6 L10 8.5 L11.5 12.5 L8 10 L4.5 12.5 L6 8.5 L3 6 L7 6 Z" fill="#e8e8e8"/></svg>
<svg class="a" style="left:9.0px;top:166.0px;" width="22" height="22" viewBox="0 0 22 22"><ellipse cx="10" cy="8" rx="7.5" ry="5" fill="none" stroke="#d0d0d0" stroke-width="1.6"/><path d="M11 8 L11 20 L14 17 L16 21 L17.5 20 L15.5 16.5 L19 16.5 Z" fill="#d8d8d8"/><path d="M5 12 Q3 16 6 18" fill="none" stroke="#d0d0d0" stroke-width="1.4"/></svg>
<svg class="a" style="left:9.0px;top:191.0px;" width="22" height="22" viewBox="0 0 22 22"><path d="M4 19 L8 10 L14 7 L16 9 L13 15 Z" fill="#d0d0d0"/><path d="M14 7 L18 3 L20 5 L16 9" fill="none" stroke="#d0d0d0" stroke-width="1.6"/><circle cx="10.5" cy="12.5" r="1.3" fill="#4b4b4b"/></svg>
<div class="a" style="left:7px;top:215px;width:27px;height:22px;background:#3a3a3a;"></div>
<svg class="a" style="left:9.0px;top:215.0px;" width="22" height="22" viewBox="0 0 22 22"><path d="M5 5 H17 V8.5 M5 5 V8.5 M11 5 V19 M8 19 H14" fill="none" stroke="#e4e4e4" stroke-width="1.4"/></svg>
<div class="a" style="left:2px;top:211px;width:38px;height:30px;border:5px solid #fb0000;"></div>
<svg class="a" style="left:9.0px;top:240.0px;" width="22" height="22" viewBox="0 0 22 22"><line x1="5" y1="18" x2="17" y2="5" stroke="#d8d8d8" stroke-width="1.6"/></svg>
<div class="a" style="left:31px;top:259px;width:0;height:0;border-left:4px solid transparent;border-bottom:4px solid #d0d0d0"></div>
<svg class="a" style="left:9.0px;top:264.0px;" width="22" height="22" viewBox="0 0 22 22"><ellipse cx="11" cy="11" rx="8" ry="6" fill="#9a9a9a" stroke="#bdbdbd" stroke-width="1"/></svg>
<div class="a" style="left:31px;top:283px;width:0;height:0;border-left:4px solid transparent;border-bottom:4px solid #d0d0d0"></div>
<svg class="a" style="left:9.0px;top:287.0px;" width="22" height="22" viewBox="0 0 22 22"><path d="M19 3 L9 13" stroke="#d8d8d8" stroke-width="2.6"/><path d="M9 13 Q5 13 4 18 Q8 18 10.5 15 Z" fill="#d8d8d8"/></svg>
<svg class="a" style="left:9.0px;top:311.0px;" width="22" height="22" viewBox="0 0 22 22"><path d="M5 18 L7 13 L16 4 L19 7 L10 16 Z" fill="#bcbcbc" stroke="#d8d8d8" stroke-width="1"/><path d="M5 18 L7 13 L10 16 Z" fill="#e8e8e8"/></svg>
<div class="a" style="left:31px;top:330px;width:0;height:0;border-left:4px solid transparent;border-bottom:4px solid #d0d0d0"></div>
<svg class="a" style="left:9.0px;top:335.0px;" width="22" height="22" viewBox="0 0 22 22"><path d="M4 10 H12 V18 H4 Z" fill="#c4c4c4"/><path d="M9 14 Q12 8 19 4" stroke="#e0e0e0" stroke-width="2.5" fill="none"/><path d="M7 14 Q10 12 11 14 Q10 16 7 15Z" fill="#3a3a3a"/></svg>
<svg class="a" style="left:9.0px;top:359.0px;" width="22" height="22" viewBox="0 0 22 22"><path d="M4 15 L12 7 L18 9 L19 12 L11 19 L5 18 Z" fill="#c4c4c4" stroke="#e0e0e0" stroke-width="0.8"/><path d="M4 15 L11 17 L19 11" fill="none" stroke="#7a7a7a" stroke-width="1"/></svg>
<div class="a" style="left:31px;top:378px;width:0;height:0;border-left:4px solid transparent;border-bottom:4px solid #d0d0d0"></div>
<svg class="a" style="left:9.0px;top:386.0px;" width="22" height="22" viewBox="0 0 22 22"><path d="M16 9 A6 6 0 1 1 10 5" fill="none" stroke="#d0d0d0" stroke-width="1.6" stroke-dasharray="2.5 1.5"/><path d="M7 2 L11 5 L7 8 Z" fill="#d8d8d8"/></svg>
<div class="a" style="left:31px;top:405px;width:0;height:0;border-left:4px solid transparent;border-bottom:4px solid #d0d0d0"></div>
<svg class="a" style="left:9.0px;top:410.0px;" width="22" height="22" viewBox="0 0 22 22"><rect x="9" y="3" width="10" height="10" fill="none" stroke="#d8d8d8" stroke-width="1.2"/><rect x="3" y="9" width="9" height="9" fill="#4b4b4b" stroke="#d8d8d8" stroke-width="1.2"/><path d="M12 10 L17 5 M14 5 H17 V8" stroke="#d8d8d8" stroke-width="1.2" fill="none"/></svg>
<div class="a" style="left:31px;top:429px;width:0;height:0;border-left:4px solid transparent;border-bottom:4px solid #d0d0d0"></div>
<svg class="a" style="left:9.0px;top:434.0px;" width="22" height="22" viewBox="0 0 22 22"><path d="M4 8 Q8 3 11 8 Q15 3 18 7 Q17 14 12 12 L6 18" fill="#bcbcbc" stroke="#d8d8d8" stroke-width="1"/><circle cx="6" cy="17" r="1.8" fill="none" stroke="#eee"/><circle cx="12" cy="11" r="1.8" fill="none" stroke="#eee"/><circle cx="16" cy="6" r="1.6" fill="#eee"/></svg>
<div class="a" style="left:31px;top:453px;width:0;height:0;border-left:4px solid transparent;border-bottom:4px solid #d0d0d0"></div>
<svg class="a" style="left:9.0px;top:458.0px;" width="22" height="22" viewBox="0 0 22 22"><rect x="6" y="5" width="12" height="12" fill="none" stroke="#d8d8d8" stroke-dasharray="2 1.5"/><path d="M3 3 L3 14 L6 11 L9 16 L10.5 15 L8 10.5 L12 10.5 Z" fill="#d8d8d8"/></svg>
<svg class="a" style="left:9.0px;top:482.0px;" width="22" height="22" viewBox="0 0 22 22"><circle cx="8" cy="10" r="5.5" fill="none" stroke="#d0d0d0" stroke-width="1.4"/><circle cx="12" cy="9" r="5.5" fill="none" stroke="#d0d0d0" stroke-width="1.4"/><path d="M12 10 L12 21 L14.5 18.5 L16.5 21.5 L18 20.5 L16 17.5 L19 17.5 Z" fill="#e0e0e0"/><path d="M4 10h8" stroke="#eee" stroke-dasharray="1 1"/></svg>
<div class="a" style="left:31px;top:501px;width:0;height:0;border-left:4px solid transparent;border-bottom:4px solid #d0d0d0"></div>
<svg class="a" style="left:9.0px;top:507.0px;" width="22" height="22" viewBox="0 0 22 22"><path d="M3 20 V6 L8 3 V20 M8 20 V4 L13 6 V20 M3 11 H19 M3 15 H19 M13 8 L19 10 V20 H3" fill="none" stroke="#cdcdcd" stroke-width="1.2"/></svg>
<div class="a" style="left:31px;top:526px;width:0;height:0;border-left:4px solid transparent;border-bottom:4px solid #d0d0d0"></div>
<svg class="a" style="left:9.0px;top:531.0px;" width="22" height="22" viewBox="0 0 22 22"><rect x="3" y="4" width="16" height="14" fill="none" stroke="#d0d0d0" stroke-width="1.2"/><path d="M3 10 Q8 6 11 10 T19 9 M7 4 Q10 11 7 18 M13 4 Q11 11 14 18" fill="none" stroke="#d0d0d0" stroke-width="1.1"/></svg>
<svg class="a" style="left:9.0px;top:555.0px;" width="22" height="22" viewBox="0 0 22 22"><defs><linearGradient id="gt" x1="0" x2="1" y1="0" y2="1"><stop offset="0" stop-color="#333"/><stop offset="1" stop-color="#e8e8e8"/></linearGradient></defs><rect x="3" y="5" width="16" height="12" fill="url(#gt)" stroke="#d0d0d0" stroke-width="1"/></svg>
<svg class="a" style="left:9.0px;top:579.0px;" width="22" height="22" viewBox="0 0 22 22"><path d="M4 19 L6 14 L13 7 L16 10 L9 17 Z" fill="#3a3a3a" stroke="#d8d8d8" stroke-width="1"/><path d="M12 6 L17 2 L20 5 L16 10 Z" fill="#d8d8d8"/></svg>
<div class="a" style="left:31px;top:598px;width:0;height:0;border-left:4px solid transparent;border-bottom:4px solid #d0d0d0"></div>
<svg class="a" style="left:9.0px;top:603.0px;" width="22" height="22" viewBox="0 0 22 22"><rect x="3" y="3" width="9" height="9" fill="#bcbcbc" stroke="#d8d8d8"/><circle cx="11" cy="12" r="5" fill="#8a8a8a" stroke="#d8d8d8"/><circle cx="14" cy="14" r="5" fill="#6a6a6a" stroke="#d8d8d8" stroke-width="1.2"/></svg>
<svg class="a" style="left:9.0px;top:630.0px;" width="22" height="22" viewBox="0 0 22 22"><rect x="9" y="8" width="9" height="12" fill="none" stroke="#d8d8d8" stroke-width="1.2"/><rect x="11" y="4" width="5" height="4" fill="#d8d8d8"/><circle cx="13.5" cy="14" r="2" fill="none" stroke="#d8d8d8" stroke-width="1.2"/><path d="M2 4h1M4 4h1M6 4h1M3 6h1M5 6h1M7 6h1" stroke="#d8d8d8"/></svg>
<div class="a" style="left:31px;top:649px;width:0;height:0;border-left:4px solid transparent;border-bottom:4px solid #d0d0d0"></div>
<svg class="a" style="left:9.0px;top:654.0px;" width="22" height="22" viewBox="0 0 22 22"><path d="M3 3 V19 H19" fill="none" stroke="#d8d8d8" stroke-width="1.2"/><rect x="6" y="11" width="3" height="8" fill="#9a9a9a" stroke="#d8d8d8" stroke-width="0.8"/><rect x="10" y="6" width="3" height="13" fill="#9a9a9a" stroke="#d8d8d8" stroke-width="0.8"/><rect x="14" y="9" width="3" height="10" fill="#9a9a9a" stroke="#d8d8d8" stroke-width="0.8"/></svg>
<div class="a" style="left:31px;top:673px;width:0;height:0;border-left:4px solid transparent;border-bottom:4px solid #d0d0d0"></div>
<svg class="a" style="left:9.0px;top:679.0px;" width="22" height="22" viewBox="0 0 22 22"><rect x="5" y="6" width="12" height="10" fill="#7a7a7a" stroke="#d8d8d8" stroke-width="1"/><path d="M2 5.5h3M17 5.5h3M2 16.5h3M17 16.5h3M5.5 2v3M16.5 2v3M5.5 17v3M16.5 17v3" stroke="#d8d8d8"/></svg>
<svg class="a" style="left:9.0px;top:704.0px;" width="22" height="22" viewBox="0 0 22 22"><path d="M4 18 L16 5 L20 5 L8 17 Z" fill="#c8c8c8"/><path d="M4 18 L10 13" stroke="#eee" stroke-width="1.5"/></svg>
<div class="a" style="left:31px;top:723px;width:0;height:0;border-left:4px solid transparent;border-bottom:4px solid #d0d0d0"></div>
<svg class="a" style="left:9.0px;top:728.0px;" width="22" height="22" viewBox="0 0 22 22"><path d="M6 20 Q3 15 3 11 L5 10 L7 13 V5 Q8 3.5 9 5 V11 V3.5 Q10.5 2 11.5 3.5 V11 V4.5 Q13 3 14 4.5 V11 V7 Q15.5 5.5 16.5 7 V15 Q16 19 14 20 Z" fill="#c8c8c8" stroke="#e0e0e0" stroke-width="0.7"/></svg>
<div class="a" style="left:31px;top:747px;width:0;height:0;border-left:4px solid transparent;border-bottom:4px solid #d0d0d0"></div>
<svg class="a" style="left:9.0px;top:751.0px;" width="22" height="22" viewBox="0 0 22 22"><circle cx="9" cy="9" r="6" fill="#8a8a8a" stroke="#d0d0d0" stroke-width="1.5"/><path d="M13.5 13.5 L19 19" stroke="#d0d0d0" stroke-width="2.6"/></svg>
<svg class="a" style="left:4px;top:779px;" width="14" height="14" viewBox="0 0 14 14"><rect x="4.5" y="4.5" width="8" height="8" fill="#222" stroke="#eee"/><rect x="1.5" y="1.5" width="8" height="8" fill="#f0f0f0" stroke="#222"/></svg>
<svg class="a" style="left:24px;top:778px;" width="13" height="14" viewBox="0 0 13 14"><path d="M2 4 H9 Q11 4 11 6 V11" fill="none" stroke="#e0e0e0" stroke-width="1.2"/><path d="M0 4 L3 1.5 L3 6.5 Z M11 13 L8.5 10 L13.5 10 Z" fill="#e0e0e0"/></svg>
<div class="a" style="left:16px;top:808px;width:19px;height:19px;background:#fdfdfd;border:1px solid #2a2a2a;"></div>
<div class="a" style="left:20px;top:812px;width:11px;height:11px;background:#3b3b3b;"></div>
<svg class="a" style="left:16px;top:808px;" width="19" height="19" viewBox="0 0 19 19"><line x1="1" y1="18" x2="18" y2="1" stroke="#e8202a" stroke-width="2"/></svg>
<div class="a" style="left:6px;top:798px;width:18px;height:18px;background:#f4f4f4;border:1px solid #2a2a2a;"></div>
<div class="a" style="left:8px;top:800px;width:14px;height:14px;background:#c9434f;"></div>
<div class="a" style="left:6px;top:834px;width:9px;height:9px;background:#c9434f;border:1px solid #2a2a2a;"></div>
<div class="a" style="left:16px;top:834px;width:9px;height:9px;border:1px solid #2a2a2a;background:linear-gradient(90deg,#fff,#222)"></div>
<div class="a" style="left:25px;top:834px;width:9px;height:9px;background:#fafafa;border:1px solid #2a2a2a;"></div>
<svg class="a" style="left:25px;top:834px;" width="9" height="9" viewBox="0 0 9 9"><line x1="0" y1="9" x2="9" y2="0" stroke="#e02020" stroke-width="1.4"/></svg>
<svg class="a" style="left:13px;top:849px;" width="16" height="16" viewBox="0 0 16 16"><circle cx="7" cy="7" r="5" fill="none" stroke="#cfcfcf" stroke-width="1.2"/><rect x="8" y="8" width="7" height="7" fill="#b0b0b0" stroke="#d8d8d8"/></svg>
<svg class="a" style="left:10px;top:872px;" width="20" height="16" viewBox="0 0 20 16"><rect x="6.5" y="1.5" width="12" height="9" fill="#6a6a6a" stroke="#d8d8d8"/><rect x="1.5" y="5.5" width="12" height="9" fill="#5a5a5a" stroke="#d8d8d8"/></svg>
<div class="a" style="left:1863px;top:84px;width:17px;height:938px;background:#343434;"></div>
<div class="a" style="left:1863px;top:84px;width:1px;height:938px;background:#2a2a2a;"></div>
<div class="a" style="left:1866px;top:90px;width:0;height:0;border-left:5.5px solid transparent;border-right:5.5px solid transparent;border-bottom:8px solid #e4e4e4"></div>
<div class="a" style="left:1864px;top:546px;width:15px;height:16px;background:#8f8f8f;"></div>
<div class="a" style="left:1866px;top:1010px;width:0;height:0;border-left:5.5px solid transparent;border-right:5.5px solid transparent;border-top:8px solid #e4e4e4"></div>
<div class="a" style="left:1880px;top:63px;width:40px;height:977px;background:#484848;"></div>
<div class="a" style="left:1879px;top:63px;width:2px;height:977px;background:#222222;"></div>
<div class="a" style="left:1881px;top:63px;width:1px;height:977px;background:#525252;"></div>
<div class="a" style="left:1919px;top:63px;width:1px;height:977px;background:#262626;"></div>
<div class="a" style="left:1881px;top:63px;width:39px;height:14px;background:#333333;"></div>
<svg class="a" style="left:1902px;top:66px;" width="12" height="8" viewBox="0 0 12 8"><path d="M11 0.5 L7 4 L11 7.5 Z M6 0.5 L2 4 L6 7.5 Z" fill="#d8d8d8"/></svg>
<div class="a" style="left:1881px;top:200px;width:39px;height:1px;background:#2c2c2c;"></div>
<div class="a" style="left:1892px;top:81px;width:1px;height:5px;background:#151515;"></div>
<div class="a" style="left:1894px;top:81px;width:1px;height:5px;background:#151515;"></div>
<div class="a" style="left:1896px;top:81px;width:1px;height:5px;background:#151515;"></div>
<div class="a" style="left:1898px;top:81px;width:1px;height:5px;background:#151515;"></div>
<div class="a" style="left:1900px;top:81px;width:1px;height:5px;background:#151515;"></div>
<div class="a" style="left:1902px;top:81px;width:1px;height:5px;background:#151515;"></div>
<div class="a" style="left:1904px;top:81px;width:1px;height:5px;background:#151515;"></div>
<div class="a" style="left:1906px;top:81px;width:1px;height:5px;background:#151515;"></div>
<div class="a" style="left:1908px;top:81px;width:1px;height:5px;background:#151515;"></div>
<div class="a" style="left:1910px;top:81px;width:1px;height:5px;background:#151515;"></div>
<div class="a" style="left:1881px;top:269px;width:39px;height:1px;background:#2c2c2c;"></div>
<div class="a" style="left:1892px;top:205px;width:1px;height:5px;background:#151515;"></div>
<div class="a" style="left:1894px;top:205px;width:1px;height:5px;background:#151515;"></div>
<div class="a" style="left:1896px;top:205px;width:1px;height:5px;background:#151515;"></div>
<div class="a" style="left:1898px;top:205px;width:1px;height:5px;background:#151515;"></div>
<div class="a" style="left:1900px;top:205px;width:1px;height:5px;background:#151515;"></div>
<div class="a" style="left:1902px;top:205px;width:1px;height:5px;background:#151515;"></div>
<div class="a" style="left:1904px;top:205px;width:1px;height:5px;background:#151515;"></div>
<div class="a" style="left:1906px;top:205px;width:1px;height:5px;background:#151515;"></div>
<div class="a" style="left:1908px;top:205px;width:1px;height:5px;background:#151515;"></div>
<div class="a" style="left:1910px;top:205px;width:1px;height:5px;background:#151515;"></div>
<div class="a" style="left:1881px;top:366px;width:39px;height:1px;background:#2c2c2c;"></div>
<div class="a" style="left:1892px;top:274px;width:1px;height:5px;background:#151515;"></div>
<div class="a" style="left:1894px;top:274px;width:1px;height:5px;background:#151515;"></div>
<div class="a" style="left:1896px;top:274px;width:1px;height:5px;background:#151515;"></div>
<div class="a" style="left:1898px;top:274px;width:1px;height:5px;background:#151515;"></div>
<div class="a" style="left:1900px;top:274px;width:1px;height:5px;background:#151515;"></div>
<div class="a" style="left:1902px;top:274px;width:1px;height:5px;background:#151515;"></div>
<div class="a" style="left:1904px;top:274px;width:1px;height:5px;background:#151515;"></div>
<div class="a" style="left:1906px;top:274px;width:1px;height:5px;background:#151515;"></div>
<div class="a" style="left:1908px;top:274px;width:1px;height:5px;background:#151515;"></div>
<div class="a" style="left:1910px;top:274px;width:1px;height:5px;background:#151515;"></div>
<div class="a" style="left:1881px;top:463px;width:39px;height:1px;background:#2c2c2c;"></div>
<div class="a" style="left:1892px;top:371px;width:1px;height:5px;background:#151515;"></div>
<div class="a" style="left:1894px;top:371px;width:1px;height:5px;background:#151515;"></div>
<div class="a" style="left:1896px;top:371px;width:1px;height:5px;background:#151515;"></div>
<div class="a" style="left:1898px;top:371px;width:1px;height:5px;background:#151515;"></div>
<div class="a" style="left:1900px;top:371px;width:1px;height:5px;background:#151515;"></div>
<div class="a" style="left:1902px;top:371px;width:1px;height:5px;background:#151515;"></div>
<div class="a" style="left:1904px;top:371px;width:1px;height:5px;background:#151515;"></div>
<div class="a" style="left:1906px;top:371px;width:1px;height:5px;background:#151515;"></div>
<div class="a" style="left:1908px;top:371px;width:1px;height:5px;background:#151515;"></div>
<div class="a" style="left:1910px;top:371px;width:1px;height:5px;background:#151515;"></div>
<div class="a" style="left:1881px;top:533px;width:39px;height:1px;background:#2c2c2c;"></div>
<div class="a" style="left:1892px;top:468px;width:1px;height:5px;background:#151515;"></div>
<div class="a" style="left:1894px;top:468px;width:1px;height:5px;background:#151515;"></div>
<div class="a" style="left:1896px;top:468px;width:1px;height:5px;background:#151515;"></div>
<div class="a" style="left:1898px;top:468px;width:1px;height:5px;background:#151515;"></div>
<div class="a" style="left:1900px;top:468px;width:1px;height:5px;background:#151515;"></div>
<div class="a" style="left:1902px;top:468px;width:1px;height:5px;background:#151515;"></div>
<div class="a" style="left:1904px;top:468px;width:1px;height:5px;background:#151515;"></div>
<div class="a" style="left:1906px;top:468px;width:1px;height:5px;background:#151515;"></div>
<div class="a" style="left:1908px;top:468px;width:1px;height:5px;background:#151515;"></div>
<div class="a" style="left:1910px;top:468px;width:1px;height:5px;background:#151515;"></div>
<div class="a" style="left:1881px;top:574px;width:39px;height:1px;background:#2c2c2c;"></div>
<div class="a" style="left:1892px;top:538px;width:1px;height:5px;background:#151515;"></div>
<div class="a" style="left:1894px;top:538px;width:1px;height:5px;background:#151515;"></div>
<div class="a" style="left:1896px;top:538px;width:1px;height:5px;background:#151515;"></div>
<div class="a" style="left:1898px;top:538px;width:1px;height:5px;background:#151515;"></div>
<div class="a" style="left:1900px;top:538px;width:1px;height:5px;background:#151515;"></div>
<div class="a" style="left:1902px;top:538px;width:1px;height:5px;background:#151515;"></div>
<div class="a" style="left:1904px;top:538px;width:1px;height:5px;background:#151515;"></div>
<div class="a" style="left:1906px;top:538px;width:1px;height:5px;background:#151515;"></div>
<div class="a" style="left:1908px;top:538px;width:1px;height:5px;background:#151515;"></div>
<div class="a" style="left:1910px;top:538px;width:1px;height:5px;background:#151515;"></div>
<div class="a" style="left:1881px;top:671px;width:39px;height:1px;background:#2c2c2c;"></div>
<div class="a" style="left:1892px;top:579px;width:1px;height:5px;background:#151515;"></div>
<div class="a" style="left:1894px;top:579px;width:1px;height:5px;background:#151515;"></div>
<div class="a" style="left:1896px;top:579px;width:1px;height:5px;background:#151515;"></div>
<div class="a" style="left:1898px;top:579px;width:1px;height:5px;background:#151515;"></div>
<div class="a" style="left:1900px;top:579px;width:1px;height:5px;background:#151515;"></div>
<div class="a" style="left:1902px;top:579px;width:1px;height:5px;background:#151515;"></div>
<div class="a" style="left:1904px;top:579px;width:1px;height:5px;background:#151515;"></div>
<div class="a" style="left:1906px;top:579px;width:1px;height:5px;background:#151515;"></div>
<div class="a" style="left:1908px;top:579px;width:1px;height:5px;background:#151515;"></div>
<div class="a" style="left:1910px;top:579px;width:1px;height:5px;background:#151515;"></div>
<svg class="a" style="left:1890.0px;top:89.0px;" width="22" height="22" viewBox="0 0 22 22"><rect x="3.5" y="5.5" width="15" height="10" fill="none" stroke="#dcdcdc" stroke-width="1"/><path d="M3.5 10.5h15M8.5 5.5v10M13.5 5.5v10" stroke="#dcdcdc"/><rect x="4" y="6" width="4" height="4" fill="#555"/><rect x="9" y="6" width="4" height="4" fill="#777"/><rect x="14" y="11" width="4" height="4" fill="#555"/></svg>
<svg class="a" style="left:1890.0px;top:118.0px;" width="22" height="22" viewBox="0 0 22 22"><path d="M3 11 Q3 5 11 5 Q19 5 19 10 Q19 13 15 13 Q13 13 13 15 Q13 17 10 17 Q3 17 3 11Z" fill="#cfcfcf"/><circle cx="6.5" cy="11" r="1.3" fill="#4b4b4b"/><circle cx="9" cy="14" r="1.3" fill="#4b4b4b"/><circle cx="10" cy="8" r="1.3" fill="#4b4b4b"/><circle cx="15" cy="8" r="1.3" fill="#4b4b4b"/></svg>
<svg class="a" style="left:1890.0px;top:145.0px;" width="22" height="22" viewBox="0 0 22 22"><defs><linearGradient id="gq" x1="0" x2="1" y1="1" y2="0"><stop offset="0" stop-color="#333"/><stop offset="1" stop-color="#ddd"/></linearGradient></defs><path d="M4 19 V3 A16 16 0 0 1 20 19 Z" fill="url(#gq)" stroke="#e0e0e0" stroke-width="1"/></svg>
<svg class="a" style="left:1890.0px;top:173.0px;" width="22" height="22" viewBox="0 0 22 22"><circle cx="8" cy="12" r="5" fill="none" stroke="#d8d8d8" stroke-width="1.4"/><path d="M8 12 L16 4 M8 12 L16 19" stroke="#d8d8d8" stroke-width="1.4"/><circle cx="16.5" cy="4" r="2.2" fill="#d8d8d8"/><circle cx="16.5" cy="19" r="2.2" fill="#d8d8d8"/><circle cx="8" cy="12" r="2" fill="#d8d8d8"/></svg>
<svg class="a" style="left:1890.0px;top:213.0px;" width="22" height="22" viewBox="0 0 22 22"><rect x="7" y="11" width="8" height="8" fill="#cfcfcf"/><path d="M9 11 L6 4 M11 11 V2 M13 11 L16 4" stroke="#d8d8d8" stroke-width="1.4"/><ellipse cx="6" cy="5" rx="2" ry="3" fill="#d8d8d8"/><ellipse cx="16" cy="5" rx="2.5" ry="2" fill="#d8d8d8"/></svg>
<svg class="a" style="left:1890.0px;top:243.0px;" width="22" height="22" viewBox="0 0 22 22"><circle cx="11" cy="6.5" r="4" fill="#d4d4d4"/><circle cx="6.5" cy="12" r="4" fill="#d4d4d4"/><circle cx="15.5" cy="12" r="4" fill="#d4d4d4"/><path d="M11 10 L9 19 H13 Z" fill="#d4d4d4"/></svg>
<svg class="a" style="left:1890.0px;top:283.0px;" width="22" height="22" viewBox="0 0 22 22"><path d="M3 6h16M3 11h16" stroke="#e0e0e0" stroke-width="1.4"/><rect x="3" y="14.5" width="16" height="3" fill="#e0e0e0"/></svg>
<svg class="a" style="left:1890.0px;top:311.0px;" width="22" height="22" viewBox="0 0 22 22"><defs><linearGradient id="gg" x1="0" x2="1"><stop offset="0" stop-color="#333"/><stop offset="1" stop-color="#ddd"/></linearGradient></defs><rect x="3.5" y="5.5" width="15" height="11" fill="url(#gg)" stroke="#e0e0e0"/></svg>
<svg class="a" style="left:1890.0px;top:340.0px;" width="22" height="22" viewBox="0 0 22 22"><circle cx="9" cy="9" r="6" fill="#cfcfcf"/><circle cx="13" cy="13" r="6" fill="#7a7a7a" stroke="#dcdcdc" stroke-width="1.4"/></svg>
<svg class="a" style="left:1890.0px;top:381.0px;" width="22" height="22" viewBox="0 0 22 22"><circle cx="11" cy="11" r="7.5" fill="none" stroke="#d8d8d8" stroke-width="1.4" stroke-dasharray="2 1.5"/><circle cx="11" cy="11" r="5.5" fill="#cfcfcf"/></svg>
<svg class="a" style="left:1890.0px;top:408.0px;" width="22" height="22" viewBox="0 0 22 22"><rect x="8.5" y="3.5" width="10" height="10" fill="none" stroke="#dcdcdc" stroke-width="1.2"/><rect x="3.5" y="10.5" width="6" height="6" fill="none" stroke="#dcdcdc" stroke-width="1.2"/><rect x="6" y="13" width="6" height="6" fill="#cfcfcf"/></svg>
<svg class="a" style="left:1890.0px;top:436.0px;" width="22" height="22" viewBox="0 0 22 22"><rect x="4" y="4" width="9" height="9" fill="#cfcfcf"/><rect x="9" y="9" width="9" height="9" fill="#cfcfcf" stroke="#4b4b4b" stroke-width="1"/><rect x="9" y="9" width="4" height="4" fill="#555"/></svg>
<svg class="a" style="left:1890.0px;top:477.0px;" width="22" height="22" viewBox="0 0 22 22"><rect x="5" y="5" width="12" height="12" fill="none" stroke="#dcdcdc" stroke-dasharray="2 1.5"/><path d="M3 3h3v3H3zM16 3h3v3h-3zM3 16h3v3H3zM16 16h3v3h-3zM9.5 3h3v3h-3zM9.5 16h3v3h-3z" fill="#dcdcdc"/></svg>
<svg class="a" style="left:1890.0px;top:506.0px;" width="22" height="22" viewBox="0 0 22 22"><line x1="4.5" y1="3" x2="4.5" y2="19" stroke="#dcdcdc"/><rect x="6" y="5" width="7" height="5" fill="#cfcfcf"/><rect x="6" y="12" width="12" height="5" fill="#cfcfcf"/></svg>
<svg class="a" style="left:1890.0px;top:546.0px;" width="22" height="22" viewBox="0 0 22 22"><circle cx="11" cy="11" r="7.5" fill="#cfcfcf"/><circle cx="11" cy="11" r="8.5" fill="none" stroke="#dcdcdc" stroke-width="1"/><rect x="9.5" y="1.5" width="3" height="3" fill="#dcdcdc"/><rect x="17.5" y="9.5" width="3" height="3" fill="#dcdcdc"/><rect x="9.5" y="17.5" width="3" height="3" fill="#dcdcdc"/></svg>
<div class="a" style="left:1884px;top:585px;width:35px;height:27px;background:#343434;border-radius:3px;"></div>
<div class="t" style="left:1888px;top:590.92px;font-size:19px;color:#d8d8d8;font-weight:normal;font-style:normal;font-family:&quot;Liberation Sans&quot;, sans-serif;transform:scaleX(1.1823);transform-origin:0 0;">A</div>
<div class="a" style="left:1907px;top:588px;width:1px;height:20px;background:#e0e0e0;"></div>
<div class="t" style="left:1893px;top:621.61px;font-size:17px;color:#dcdcdc;font-weight:bold;font-style:normal;font-family:&quot;Liberation Sans&quot;, sans-serif;transform:scaleX(1.2673);transform-origin:0 0;">¶</div>
<div class="t" style="left:1891px;top:645.29px;font-size:21px;color:#cfcfcf;font-weight:normal;font-style:italic;font-family:&quot;Liberation Serif&quot;, serif;transform:scaleX(1.2523);transform-origin:0 0;">O</div>
<div class="a" style="left:1566px;top:103px;width:286px;height:250px;background:#535353;border:1px solid #2c2c2c;border-radius:4px 4px 0 0;"></div>
<div class="a" style="left:1567px;top:104px;width:284px;height:13px;background:#323232;border-radius:3px 3px 0 0;"></div>
<svg class="a" style="left:1821px;top:106px;" width="11" height="9" viewBox="0 0 11 9"><path d="M5 0.5 L1 4.5 L5 8.5 Z M10 0.5 L6 4.5 L10 8.5 Z" fill="#d4d4d4"/></svg>
<svg class="a" style="left:1839px;top:106px;" width="9" height="9" viewBox="0 0 9 9"><path d="M1 1 L8 8 M8 1 L1 8" stroke="#dcdcdc" stroke-width="1.8"/></svg>
<div class="a" style="left:1567px;top:117px;width:284px;height:17px;background:#3b3b3b;"></div>
<div class="a" style="left:1567px;top:117px;width:47px;height:17px;background:#535353;"></div>
<div class="t" style="left:1574px;top:120.61px;font-size:10.5px;color:#e8e8e8;font-weight:normal;font-style:normal;font-family:&quot;Liberation Sans&quot;, sans-serif;transform:scaleX(0.9115);transform-origin:0 0;">Ebenen</div>
<svg class="a" style="left:1832px;top:119px;" width="16" height="12" viewBox="0 0 16 12"><path d="M1 4 L5 4 L3 6.5 Z" fill="#dcdcdc"/><path d="M6 2.5h9M6 5.5h9M6 8.5h9M6 11.5h9" stroke="#dcdcdc" stroke-width="1.1"/></svg>
<div class="a" style="left:1572px;top:139px;width:274px;height:186px;background:#535353;border:1px solid #373737;"></div>
<div class="a" style="left:1573px;top:140px;width:272px;height:21px;background:#4a4a4a;"></div>
<div class="a" style="left:1573px;top:160px;width:272px;height:1px;background:#2c2c2c;"></div>
<div class="a" style="left:1593px;top:140px;width:1px;height:21px;background:#2c2c2c;"></div>
<div class="a" style="left:1614px;top:140px;width:1px;height:21px;background:#2c2c2c;"></div>
<div class="a" style="left:1810px;top:140px;width:1px;height:21px;background:#2c2c2c;"></div>
<div class="a" style="left:1615px;top:140px;width:5px;height:20px;background:#0e8a4a;"></div>
<svg class="a" style="left:1575px;top:145px;" width="14" height="11" viewBox="0 0 14 11"><path d="M1 5.5 Q7 -0.5 13 5.5 Q7 11.5 1 5.5Z" fill="none" stroke="#cfcfcf" stroke-width="1.3"/><circle cx="7" cy="5.5" r="2.8" fill="#2e2e2e"/><circle cx="8" cy="4.3" r="1" fill="#e0e0e0"/></svg>
<div class="a" style="left:1625px;top:148px;width:0;height:0;border-left:4.0px solid transparent;border-right:4.0px solid transparent;border-top:6px solid #dcdcdc"></div>
<div class="a" style="left:1642px;top:142px;width:18px;height:18px;background:#0c0c0c;"></div>
<div class="a" style="left:1643px;top:143px;width:16px;height:16px;background:#f4ead8;"></div>
<svg class="a" style="left:1643px;top:143px;" width="16" height="16" viewBox="0 0 16 16"><path d="M8 1 L13 14 L3 14 Z" fill="#d8484a"/></svg>
<div class="t" style="left:1665px;top:145.61px;font-size:10.5px;color:#e4e4e4;font-weight:normal;font-style:normal;font-family:&quot;Liberation Sans&quot;, sans-serif;">Meine Ebene</div>
<svg class="a" style="left:1813.5px;top:143.5px;" width="14" height="14" viewBox="0 0 14 14"><circle cx="7" cy="7" r="4.3" fill="none" stroke="#d0d0d0" stroke-width="1"/></svg>
<div class="a" style="left:1832px;top:147px;width:8px;height:8px;background:#11904e;border:1px solid #222;"></div>
<div class="a" style="left:1573px;top:161px;width:272px;height:21px;background:#595959;"></div>
<div class="a" style="left:1573px;top:181px;width:272px;height:1px;background:#2c2c2c;"></div>
<div class="a" style="left:1593px;top:161px;width:1px;height:21px;background:#2c2c2c;"></div>
<div class="a" style="left:1614px;top:161px;width:1px;height:21px;background:#2c2c2c;"></div>
<div class="a" style="left:1810px;top:161px;width:1px;height:21px;background:#2c2c2c;"></div>
<div class="a" style="left:1615px;top:161px;width:5px;height:20px;background:#0e8a4a;"></div>
<svg class="a" style="left:1575px;top:166px;" width="14" height="11" viewBox="0 0 14 11"><path d="M1 5.5 Q7 -0.5 13 5.5 Q7 11.5 1 5.5Z" fill="none" stroke="#cfcfcf" stroke-width="1.3"/><circle cx="7" cy="5.5" r="2.8" fill="#2e2e2e"/><circle cx="8" cy="4.3" r="1" fill="#e0e0e0"/></svg>
<div class="a" style="left:1646px;top:167px;width:0;height:0;border-top:4.5px solid transparent;border-bottom:4.5px solid transparent;border-left:6px solid #dcdcdc"></div>
<div class="a" style="left:1663px;top:163px;width:18px;height:18px;background:#0c0c0c;"></div>
<div class="a" style="left:1664px;top:164px;width:16px;height:16px;background:#f4ead8;"></div>
<svg class="a" style="left:1664px;top:164px;" width="16" height="16" viewBox="0 0 16 16"><path d="M8 1 L13 14 L3 14 Z" fill="#d8484a"/></svg>
<div class="t" style="left:1685px;top:166.61px;font-size:10.5px;color:#e4e4e4;font-weight:normal;font-style:normal;font-family:&quot;Liberation Sans&quot;, sans-serif;">Baum</div>
<svg class="a" style="left:1813.5px;top:164.5px;" width="14" height="14" viewBox="0 0 14 14"><circle cx="7" cy="7" r="4.3" fill="none" stroke="#d0d0d0" stroke-width="1"/></svg>
<div class="a" style="left:1573px;top:182px;width:272px;height:21px;background:#595959;"></div>
<div class="a" style="left:1573px;top:202px;width:272px;height:1px;background:#2c2c2c;"></div>
<div class="a" style="left:1593px;top:182px;width:1px;height:21px;background:#2c2c2c;"></div>
<div class="a" style="left:1614px;top:182px;width:1px;height:21px;background:#2c2c2c;"></div>
<div class="a" style="left:1810px;top:182px;width:1px;height:21px;background:#2c2c2c;"></div>
<div class="a" style="left:1615px;top:182px;width:5px;height:20px;background:#0e8a4a;"></div>
<svg class="a" style="left:1575px;top:187px;" width="14" height="11" viewBox="0 0 14 11"><path d="M1 5.5 Q7 -0.5 13 5.5 Q7 11.5 1 5.5Z" fill="none" stroke="#cfcfcf" stroke-width="1.3"/><circle cx="7" cy="5.5" r="2.8" fill="#2e2e2e"/><circle cx="8" cy="4.3" r="1" fill="#e0e0e0"/></svg>
<div class="a" style="left:1663px;top:184px;width:18px;height:18px;background:#0c0c0c;"></div>
<div class="a" style="left:1664px;top:185px;width:16px;height:16px;background:#fbfbfb;"></div>
<div class="a" style="left:1665px;top:192px;width:14px;height:2px;background:#d23a3a;"></div>
<div class="t" style="left:1685px;top:187.61px;font-size:10.5px;color:#e4e4e4;font-weight:normal;font-style:normal;font-family:&quot;Liberation Sans&quot;, sans-serif;">Frohe Weihnachten!</div>
<svg class="a" style="left:1813.5px;top:185.5px;" width="14" height="14" viewBox="0 0 14 14"><circle cx="7" cy="7" r="4.3" fill="none" stroke="#d0d0d0" stroke-width="1"/><circle cx="7" cy="7" r="6.3" fill="none" stroke="#d0d0d0" stroke-width="1"/></svg>
<div class="a" style="left:1832px;top:189px;width:8px;height:8px;background:#11904e;border:1px solid #222;"></div>
<div class="a" style="left:1573px;top:203px;width:272px;height:21px;background:#595959;"></div>
<div class="a" style="left:1573px;top:223px;width:272px;height:1px;background:#2c2c2c;"></div>
<div class="a" style="left:1593px;top:203px;width:1px;height:21px;background:#2c2c2c;"></div>
<div class="a" style="left:1614px;top:203px;width:1px;height:21px;background:#2c2c2c;"></div>
<div class="a" style="left:1810px;top:203px;width:1px;height:21px;background:#2c2c2c;"></div>
<div class="a" style="left:1615px;top:203px;width:5px;height:20px;background:#0e8a4a;"></div>
<svg class="a" style="left:1575px;top:208px;" width="14" height="11" viewBox="0 0 14 11"><path d="M1 5.5 Q7 -0.5 13 5.5 Q7 11.5 1 5.5Z" fill="none" stroke="#cfcfcf" stroke-width="1.3"/><circle cx="7" cy="5.5" r="2.8" fill="#2e2e2e"/><circle cx="8" cy="4.3" r="1" fill="#e0e0e0"/></svg>
<svg class="a" style="left:1599px;top:207px;" width="10" height="12" viewBox="0 0 10 12"><path d="M2.5 6 V4 A2.5 2.5 0 0 1 7.5 4 V6" fill="none" stroke="#b8b8b8" stroke-width="1.5"/><rect x="1" y="6" width="8" height="6" fill="#b8b8b8"/></svg>
<div class="a" style="left:1663px;top:205px;width:18px;height:18px;background:#0c0c0c;"></div>
<div class="a" style="left:1664px;top:206px;width:16px;height:16px;background:linear-gradient(90deg,#c9a070,#f2e6cc 35%,#f2e6cc 65%,#c9a070)"></div>
<div class="t" style="left:1685px;top:208.61px;font-size:10.5px;color:#e4e4e4;font-weight:normal;font-style:normal;font-family:&quot;Liberation Sans&quot;, sans-serif;">&lt;Bild&gt;</div>
<svg class="a" style="left:1813.5px;top:206.5px;" width="14" height="14" viewBox="0 0 14 14"><circle cx="7" cy="7" r="4.3" fill="none" stroke="#d0d0d0" stroke-width="1"/></svg>
<div class="a" style="left:1573px;top:224px;width:272px;height:21px;background:#595959;"></div>
<div class="a" style="left:1573px;top:244px;width:272px;height:1px;background:#2c2c2c;"></div>
<div class="a" style="left:1593px;top:224px;width:1px;height:21px;background:#2c2c2c;"></div>
<div class="a" style="left:1614px;top:224px;width:1px;height:21px;background:#2c2c2c;"></div>
<div class="a" style="left:1810px;top:224px;width:1px;height:21px;background:#2c2c2c;"></div>
<div class="a" style="left:1615px;top:224px;width:5px;height:20px;background:#0e8a4a;"></div>
<svg class="a" style="left:1575px;top:229px;" width="14" height="11" viewBox="0 0 14 11"><path d="M1 5.5 Q7 -0.5 13 5.5 Q7 11.5 1 5.5Z" fill="none" stroke="#cfcfcf" stroke-width="1.3"/><circle cx="7" cy="5.5" r="2.8" fill="#2e2e2e"/><circle cx="8" cy="4.3" r="1" fill="#e0e0e0"/></svg>
<div class="a" style="left:1663px;top:226px;width:18px;height:18px;background:#0c0c0c;"></div>
<div class="a" style="left:1664px;top:227px;width:16px;height:16px;background:#e0662a;"></div>
<div class="t" style="left:1685px;top:229.61px;font-size:10.5px;color:#e4e4e4;font-weight:normal;font-style:normal;font-family:&quot;Liberation Sans&quot;, sans-serif;">&lt;Pfad&gt;</div>
<svg class="a" style="left:1813.5px;top:227.5px;" width="14" height="14" viewBox="0 0 14 14"><circle cx="7" cy="7" r="4.3" fill="none" stroke="#d0d0d0" stroke-width="1"/></svg>
<div class="a" style="left:1573px;top:245px;width:272px;height:21px;background:#4a4a4a;"></div>
<div class="a" style="left:1573px;top:265px;width:272px;height:1px;background:#2c2c2c;"></div>
<div class="a" style="left:1593px;top:245px;width:1px;height:21px;background:#2c2c2c;"></div>
<div class="a" style="left:1614px;top:245px;width:1px;height:21px;background:#2c2c2c;"></div>
<div class="a" style="left:1810px;top:245px;width:1px;height:21px;background:#2c2c2c;"></div>
<div class="a" style="left:1615px;top:245px;width:5px;height:20px;background:#e8701e;"></div>
<svg class="a" style="left:1575px;top:250px;" width="14" height="11" viewBox="0 0 14 11"><path d="M1 5.5 Q7 -0.5 13 5.5 Q7 11.5 1 5.5Z" fill="none" stroke="#cfcfcf" stroke-width="1.3"/><circle cx="7" cy="5.5" r="2.8" fill="#2e2e2e"/><circle cx="8" cy="4.3" r="1" fill="#e0e0e0"/></svg>
<svg class="a" style="left:1599px;top:249px;" width="10" height="12" viewBox="0 0 10 12"><path d="M2.5 6 V4 A2.5 2.5 0 0 1 7.5 4 V6" fill="none" stroke="#b8b8b8" stroke-width="1.5"/><rect x="1" y="6" width="8" height="6" fill="#b8b8b8"/></svg>
<div class="a" style="left:1626px;top:251px;width:0;height:0;border-top:4.5px solid transparent;border-bottom:4.5px solid transparent;border-left:6px solid #dcdcdc"></div>
<div class="a" style="left:1642px;top:247px;width:18px;height:18px;background:#0c0c0c;"></div>
<div class="a" style="left:1643px;top:248px;width:16px;height:16px;background:#f6f6f6;"></div>
<div class="a" style="left:1651px;top:254px;width:3px;height:3px;background:#8a8a8a;"></div>
<div class="a" style="left:1649px;top:260px;width:3px;height:2px;background:#555;"></div>
<div class="t" style="left:1665px;top:250.61px;font-size:10.5px;color:#e4e4e4;font-weight:normal;font-style:normal;font-family:&quot;Liberation Sans&quot;, sans-serif;">Vorlage Vorderseite</div>
<svg class="a" style="left:1813.5px;top:248.5px;" width="14" height="14" viewBox="0 0 14 14"><circle cx="7" cy="7" r="4.3" fill="none" stroke="#d0d0d0" stroke-width="1"/></svg>
<div class="a" style="left:1573px;top:266px;width:272px;height:21px;background:#4a4a4a;"></div>
<div class="a" style="left:1573px;top:286px;width:272px;height:1px;background:#2c2c2c;"></div>
<div class="a" style="left:1593px;top:266px;width:1px;height:21px;background:#2c2c2c;"></div>
<div class="a" style="left:1614px;top:266px;width:1px;height:21px;background:#2c2c2c;"></div>
<div class="a" style="left:1810px;top:266px;width:1px;height:21px;background:#2c2c2c;"></div>
<div class="a" style="left:1615px;top:266px;width:5px;height:20px;background:#e8701e;"></div>
<svg class="a" style="left:1575px;top:271px;" width="14" height="11" viewBox="0 0 14 11"><path d="M1 5.5 Q7 -0.5 13 5.5 Q7 11.5 1 5.5Z" fill="none" stroke="#cfcfcf" stroke-width="1.3"/><circle cx="7" cy="5.5" r="2.8" fill="#2e2e2e"/><circle cx="8" cy="4.3" r="1" fill="#e0e0e0"/></svg>
<svg class="a" style="left:1599px;top:270px;" width="10" height="12" viewBox="0 0 10 12"><path d="M2.5 6 V4 A2.5 2.5 0 0 1 7.5 4 V6" fill="none" stroke="#b8b8b8" stroke-width="1.5"/><rect x="1" y="6" width="8" height="6" fill="#b8b8b8"/></svg>
<div class="a" style="left:1626px;top:272px;width:0;height:0;border-top:4.5px solid transparent;border-bottom:4.5px solid transparent;border-left:6px solid #dcdcdc"></div>
<div class="a" style="left:1642px;top:268px;width:18px;height:18px;background:#0c0c0c;"></div>
<div class="a" style="left:1643px;top:269px;width:16px;height:16px;background:#f6f6f6;"></div>
<div class="a" style="left:1651px;top:275px;width:3px;height:3px;background:#8a8a8a;"></div>
<div class="a" style="left:1649px;top:281px;width:3px;height:2px;background:#555;"></div>
<div class="t" style="left:1665px;top:271.61px;font-size:10.5px;color:#e4e4e4;font-weight:normal;font-style:normal;font-family:&quot;Liberation Sans&quot;, sans-serif;">Vorlage Rückseite</div>
<svg class="a" style="left:1813.5px;top:269.5px;" width="14" height="14" viewBox="0 0 14 14"><circle cx="7" cy="7" r="4.3" fill="none" stroke="#d0d0d0" stroke-width="1"/></svg>
<svg class="a" style="left:1837px;top:141px;" width="7" height="7" viewBox="0 0 7 7"><path d="M0 0 H7 V7 Z" fill="#e0e0e0"/></svg>
<div class="t" style="left:1572px;top:328.61px;font-size:10.5px;color:#e0e0e0;font-weight:normal;font-style:normal;font-family:&quot;Liberation Sans&quot;, sans-serif;transform:scaleX(0.9117);transform-origin:0 0;">3 Ebenen</div>
<svg class="a" style="left:1706px;top:327px;" width="14" height="14" viewBox="0 0 14 14"><circle cx="8.5" cy="5.5" r="4" fill="none" stroke="#d0d0d0" stroke-width="1.3"/><path d="M5.5 8.5 L1.5 12.5" stroke="#d0d0d0" stroke-width="1.4"/></svg>
<svg class="a" style="left:1733px;top:327px;" width="13" height="13" viewBox="0 0 13 13"><rect x="1" y="1" width="8" height="8" fill="none" stroke="#777"/><rect x="4" y="4" width="8" height="8" fill="#666" stroke="#777"/></svg>
<svg class="a" style="left:1758px;top:327px;" width="16" height="12" viewBox="0 0 16 12"><path d="M1 4 h5 M4 1 v6 M7 3 h8 v8 h-5" fill="none" stroke="#777" stroke-width="1.3"/></svg>
<svg class="a" style="left:1785px;top:328px;" width="13" height="13" viewBox="0 0 13 13"><path d="M3 3 H12 V12 H6 V9 H3 Z" fill="#d8d8d8"/><path d="M1 9 L6 14 V9 Z" fill="#999"/></svg>
<svg class="a" style="left:1811px;top:327px;" width="12" height="14" viewBox="0 0 12 14"><path d="M1 3 H11 M4 3 V1 H8 V3 M2 4 L3 13 H9 L10 4" fill="none" stroke="#777" stroke-width="1.2"/></svg>
<svg class="a" style="left:1838px;top:338px;" width="9" height="9" viewBox="0 0 9 9"><path d="M8 1v1M6 3v1M8 3v1M4 5v1M6 5v1M8 5v1M2 7v1M4 7v1M6 7v1M8 7v1" stroke="#222"/></svg>
<div class="a" style="left:1567px;top:344px;width:284px;height:1px;background:#2e2e2e;"></div>
<div class="a" style="left:1567px;top:345px;width:284px;height:7px;background:#4a4a4a;"></div>
<div class="a" style="left:1699px;top:346px;width:1px;height:5px;background:#151515;"></div>
<div class="a" style="left:1701px;top:346px;width:1px;height:5px;background:#151515;"></div>
<div class="a" style="left:1703px;top:346px;width:1px;height:5px;background:#151515;"></div>
<div class="a" style="left:1705px;top:346px;width:1px;height:5px;background:#151515;"></div>
<div class="a" style="left:1707px;top:346px;width:1px;height:5px;background:#151515;"></div>
<div class="a" style="left:1709px;top:346px;width:1px;height:5px;background:#151515;"></div>
<div class="a" style="left:1711px;top:346px;width:1px;height:5px;background:#151515;"></div>
<div class="a" style="left:1713px;top:346px;width:1px;height:5px;background:#151515;"></div>
<div class="a" style="left:1715px;top:346px;width:1px;height:5px;background:#151515;"></div>
<div class="a" style="left:1717px;top:346px;width:1px;height:5px;background:#151515;"></div>
<div class="a" style="left:1570px;top:180px;width:277px;height:27px;border:5px solid #fb0000;"></div>
<div class="a" style="left:1649px;top:571px;width:231px;height:171px;background:#535353;border:1px solid #2c2c2c;"></div>
<div class="a" style="left:1649px;top:571px;width:231px;height:6px;background:#282828;"></div>
<div class="a" style="left:1650px;top:577px;width:229px;height:16px;background:#3a3a3a;"></div>
<div class="a" style="left:1652px;top:577px;width:52px;height:16px;background:#505050;"></div>
<svg class="a" style="left:1654px;top:579px;" width="6" height="11" viewBox="0 0 6 11"><path d="M3 0.5 L5.5 4 H0.5 Z M3 10.5 L5.5 7 H0.5 Z" fill="#e0e0e0"/></svg>
<div class="t" style="left:1663px;top:580.11px;font-size:10.5px;color:#f0f0f0;font-weight:bold;font-style:normal;font-family:&quot;Liberation Sans&quot;, sans-serif;transform:scaleX(0.9071);transform-origin:0 0;">Zeichen</div>
<div class="t" style="left:1713px;top:580.11px;font-size:10.5px;color:#a6a6a6;font-weight:bold;font-style:normal;font-family:&quot;Liberation Sans&quot;, sans-serif;transform:scaleX(0.9002);transform-origin:0 0;">Absatz</div>
<div class="a" style="left:1750px;top:578px;width:1px;height:14px;background:#2e2e2e;"></div>
<div class="t" style="left:1759px;top:580.11px;font-size:10.5px;color:#a6a6a6;font-weight:bold;font-style:normal;font-family:&quot;Liberation Sans&quot;, sans-serif;transform:scaleX(0.9493);transform-origin:0 0;">OpenType</div>
<div class="a" style="left:1814px;top:578px;width:1px;height:14px;background:#2e2e2e;"></div>
<svg class="a" style="left:1839px;top:580px;" width="11" height="9" viewBox="0 0 11 9"><path d="M0.5 0.5 L5 4.5 L0.5 8.5 Z M5.5 0.5 L10 4.5 L5.5 8.5 Z" fill="#dcdcdc"/></svg>
<div class="a" style="left:1856px;top:579px;width:1px;height:12px;background:#2e2e2e;"></div>
<div class="a" style="left:1857px;top:579px;width:1px;height:12px;background:#5a5a5a;"></div>
<svg class="a" style="left:1861px;top:579px;" width="16" height="12" viewBox="0 0 16 12"><path d="M1 4 L5 4 L3 6.5 Z" fill="#dcdcdc"/><path d="M6 2.5h9M6 5.5h9M6 8.5h9M6 11.5h9" stroke="#dcdcdc" stroke-width="1.1"/></svg>
<div class="a" style="left:1656px;top:600px;width:186px;height:24px;border:1px solid #333;background:linear-gradient(180deg,#626262,#555)"></div>
<svg class="a" style="left:1675px;top:603px;" width="18" height="18" viewBox="0 0 18 18"><rect x="3" y="3" width="12" height="12" fill="none" stroke="#d8d8d8" stroke-width="1.2"/><circle cx="3" cy="3" r="2" fill="#d8d8d8"/><circle cx="15" cy="3" r="2" fill="#d8d8d8"/><circle cx="3" cy="15" r="2" fill="#d8d8d8"/><circle cx="15" cy="15" r="2" fill="#d8d8d8"/><path d="M6 6 H12 M9 6 V13 M7.5 13 H10.5" stroke="#e8e8e8" stroke-width="1.1" fill="none"/></svg>
<div class="t" style="left:1700px;top:607.11px;font-size:10.5px;color:#d8d8d8;font-weight:normal;font-style:normal;font-family:&quot;Liberation Sans&quot;, sans-serif;transform:scaleX(0.9673);transform-origin:0 0;">Touch-Type-Textwerkzeug</div>
<div class="a" style="left:1656px;top:631px;width:200px;height:19px;background:#b3b3b3;border:1px solid #2e2e2e;"></div>
<svg class="a" style="left:1658px;top:633px;" width="22" height="15" viewBox="0 0 22 15"><circle cx="9" cy="6" r="4.2" fill="none" stroke="#222" stroke-width="1.2"/><line x1="6" y1="9" x2="2" y2="13" stroke="#222" stroke-width="1.3"/><path d="M14 11 L18 11 L16 13 Z" fill="#222"/></svg>
<div class="t" style="left:1681px;top:635.11px;font-size:10.5px;color:#161616;font-weight:normal;font-style:normal;font-family:&quot;Liberation Sans&quot;, sans-serif;transform:scaleX(0.9790);transform-origin:0 0;">Carrington</div>
<div class="a" style="left:1855px;top:631px;width:18px;height:19px;background:#545454;border:1px solid #2e2e2e;"></div>
<div class="a" style="left:1860.5px;top:638.5px;width:0;height:0;border-left:3.5px solid transparent;border-right:3.5px solid transparent;border-top:5px solid #e6e6e6"></div>
<div class="a" style="left:1656px;top:657px;width:200px;height:19px;background:#b3b3b3;border:1px solid #2e2e2e;"></div>
<div class="t" style="left:1660px;top:661.11px;font-size:10.5px;color:#161616;font-weight:normal;font-style:normal;font-family:&quot;Liberation Sans&quot;, sans-serif;transform:scaleX(0.9244);transform-origin:0 0;">Regular</div>
<div class="a" style="left:1855px;top:657px;width:18px;height:19px;background:#545454;border:1px solid #2e2e2e;"></div>
<div class="a" style="left:1860.5px;top:664.5px;width:0;height:0;border-left:3.5px solid transparent;border-right:3.5px solid transparent;border-top:5px solid #e6e6e6"></div>
<div class="a" style="left:1655px;top:681px;width:219px;height:1px;background:#3e3e3e;"></div>
<div class="a" style="left:1655px;top:682px;width:219px;height:1px;background:#5e5e5e;"></div>
<svg class="a" style="left:1654px;top:690px;" width="20" height="19" viewBox="0 0 20 19"><text x="0" y="17" font-family="Liberation Serif" font-size="12" fill="#9a9a9a">T</text><text x="6" y="16" font-family="Liberation Serif" font-size="19" fill="#c8c8c8">T</text></svg>
<div class="a" style="left:1677px;top:690px;width:17px;height:19px;background:#545454;border:1px solid #2e2e2e;"></div>
<div class="a" style="left:1678px;top:699.5px;width:15px;height:1px;background:#333;"></div>
<div class="a" style="left:1682.5px;top:693px;width:0;height:0;border-left:3.0px solid transparent;border-right:3.0px solid transparent;border-bottom:4px solid #e0e0e0"></div>
<div class="a" style="left:1682.5px;top:702.5px;width:0;height:0;border-left:3.0px solid transparent;border-right:3.0px solid transparent;border-top:4px solid #e0e0e0"></div>
<div class="a" style="left:1694px;top:690px;width:47px;height:19px;background:#b3b3b3;border:1px solid #2e2e2e;"></div>
<div class="t" style="left:1698px;top:694.11px;font-size:10.5px;color:#161616;font-weight:normal;font-style:normal;font-family:&quot;Liberation Sans&quot;, sans-serif;transform:scaleX(0.9418);transform-origin:0 0;">20 pt</div>
<div class="a" style="left:1741px;top:690px;width:15px;height:19px;background:#545454;border:1px solid #2e2e2e;"></div>
<div class="a" style="left:1745.0px;top:697.5px;width:0;height:0;border-left:3.5px solid transparent;border-right:3.5px solid transparent;border-top:5px solid #e6e6e6"></div>
<svg class="a" style="left:1771px;top:687px;" width="20" height="23" viewBox="0 0 20 23"><text x="6" y="10" font-family="Liberation Sans" font-size="10" fill="#d0d0d0">A</text><text x="6" y="20" font-family="Liberation Sans" font-size="10" fill="#d0d0d0">A</text><path d="M5 11h11M5 21h11" stroke="#d0d0d0"/><path d="M2 12v8M0.5 13.5 L2 12 L3.5 13.5M0.5 18.5 L2 20 L3.5 18.5" fill="none" stroke="#d0d0d0"/></svg>
<div class="a" style="left:1794px;top:690px;width:17px;height:19px;background:#545454;border:1px solid #2e2e2e;"></div>
<div class="a" style="left:1795px;top:699.5px;width:15px;height:1px;background:#333;"></div>
<div class="a" style="left:1799.5px;top:693px;width:0;height:0;border-left:3.0px solid transparent;border-right:3.0px solid transparent;border-bottom:4px solid #e0e0e0"></div>
<div class="a" style="left:1799.5px;top:702.5px;width:0;height:0;border-left:3.0px solid transparent;border-right:3.0px solid transparent;border-top:4px solid #e0e0e0"></div>
<div class="a" style="left:1811px;top:690px;width:47px;height:19px;background:#b3b3b3;border:1px solid #2e2e2e;"></div>
<div class="t" style="left:1815px;top:694.11px;font-size:10.5px;color:#161616;font-weight:normal;font-style:normal;font-family:&quot;Liberation Sans&quot;, sans-serif;transform:scaleX(0.9552);transform-origin:0 0;">(24 pt)</div>
<div class="a" style="left:1858px;top:690px;width:15px;height:19px;background:#545454;border:1px solid #2e2e2e;"></div>
<div class="a" style="left:1862.0px;top:697.5px;width:0;height:0;border-left:3.5px solid transparent;border-right:3.5px solid transparent;border-top:5px solid #e6e6e6"></div>
<svg class="a" style="left:1654px;top:716px;" width="20" height="19" viewBox="0 0 20 19"><text x="0" y="14" font-family="Liberation Sans" font-size="13" fill="#c8c8c8" letter-spacing="-2">V/A</text><path d="M10 17h8M10 17l3-2M10 17l3 2" stroke="#c8c8c8" fill="none"/></svg>
<div class="a" style="left:1677px;top:716px;width:17px;height:19px;background:#545454;border:1px solid #2e2e2e;"></div>
<div class="a" style="left:1678px;top:725.5px;width:15px;height:1px;background:#333;"></div>
<div class="a" style="left:1682.5px;top:719px;width:0;height:0;border-left:3.0px solid transparent;border-right:3.0px solid transparent;border-bottom:4px solid #e0e0e0"></div>
<div class="a" style="left:1682.5px;top:728.5px;width:0;height:0;border-left:3.0px solid transparent;border-right:3.0px solid transparent;border-top:4px solid #e0e0e0"></div>
<div class="a" style="left:1694px;top:716px;width:47px;height:19px;background:#b3b3b3;border:1px solid #2e2e2e;"></div>
<div class="t" style="left:1698px;top:720.11px;font-size:10.5px;color:#161616;font-weight:normal;font-style:normal;font-family:&quot;Liberation Sans&quot;, sans-serif;transform:scaleX(1.0122);transform-origin:0 0;">(0)</div>
<div class="a" style="left:1741px;top:716px;width:15px;height:19px;background:#545454;border:1px solid #2e2e2e;"></div>
<div class="a" style="left:1745.0px;top:723.5px;width:0;height:0;border-left:3.5px solid transparent;border-right:3.5px solid transparent;border-top:5px solid #e6e6e6"></div>
<svg class="a" style="left:1771px;top:716px;" width="20" height="19" viewBox="0 0 20 19"><rect x="0" y="0" width="20" height="14" fill="#555"/><text x="1" y="12" font-family="Liberation Sans" font-size="13" fill="#c8c8c8" letter-spacing="-1">VA</text><path d="M1 17h18M1 17l3-2M1 17l3 2M19 17l-3-2M19 17l-3 2" stroke="#c8c8c8" fill="none"/></svg>
<div class="a" style="left:1794px;top:716px;width:17px;height:19px;background:#545454;border:1px solid #2e2e2e;"></div>
<div class="a" style="left:1795px;top:725.5px;width:15px;height:1px;background:#333;"></div>
<div class="a" style="left:1799.5px;top:719px;width:0;height:0;border-left:3.0px solid transparent;border-right:3.0px solid transparent;border-bottom:4px solid #e0e0e0"></div>
<div class="a" style="left:1799.5px;top:728.5px;width:0;height:0;border-left:3.0px solid transparent;border-right:3.0px solid transparent;border-top:4px solid #e0e0e0"></div>
<div class="a" style="left:1811px;top:716px;width:47px;height:19px;background:#b3b3b3;border:1px solid #2e2e2e;"></div>
<div class="t" style="left:1815px;top:720.11px;font-size:10.5px;color:#161616;font-weight:normal;font-style:normal;font-family:&quot;Liberation Sans&quot;, sans-serif;transform:scaleX(0.9218);transform-origin:0 0;">-25</div>
<div class="a" style="left:1858px;top:716px;width:15px;height:19px;background:#545454;border:1px solid #2e2e2e;"></div>
<div class="a" style="left:1862.0px;top:723.5px;width:0;height:0;border-left:3.5px solid transparent;border-right:3.5px solid transparent;border-top:5px solid #e6e6e6"></div>
<div class="a" style="left:1646px;top:571px;width:64px;height:28px;border:5px solid #fb0000;"></div>
<div class="a" style="left:1651px;top:625px;width:228px;height:31px;border:5px solid #fb0000;"></div>
<div class="a" style="left:1648px;top:682px;width:112px;height:32px;border:5px solid #fb0000;"></div>
<div class="a" style="left:1764px;top:709px;width:113px;height:32px;border:5px solid #fb0000;"></div>
<div class="a" style="left:41px;top:1022px;width:1839px;height:18px;background:#383838;"></div>
<div class="a" style="left:41px;top:1022px;width:481px;height:18px;background:#474747;"></div>
<div class="a" style="left:502px;top:1023px;width:20px;height:17px;background:#4e4e4e;"></div>
<div class="a" style="left:41px;top:1022px;width:1839px;height:1px;background:#262626;"></div>
<svg class="a" style="left:48px;top:1026px;" width="22" height="11" viewBox="0 0 22 11"><circle cx="6" cy="5.5" r="3.5" fill="none" stroke="#6a6a6a" stroke-width="2" stroke-dasharray="1.5 1"/><path d="M12 3 h6 l-2 -2 M18 8 h-6 l2 2" stroke="#6a6a6a" stroke-width="1.2" fill="none"/></svg>
<svg class="a" style="left:78px;top:1024px;" width="15" height="13" viewBox="0 0 15 13"><path d="M1 5 V12 H12 V9" fill="none" stroke="#dcdcdc" stroke-width="1.4"/><path d="M4 9 Q5 4 10 4 V1 L14 5 L10 9 V6 Q6 6 4 9Z" fill="#dcdcdc"/></svg>
<div class="a" style="left:103px;top:1024px;width:42px;height:16px;background:#b6b6b6;border:1px solid #262626;"></div>
<div class="t" style="left:106px;top:1028.11px;font-size:10.5px;color:#161616;font-weight:normal;font-style:normal;font-family:&quot;Liberation Sans&quot;, sans-serif;transform:scaleX(0.9308);transform-origin:0 0;">350%</div>
<div class="a" style="left:145px;top:1024px;width:15px;height:16px;background:#525252;border:1px solid #262626;"></div>
<div class="a" style="left:149px;top:1030px;width:0;height:0;border-left:3.5px solid transparent;border-right:3.5px solid transparent;border-top:5px solid #e6e6e6"></div>
<svg class="a" style="left:170px;top:1026px;" width="12" height="10" viewBox="0 0 12 10"><path d="M1.5 0.5 V9.5 M10 0.5 L3.5 5 L10 9.5Z" fill="#5e5e5e" stroke="#5e5e5e"/></svg>
<svg class="a" style="left:188px;top:1026px;" width="9" height="10" viewBox="0 0 9 10"><path d="M7.5 0.5 L1.5 5 L7.5 9.5Z" fill="#5e5e5e"/></svg>
<div class="a" style="left:203px;top:1024px;width:42px;height:16px;background:#b6b6b6;border:1px solid #262626;"></div>
<div class="t" style="left:207px;top:1028.11px;font-size:10.5px;color:#161616;font-weight:normal;font-style:normal;font-family:&quot;Liberation Sans&quot;, sans-serif;">1</div>
<div class="a" style="left:245px;top:1024px;width:15px;height:16px;background:#525252;border:1px solid #262626;"></div>
<div class="a" style="left:249px;top:1030px;width:0;height:0;border-left:3.5px solid transparent;border-right:3.5px solid transparent;border-top:5px solid #e6e6e6"></div>
<svg class="a" style="left:270px;top:1026px;" width="9" height="10" viewBox="0 0 9 10"><path d="M1.5 0.5 L7.5 5 L1.5 9.5Z" fill="#5e5e5e"/></svg>
<svg class="a" style="left:285px;top:1026px;" width="12" height="10" viewBox="0 0 12 10"><path d="M10.5 0.5 V9.5 M2 0.5 L8.5 5 L2 9.5Z" fill="#5e5e5e" stroke="#5e5e5e"/></svg>
<div class="a" style="left:301px;top:1023px;width:1px;height:17px;background:#2a2a2a;"></div>
<div class="t" style="left:393px;top:1027.11px;font-size:10.5px;color:#d4d4d4;font-weight:normal;font-style:normal;font-family:&quot;Liberation Sans&quot;, sans-serif;transform:scaleX(0.9862);transform-origin:0 0;">Text</div>
<div class="a" style="left:502px;top:1023px;width:1px;height:17px;background:#2a2a2a;"></div>
<div class="a" style="left:509px;top:1026px;width:0;height:0;border-top:5.0px solid transparent;border-bottom:5.0px solid transparent;border-left:6px solid #e0e0e0"></div>
<div class="a" style="left:527px;top:1026px;width:0;height:0;border-top:5.0px solid transparent;border-bottom:5.0px solid transparent;border-right:6px solid #e0e0e0"></div>
<div class="a" style="left:1183px;top:1024px;width:16px;height:16px;background:#a2a2a2;"></div>
<div class="a" style="left:1852px;top:1026px;width:0;height:0;border-top:5.0px solid transparent;border-bottom:5.0px solid transparent;border-left:6px solid #e0e0e0"></div>
<div class="a" style="left:1863px;top:1022px;width:17px;height:18px;background:#3e3e3e;border-left:1px solid #262626;"></div>
<div class="a" style="left:88px;top:29px;width:90px;height:38px;border:5px solid #fb0000;"></div>
</body></html>
